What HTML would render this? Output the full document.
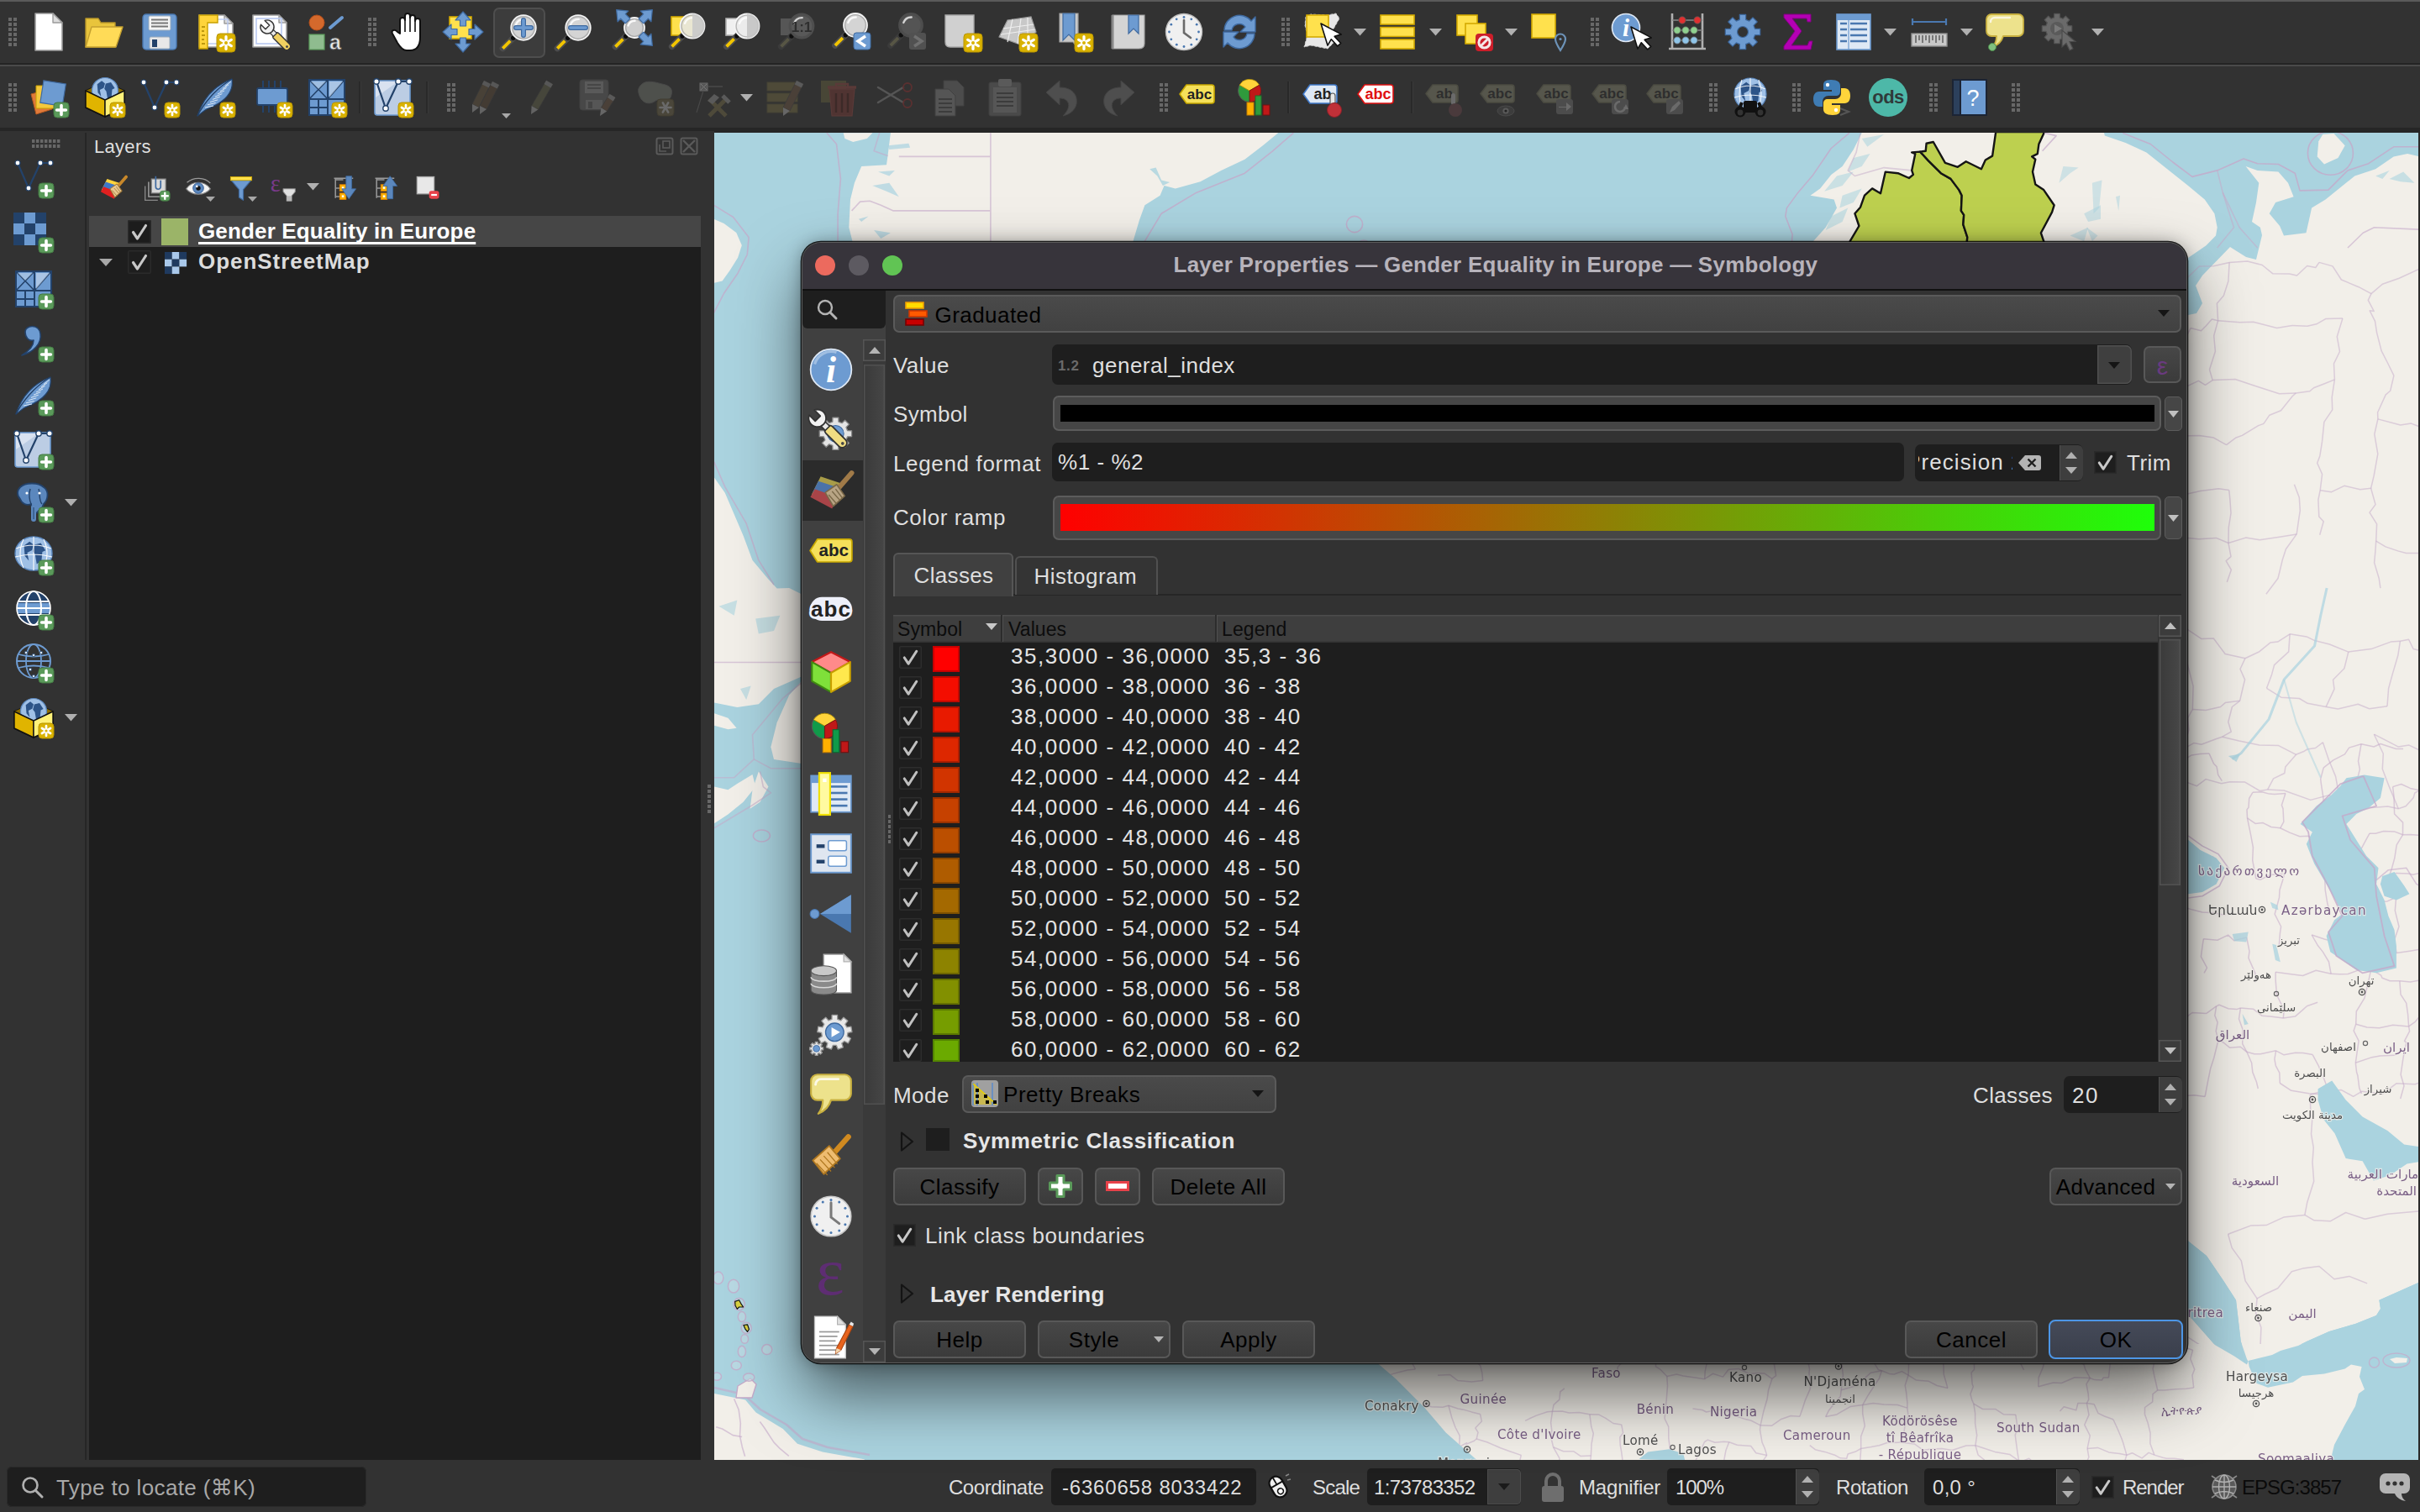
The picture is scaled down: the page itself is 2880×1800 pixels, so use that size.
<!DOCTYPE html>
<html lang="en"><head><meta charset="utf-8"><title>QGIS — Layer Properties</title>
<style>
html,body{margin:0;padding:0;background:#323232;}
body{width:2880px;height:1800px;position:relative;overflow:hidden;font-family:"Liberation Sans", "DejaVu Sans", sans-serif;}
body div,body svg{position:absolute;}
.t{white-space:nowrap;}
svg{overflow:visible;}
</style></head><body>
<div style="left:0px;top:0px;width:2880px;height:1800px;background:#323232;"></div>
<div style="left:0px;top:0px;width:2880px;height:2px;background:#5a5a5a;"></div>
<div style="left:0px;top:75px;width:2880px;height:2px;background:#242424;"></div>
<div style="left:0px;top:77px;width:2880px;height:2px;background:#4a4a4a;"></div>
<div style="left:0px;top:152px;width:2880px;height:4px;background:#262626;"></div>
<div style="left:101px;top:158px;width:2px;height:1580px;background:#262626;"></div>
<div class="t" style="left:112px;top:163.9px;font-size:22px;line-height:22px;color:#dfdfdf;letter-spacing:0.3px;">Layers</div>
<svg style="left:780px;top:163px;" width="56" height="24" viewBox="0 0 56 24"><rect x="1.5" y="1.5" width="19" height="19" rx="2" fill="none" stroke="#5a5a5a" stroke-width="2"/><rect x="9" y="5" width="8" height="8" fill="none" stroke="#5a5a5a" stroke-width="1.6"/><path d="M5 9v8h8" fill="none" stroke="#5a5a5a" stroke-width="1.6"/><rect x="30.5" y="1.5" width="19" height="19" rx="2" fill="none" stroke="#5a5a5a" stroke-width="2"/><path d="M33 4L47 18M47 4L33 18" stroke="#5a5a5a" stroke-width="2.4"/></svg>
<div style="left:106px;top:257px;width:728px;height:1481px;background:#1e1e1e;"></div>
<div style="left:106px;top:257px;width:728px;height:37px;background:#464646;"></div>
<div style="left:152px;top:262px;width:28px;height:28px;background:#1c1c1c;box-shadow:inset 0 0 0 1.5px #2a2a2a;border-radius:2px;"><svg width="28" height="28" viewBox="0 0 28 28" style="left:0;top:0"><path d="M6.5 14.5L11.5 22L21.5 6.5" fill="none" stroke="#c8c8c8" stroke-width="3.2" stroke-linecap="round" stroke-linejoin="round"/></svg></div>
<div style="left:192px;top:260px;width:32px;height:32px;background:#9bb468;"></div>
<div class="t" style="left:236px;top:262.0px;font-size:26px;line-height:26px;color:#ffffff;font-weight:700;letter-spacing:0.15px;text-decoration:underline;text-decoration-thickness:2.5px;text-underline-offset:4px;text-decoration-skip-ink:none;">Gender Equality in Europe</div>
<svg style="left:118.0px;top:307.5px;" width="16" height="9" viewBox="0 0 16 9"><path d="M0 0H16L8.0 9Z" fill="#a8a8a8"/></svg>
<div style="left:152px;top:298px;width:28px;height:28px;background:#1e1e1e;box-shadow:inset 0 0 0 1.5px #2b2b2b;border-radius:2px;"><svg width="28" height="28" viewBox="0 0 28 28" style="left:0;top:0"><path d="M6.5 14.5L11.5 22L21.5 6.5" fill="none" stroke="#c8c8c8" stroke-width="3.2" stroke-linecap="round" stroke-linejoin="round"/></svg></div>
<svg style="left:196px;top:300px;" width="26" height="26" viewBox="0 0 26 26"><rect x="0.0" y="0.0" width="8.7" height="8.7" fill="#1f3a5f"/><rect x="8.7" y="0.0" width="8.7" height="8.7" fill="#a9c8ea"/><rect x="17.4" y="0.0" width="8.7" height="8.7" fill="#1f3a5f"/><rect x="0.0" y="8.7" width="8.7" height="8.7" fill="#a9c8ea"/><rect x="8.7" y="8.7" width="8.7" height="8.7" fill="#1f3a5f"/><rect x="17.4" y="8.7" width="8.7" height="8.7" fill="#a9c8ea"/><rect x="0.0" y="17.4" width="8.7" height="8.7" fill="#1f3a5f"/><rect x="8.7" y="17.4" width="8.7" height="8.7" fill="#a9c8ea"/></svg>
<div class="t" style="left:236px;top:298.0px;font-size:26px;line-height:26px;color:#dcdcdc;font-weight:700;letter-spacing:0.95px;">OpenStreetMap</div>
<svg style="left:842px;top:934px;" width="4" height="36" viewBox="0 0 4 36"><rect x="0" y="0" width="4" height="4" fill="#686868"/><rect x="0" y="6" width="4" height="4" fill="#686868"/><rect x="0" y="12" width="4" height="4" fill="#686868"/><rect x="0" y="18" width="4" height="4" fill="#686868"/><rect x="0" y="24" width="4" height="4" fill="#686868"/><rect x="0" y="30" width="4" height="4" fill="#686868"/></svg>
<div style="left:0px;top:1738px;width:2880px;height:62px;background:#323232;"></div>
<div style="left:8px;top:1746px;width:428px;height:48px;background:#1e1e1e;border-radius:6px;box-shadow:inset 0 0 0 1px #2a2a2a;"></div>
<svg style="left:25px;top:1757px;" width="28" height="28" viewBox="0 0 28 28"><circle cx="11" cy="11" r="8.5" fill="none" stroke="#b0b0b0" stroke-width="2.6"/><path d="M17.5 17.5L25 25" stroke="#b0b0b0" stroke-width="3" stroke-linecap="round"/></svg>
<div class="t" style="left:67px;top:1758.0px;font-size:26px;line-height:26px;color:#a8a8a8;letter-spacing:0.38px;">Type to locate (⌘K)</div>
<div class="t" style="left:1129px;top:1758.7px;font-size:24px;line-height:24px;color:#dfdfdf;letter-spacing:-0.46px;">Coordinate</div>
<div style="left:1251px;top:1748px;width:244px;height:44px;background:#1e1e1e;border-radius:5px;"></div>
<div class="t" style="left:1264px;top:1758.7px;font-size:24px;line-height:24px;color:#dfdfdf;letter-spacing:0.81px;">-6360658 8033422</div>
<div class="t" style="left:1562px;top:1758.7px;font-size:24px;line-height:24px;color:#dfdfdf;letter-spacing:-0.8px;">Scale</div>
<div style="left:1627px;top:1748px;width:183px;height:44px;background:#1e1e1e;border-radius:5px;"></div>
<div style="left:1770px;top:1749px;width:40px;height:42px;background:#3e3e3e;border-radius:0 5px 5px 0;box-shadow:inset 0 0 0 1px #4c4c4c;"></div>
<svg style="left:1783.0px;top:1766.0px;" width="14" height="8" viewBox="0 0 14 8"><path d="M0 0H14L7.0 8Z" fill="#1a1a1a"/></svg>
<div class="t" style="left:1635px;top:1758.7px;font-size:24px;line-height:24px;color:#dfdfdf;letter-spacing:-0.63px;">1:73783352</div>
<div class="t" style="left:1879px;top:1758.7px;font-size:24px;line-height:24px;color:#dfdfdf;letter-spacing:-0.17px;">Magnifier</div>
<div style="left:1984px;top:1748px;width:181px;height:44px;background:#1e1e1e;border-radius:5px;"></div>
<div style="left:2137px;top:1749px;width:28px;height:42px;background:#3e3e3e;border-left:1px solid #505050;border-radius:0 6px 6px 0;box-sizing:border-box;"></div>
<svg style="left:2144.0px;top:1757.18px;" width="14" height="8" viewBox="0 0 14 8"><path d="M0 8H14L7.0 0Z" fill="#b0b0b0"/></svg>
<svg style="left:2144.0px;top:1775.24px;" width="14" height="8" viewBox="0 0 14 8"><path d="M0 0H14L7.0 8Z" fill="#b0b0b0"/></svg>
<div class="t" style="left:1994px;top:1758.7px;font-size:24px;line-height:24px;color:#dfdfdf;letter-spacing:-1.1px;">100%</div>
<div class="t" style="left:2185px;top:1758.7px;font-size:24px;line-height:24px;color:#dfdfdf;letter-spacing:-0.42px;">Rotation</div>
<div style="left:2290px;top:1748px;width:185px;height:44px;background:#1e1e1e;border-radius:5px;"></div>
<div style="left:2447px;top:1749px;width:28px;height:42px;background:#3e3e3e;border-left:1px solid #505050;border-radius:0 6px 6px 0;box-sizing:border-box;"></div>
<svg style="left:2454.0px;top:1757.18px;" width="14" height="8" viewBox="0 0 14 8"><path d="M0 8H14L7.0 0Z" fill="#b0b0b0"/></svg>
<svg style="left:2454.0px;top:1775.24px;" width="14" height="8" viewBox="0 0 14 8"><path d="M0 0H14L7.0 8Z" fill="#b0b0b0"/></svg>
<div class="t" style="left:2300px;top:1758.7px;font-size:24px;line-height:24px;color:#dfdfdf;letter-spacing:0.28px;">0,0 °</div>
<div style="left:2489px;top:1757px;width:27px;height:27px;background:#1e1e1e;box-shadow:inset 0 0 0 1.5px #2b2b2b;border-radius:2px;"><svg width="27" height="27" viewBox="0 0 28 28" style="left:0;top:0"><path d="M6.5 14.5L11.5 22L21.5 6.5" fill="none" stroke="#c8c8c8" stroke-width="3.2" stroke-linecap="round" stroke-linejoin="round"/></svg></div>
<div class="t" style="left:2526px;top:1758.7px;font-size:24px;line-height:24px;color:#dfdfdf;letter-spacing:-1.05px;">Render</div>
<div class="t" style="left:2668px;top:1758.7px;font-size:24px;line-height:24px;color:#0a0a0a;letter-spacing:-0.97px;">EPSG:3857</div>
<svg style="left:850px;top:158px;overflow:hidden" width="2028" height="1580" viewBox="850 158 2028 1580"><rect x="850" y="158" width="2028" height="1580" fill="#aad3df"/><path d="M1015.3 290.5L1010.3 270.7L1012.0 237.6L1016.9 217.8L1025.2 198.0L1055.0 196.3L1056.6 184.8L1059.9 158.3L1060.0 158.0L1521.0 158.0L1521.1 158.3L1502.9 173.2L1481.4 189.7L1453.3 202.9L1428.5 216.2L1398.8 224.4L1385.5 221.1L1380.6 232.7L1362.4 244.3L1355.8 262.4L1347.5 290.5L1349.0 300.0L1015.0 300.0Z" fill="#f2efe9"/><path d="M1003.7 158.3L1038.4 158.3L1031.8 164.9L1015.3 169.0L1005.4 164.9Z" fill="#f2efe9"/><path d="M1056.6 173.2L1081.4 170.7L1083.1 175.7L1058.3 178.1Z" fill="#aad3df" opacity="0.7"/><path d="M1045.0 204.6L1064.9 202.9L1058.3 209.5Z" fill="#aad3df" opacity="0.7"/><path d="M1038.4 221.1L1058.3 217.8L1069.8 234.3L1055.0 227.7Z" fill="#aad3df" opacity="0.7"/><path d="M1021.9 260.8L1033.5 257.5L1025.2 264.1Z" fill="#aad3df" opacity="0.7"/><path d="M1040.1 274.0L1059.9 277.3L1048.3 283.9Z" fill="#aad3df" opacity="0.7"/><path d="M1368.2 201.3L1375.6 199.6L1382.2 214.5L1392.1 217.0L1383.9 221.1L1377.3 209.5Z" fill="#aad3df" opacity="0.8"/><path d="M1069.8 186.4L1178.1 186.4" fill="none" stroke="#c4a9c9" stroke-width="1.6" stroke-opacity="0.6" stroke-linejoin="round"/><path d="M1013.6 250.9L1023.6 240.1L1035.1 239.3L1048.3 244.3L1063.2 250.9L1178.1 250.9" fill="none" stroke="#c4a9c9" stroke-width="1.6" stroke-opacity="0.6" stroke-linejoin="round"/><path d="M1178.9 158.3L1178.9 287.2" fill="none" stroke="#c4a9c9" stroke-width="1.6" stroke-opacity="0.6" stroke-linejoin="round"/><path d="M983.9 158.3L995.5 171.5L1000.4 212.9L997.1 254.2L997.1 287.2" fill="none" stroke="#c4a9c9" stroke-width="1.6" stroke-opacity="0.75" stroke-linejoin="round"/><path d="M1046.7 158.3L1040.1 179.8L1056.6 185.6" fill="none" stroke="#c4a9c9" stroke-width="1.6" stroke-opacity="0.6" stroke-linejoin="round"/><path d="M1539.3 158.3L1514.5 179.8L1481.4 206.2L1423.6 229.4L1382.2 254.2L1362.4 287.2" fill="none" stroke="#c4a9c9" stroke-width="1.6" stroke-opacity="0.8" stroke-linejoin="round"/><circle cx="1612" cy="267" r="9.6" fill="none" stroke="#c4a9c9" stroke-width="1.6" stroke-opacity="0.8"/><circle cx="1623" cy="293" r="7" fill="none" stroke="#c4a9c9" stroke-width="1.6" stroke-opacity="0.7"/><path d="M848.5 260.4L861.5 265.9L876.3 277.0L882.8 291.9L878.1 306.7L868.9 321.5L859.6 334.4L848.5 337.2Z" fill="#f2efe9"/><path d="M848.5 243.7L872.6 258.5L891.1 282.6L889.3 303.0L878.1 325.2L861.5 349.3L848.5 374.3" fill="none" stroke="#c4a9c9" stroke-width="1.6" stroke-opacity="0.75" stroke-linejoin="round"/><path d="M2157.9 303.8L2157.9 287.2L2172.7 270.7L2186.0 247.6L2182.6 237.6L2154.5 232.7L2166.1 224.4L2179.3 207.9L2192.6 198.0L2205.8 178.1L2215.7 158.3L2215.0 158.0L2504.0 158.0L2504.8 161.6L2529.6 169.9L2554.4 181.4L2579.2 201.3L2604.0 221.1L2623.8 237.6L2635.4 254.2L2638.7 270.7L2637.0 280.6L2625.5 292.2L2604.0 307.1L2579.2 320.3L2560.0 340.0L2150.0 340.0Z" fill="#f2efe9"/><path d="M2215.7 164.9L2242.1 160.0L2222.3 174.8Z" fill="#aad3df" opacity="0.55"/><path d="M2205.8 188.1L2225.6 183.1L2215.7 198.0L2199.2 204.6Z" fill="#aad3df" opacity="0.55"/><path d="M2186.0 209.5L2205.8 204.6L2192.6 221.1L2171.1 227.7Z" fill="#aad3df" opacity="0.55"/><path d="M2192.6 232.7L2215.7 224.4L2205.8 241.0L2189.3 247.6Z" fill="#aad3df" opacity="0.55"/><path d="M2179.3 257.5L2199.2 247.6L2192.6 264.1L2172.7 274.0Z" fill="#aad3df" opacity="0.55"/><path d="M2200.8 158.3L2179.3 176.5L2157.9 207.9L2139.7 229.4L2126.4 247.6L2124.8 257.5L2133.1 279.0L2132.2 290.5" fill="none" stroke="#c4a9c9" stroke-width="1.6" stroke-opacity="0.8" stroke-linejoin="round"/><path d="M2214.0 158.3L2209.1 181.4L2199.2 202.9L2207.4 209.5L2242.1 199.6L2275.2 202.9" fill="none" stroke="#c4a9c9" stroke-width="1.6" stroke-opacity="0.5" stroke-linejoin="round"/><path d="M2455.4 198.0L2473.6 199.6L2463.6 206.2L2450.4 217.8Z" fill="#aad3df" opacity="0.5"/><path d="M2480.2 254.2L2500.0 244.3L2500.0 260.8L2485.1 264.1Z" fill="#aad3df" opacity="0.5"/><path d="M2463.6 280.6L2485.1 270.7L2480.2 287.2Z" fill="#aad3df" opacity="0.5"/><path d="M2489.9 217.8L2501.5 214.5L2498.2 247.6L2491.6 254.2Z" fill="#aad3df" opacity="0.5"/><path d="M2518.0 234.3L2523.0 232.7L2521.3 250.9Z" fill="#aad3df" opacity="0.5"/><path d="M2483.3 270.7L2496.5 280.6L2489.9 287.2Z" fill="#aad3df" opacity="0.5"/><path d="M2199.2 292.2L2201.7 287.2L2212.4 269.0L2207.4 254.2L2214.0 246.7L2219.0 232.7L2228.1 224.4L2238.0 230.2L2243.8 204.6L2258.7 206.2L2271.9 212.0L2276.9 207.9L2275.2 202.9L2279.3 183.1L2275.2 181.4L2285.1 180.6L2295.0 191.4L2309.9 206.2L2321.5 212.9L2331.4 226.1L2334.7 232.7L2333.9 250.9L2337.2 255.8L2336.4 267.4L2341.3 282.3L2340.5 292.2Z" fill="#bdd04f" stroke="#151515" stroke-width="2.4" stroke-linejoin="round"/><path d="M2285.1 180.6L2291.7 179.8L2292.6 170.7L2300.8 169.0L2314.9 193.8L2329.8 198.8L2339.7 192.2L2357.9 201.3L2362.8 190.5L2371.1 185.6L2375.2 157.0L2433.1 157.0L2426.4 171.5L2424.8 183.1L2418.2 186.4L2422.3 189.7L2419.0 204.6L2422.3 219.5L2432.2 226.1L2444.6 244.3L2442.1 252.5L2428.9 277.3L2432.2 287.2L2433.9 292.2L2340.5 292.2L2341.3 282.3L2336.4 267.4L2337.2 255.8L2333.9 250.9L2334.7 232.7L2331.4 226.1L2321.5 212.9L2309.9 206.2L2295.0 191.4L2285.1 180.6Z" fill="#bdd04f" stroke="#151515" stroke-width="2.4" stroke-linejoin="round"/><path d="M2433.1 158.3L2447.1 161.6L2430.6 179.8" fill="none" stroke="#c4a9c9" stroke-width="1.6" stroke-opacity="0.7" stroke-linejoin="round"/><path d="M2590.0 380.0L2604.0 375.0L2614.0 373.0L2621.0 361.0L2613.0 340.0L2621.0 328.0L2654.0 294.0L2673.0 306.0L2685.0 309.0L2692.0 280.0L2689.9 270.7L2680.0 264.1L2685.0 241.0L2688.3 217.8L2672.6 198.0L2686.6 202.9L2711.4 204.6L2723.0 217.8L2729.6 234.3L2708.1 241.0L2700.7 254.2L2713.1 269.0L2718.0 280.6L2744.5 277.3L2751.1 247.6L2767.6 237.6L2802.3 209.5L2827.1 201.3L2848.6 186.4L2865.1 183.1L2880.0 186.4L2880.0 190.0L2880.0 400.0L2590.0 400.0Z" fill="#f2efe9"/><path d="M2827.1 209.5L2843.6 202.9L2835.4 212.9Z" fill="#aad3df" opacity="0.6"/><path d="M2843.6 212.9L2860.2 204.6L2873.4 217.8L2856.9 216.2Z" fill="#aad3df" opacity="0.6"/><path d="M2764.3 160.0L2777.5 159.1L2790.7 173.2L2782.5 188.1L2766.0 195.5L2757.7 186.4L2759.3 168.2Z" fill="#f2efe9"/><ellipse cx="2773.4" cy="182.3" rx="27" ry="26" fill="none" stroke="#c4a9c9" stroke-width="1.6" stroke-opacity="0.8"/><path d="M2526.3 158.3L2559.3 171.5L2585.8 193.0L2608.9 210.4L2638.7 202.9L2670.1 188.9L2686.6 194.7L2711.4 195.5L2731.2 206.2L2737.0 226.9L2770.9 226.1L2794.0 202.9L2818.8 194.7L2848.6 174.8L2880.0 174.8" fill="none" stroke="#c4a9c9" stroke-width="1.6" stroke-opacity="0.8" stroke-linejoin="round"/><path d="M2638.7 202.9L2645.3 229.4L2658.5 270.7L2638.7 295.0" fill="none" stroke="#c4a9c9" stroke-width="1.6" stroke-opacity="0.55" stroke-linejoin="round"/><path d="M2645.3 229.4L2665.1 270.7L2686.6 295.0" fill="none" stroke="#c4a9c9" stroke-width="1.6" stroke-opacity="0.55" stroke-linejoin="round"/><path d="M2880.0 273.2L2825.5 270.7L2812.2 277.3L2794.0 295.0" fill="none" stroke="#c4a9c9" stroke-width="1.6" stroke-opacity="0.6" stroke-linejoin="round"/><rect x="2590" y="395" width="290" height="1345" fill="#f2efe9"/><path d="M2588.1 332.4L2601.9 332.0L2617.3 317.0L2634.3 316.8L2653.1 312.4" fill="none" stroke="#c4a9c9" stroke-width="1.5" stroke-opacity="0.5" stroke-linejoin="round"/><path d="M2607.0 390.6L2619.5 393.8L2625.0 388.3L2632.4 379.9L2639.6 381.7" fill="none" stroke="#c4a9c9" stroke-width="1.5" stroke-opacity="0.5" stroke-linejoin="round"/><path d="M2607.0 390.6L2597.5 408.9L2598.4 426.6L2592.5 446.4L2590.3 457.5" fill="none" stroke="#c4a9c9" stroke-width="1.5" stroke-opacity="0.5" stroke-linejoin="round"/><path d="M2590.3 457.5L2603.3 459.5L2616.4 453.4L2624.5 458.3L2633.2 452.6" fill="none" stroke="#c4a9c9" stroke-width="1.5" stroke-opacity="0.5" stroke-linejoin="round"/><path d="M2590.3 457.5L2588.5 470.9L2584.8 488.2L2575.9 503.3L2577.4 516.5" fill="none" stroke="#c4a9c9" stroke-width="1.5" stroke-opacity="0.5" stroke-linejoin="round"/><path d="M2577.4 516.5L2596.3 519.1L2617.3 518.4L2634.4 521.1L2649.6 529.7" fill="none" stroke="#c4a9c9" stroke-width="1.5" stroke-opacity="0.5" stroke-linejoin="round"/><path d="M2595.2 589.7L2614.3 585.5L2618.5 584.4L2640.4 581.8L2652.8 583.6" fill="none" stroke="#c4a9c9" stroke-width="1.5" stroke-opacity="0.5" stroke-linejoin="round"/><path d="M2595.2 589.7L2587.9 602.2L2581.1 610.2L2582.5 626.2L2573.8 632.1" fill="none" stroke="#c4a9c9" stroke-width="1.5" stroke-opacity="0.5" stroke-linejoin="round"/><path d="M2573.8 632.1L2593.3 639.5L2616.8 641.7L2637.5 640.4L2652.0 646.5" fill="none" stroke="#c4a9c9" stroke-width="1.5" stroke-opacity="0.5" stroke-linejoin="round"/><path d="M2597.7 745.7L2620.1 760.6L2634.3 760.0L2648.1 778.5L2671.9 783.8" fill="none" stroke="#c4a9c9" stroke-width="1.5" stroke-opacity="0.5" stroke-linejoin="round"/><path d="M2597.7 745.7L2595.3 766.3L2603.0 789.8L2610.1 816.9L2609.3 844.6" fill="none" stroke="#c4a9c9" stroke-width="1.5" stroke-opacity="0.5" stroke-linejoin="round"/><path d="M2609.3 844.6L2625.1 845.5L2642.6 841.5L2648.2 836.6L2665.6 834.3" fill="none" stroke="#c4a9c9" stroke-width="1.5" stroke-opacity="0.5" stroke-linejoin="round"/><path d="M2609.3 844.6L2603.5 854.9L2604.9 868.8L2600.7 883.5L2596.2 892.6" fill="none" stroke="#c4a9c9" stroke-width="1.5" stroke-opacity="0.5" stroke-linejoin="round"/><path d="M2596.2 892.6L2610.8 884.6L2619.9 886.3L2637.1 879.7L2644.6 877.2" fill="none" stroke="#c4a9c9" stroke-width="1.5" stroke-opacity="0.5" stroke-linejoin="round"/><path d="M2596.2 892.6L2592.9 898.8L2588.7 915.2L2582.8 923.5L2576.3 930.6" fill="none" stroke="#c4a9c9" stroke-width="1.5" stroke-opacity="0.5" stroke-linejoin="round"/><path d="M2576.3 930.6L2596.4 929.1L2614.5 935.7L2625.1 927.6L2643.6 932.8" fill="none" stroke="#c4a9c9" stroke-width="1.5" stroke-opacity="0.5" stroke-linejoin="round"/><path d="M2653.1 312.4L2674.5 310.9L2692.2 315.5L2704.9 325.8L2724.7 326.0" fill="none" stroke="#c4a9c9" stroke-width="1.5" stroke-opacity="0.5" stroke-linejoin="round"/><path d="M2653.1 312.4L2651.9 334.7L2646.3 352.0L2638.4 361.2L2639.6 381.7" fill="none" stroke="#c4a9c9" stroke-width="1.5" stroke-opacity="0.5" stroke-linejoin="round"/><path d="M2639.6 381.7L2665.5 383.8L2681.6 383.2L2709.7 390.5L2727.9 387.5" fill="none" stroke="#c4a9c9" stroke-width="1.5" stroke-opacity="0.5" stroke-linejoin="round"/><path d="M2639.6 381.7L2634.7 399.8L2636.4 418.3L2629.5 440.1L2633.2 452.6" fill="none" stroke="#c4a9c9" stroke-width="1.5" stroke-opacity="0.5" stroke-linejoin="round"/><path d="M2633.2 452.6L2660.1 451.5L2683.2 459.3L2712.6 468.8L2732.3 467.9" fill="none" stroke="#c4a9c9" stroke-width="1.5" stroke-opacity="0.5" stroke-linejoin="round"/><path d="M2649.6 529.7L2660.5 521.3L2668.4 518.4L2687.7 506.6L2694.0 504.4" fill="none" stroke="#c4a9c9" stroke-width="1.5" stroke-opacity="0.5" stroke-linejoin="round"/><path d="M2652.8 583.6L2653.9 594.9L2655.0 610.8L2652.3 628.0L2652.0 646.5" fill="none" stroke="#c4a9c9" stroke-width="1.5" stroke-opacity="0.5" stroke-linejoin="round"/><path d="M2652.0 646.5L2672.6 640.1L2689.3 642.7L2714.5 638.9L2733.2 635.9" fill="none" stroke="#c4a9c9" stroke-width="1.5" stroke-opacity="0.5" stroke-linejoin="round"/><path d="M2652.0 646.5L2655.0 662.6L2649.1 667.7L2655.4 678.3L2650.3 693.1" fill="none" stroke="#c4a9c9" stroke-width="1.5" stroke-opacity="0.5" stroke-linejoin="round"/><path d="M2671.9 783.8L2688.9 775.7L2701.8 765.1L2710.7 764.1L2725.1 754.8" fill="none" stroke="#c4a9c9" stroke-width="1.5" stroke-opacity="0.5" stroke-linejoin="round"/><path d="M2671.9 783.8L2666.0 796.5L2671.6 809.1L2669.3 818.2L2665.6 834.3" fill="none" stroke="#c4a9c9" stroke-width="1.5" stroke-opacity="0.5" stroke-linejoin="round"/><path d="M2665.6 834.3L2656.4 841.5L2651.8 859.5L2655.3 871.2L2644.6 877.2" fill="none" stroke="#c4a9c9" stroke-width="1.5" stroke-opacity="0.5" stroke-linejoin="round"/><path d="M2644.6 877.2L2664.7 882.1L2688.8 887.0L2711.7 887.6L2732.6 898.3" fill="none" stroke="#c4a9c9" stroke-width="1.5" stroke-opacity="0.5" stroke-linejoin="round"/><path d="M2643.6 932.8L2653.9 930.8L2671.3 930.9L2689.3 941.5L2698.7 939.9" fill="none" stroke="#c4a9c9" stroke-width="1.5" stroke-opacity="0.5" stroke-linejoin="round"/><path d="M2724.7 326.0L2733.5 328.0L2745.7 316.5L2755.8 318.5L2760.0 312.4" fill="none" stroke="#c4a9c9" stroke-width="1.5" stroke-opacity="0.5" stroke-linejoin="round"/><path d="M2727.9 387.5L2745.9 388.3L2756.8 385.8L2768.1 379.4L2787.9 379.1" fill="none" stroke="#c4a9c9" stroke-width="1.5" stroke-opacity="0.5" stroke-linejoin="round"/><path d="M2732.3 467.9L2748.8 465.7L2753.5 461.7L2767.6 456.3L2778.4 451.9" fill="none" stroke="#c4a9c9" stroke-width="1.5" stroke-opacity="0.5" stroke-linejoin="round"/><path d="M2732.3 467.9L2728.1 471.7L2714.5 488.8L2700.9 494.2L2694.0 504.4" fill="none" stroke="#c4a9c9" stroke-width="1.5" stroke-opacity="0.5" stroke-linejoin="round"/><path d="M2730.4 576.8L2736.3 592.3L2737.3 607.9L2736.0 616.4L2733.2 635.9" fill="none" stroke="#c4a9c9" stroke-width="1.5" stroke-opacity="0.5" stroke-linejoin="round"/><path d="M2733.2 635.9L2720.4 653.7L2716.3 666.6L2711.0 688.5L2696.9 707.2" fill="none" stroke="#c4a9c9" stroke-width="1.5" stroke-opacity="0.5" stroke-linejoin="round"/><path d="M2725.1 754.8L2745.0 757.9L2754.6 762.6L2772.3 767.0L2794.8 776.1" fill="none" stroke="#c4a9c9" stroke-width="1.5" stroke-opacity="0.5" stroke-linejoin="round"/><path d="M2725.1 754.8L2723.7 775.9L2706.6 791.6L2703.6 802.9L2697.5 819.3" fill="none" stroke="#c4a9c9" stroke-width="1.5" stroke-opacity="0.5" stroke-linejoin="round"/><path d="M2697.5 819.3L2714.8 830.2L2736.4 831.5L2746.2 837.3L2768.2 841.4" fill="none" stroke="#c4a9c9" stroke-width="1.5" stroke-opacity="0.5" stroke-linejoin="round"/><path d="M2732.6 898.3L2742.4 894.2L2745.8 892.0L2755.6 890.5L2764.4 883.8" fill="none" stroke="#c4a9c9" stroke-width="1.5" stroke-opacity="0.5" stroke-linejoin="round"/><path d="M2732.6 898.3L2719.8 913.1L2718.8 920.5L2705.6 926.9L2698.7 939.9" fill="none" stroke="#c4a9c9" stroke-width="1.5" stroke-opacity="0.5" stroke-linejoin="round"/><path d="M2698.7 939.9L2718.1 941.0L2749.8 952.4L2771.5 946.6L2790.2 955.7" fill="none" stroke="#c4a9c9" stroke-width="1.5" stroke-opacity="0.5" stroke-linejoin="round"/><path d="M2760.0 312.4L2776.0 316.9L2786.4 333.0L2807.1 341.7L2822.0 349.6" fill="none" stroke="#c4a9c9" stroke-width="1.5" stroke-opacity="0.5" stroke-linejoin="round"/><path d="M2787.9 379.1L2781.3 400.8L2784.5 418.5L2777.5 432.9L2778.4 451.9" fill="none" stroke="#c4a9c9" stroke-width="1.5" stroke-opacity="0.5" stroke-linejoin="round"/><path d="M2778.4 451.9L2775.2 473.0L2775.7 487.8L2765.9 502.4L2763.6 525.3" fill="none" stroke="#c4a9c9" stroke-width="1.5" stroke-opacity="0.5" stroke-linejoin="round"/><path d="M2763.6 525.3L2760.8 543.0L2757.7 551.3L2763.6 564.5L2761.2 583.7" fill="none" stroke="#c4a9c9" stroke-width="1.5" stroke-opacity="0.5" stroke-linejoin="round"/><path d="M2761.2 583.7L2774.7 585.7L2789.9 578.3L2808.8 582.7L2821.6 581.3" fill="none" stroke="#c4a9c9" stroke-width="1.5" stroke-opacity="0.5" stroke-linejoin="round"/><path d="M2761.2 583.7L2758.9 595.0L2759.8 615.1L2765.2 620.8L2760.7 636.8" fill="none" stroke="#c4a9c9" stroke-width="1.5" stroke-opacity="0.5" stroke-linejoin="round"/><path d="M2794.8 776.1L2814.0 773.6L2822.0 772.6L2845.2 764.1L2856.4 763.3" fill="none" stroke="#c4a9c9" stroke-width="1.5" stroke-opacity="0.5" stroke-linejoin="round"/><path d="M2794.8 776.1L2789.9 795.8L2776.6 809.3L2778.0 820.4L2768.2 841.4" fill="none" stroke="#c4a9c9" stroke-width="1.5" stroke-opacity="0.5" stroke-linejoin="round"/><path d="M2768.2 841.4L2782.4 844.0L2806.2 838.2L2819.7 843.8L2841.0 840.7" fill="none" stroke="#c4a9c9" stroke-width="1.5" stroke-opacity="0.5" stroke-linejoin="round"/><path d="M2764.4 883.8L2771.3 904.2L2779.6 924.4L2782.7 941.3L2790.2 955.7" fill="none" stroke="#c4a9c9" stroke-width="1.5" stroke-opacity="0.5" stroke-linejoin="round"/><path d="M2790.2 955.7L2811.3 959.0L2822.5 961.5L2841.7 960.1L2854.3 962.7" fill="none" stroke="#c4a9c9" stroke-width="1.5" stroke-opacity="0.5" stroke-linejoin="round"/><path d="M2822.0 349.6L2835.3 338.3L2855.2 331.3L2878.2 320.7L2890.0 317.6" fill="none" stroke="#c4a9c9" stroke-width="1.5" stroke-opacity="0.5" stroke-linejoin="round"/><path d="M2822.0 349.6L2818.3 357.3L2825.2 370.5L2820.2 369.8L2826.5 382.3" fill="none" stroke="#c4a9c9" stroke-width="1.5" stroke-opacity="0.5" stroke-linejoin="round"/><path d="M2826.5 382.3L2828.6 396.1L2834.1 417.6L2841.2 431.5L2848.9 447.2" fill="none" stroke="#c4a9c9" stroke-width="1.5" stroke-opacity="0.5" stroke-linejoin="round"/><path d="M2848.9 447.2L2844.7 465.2L2839.2 469.9L2829.6 491.0L2829.9 498.9" fill="none" stroke="#c4a9c9" stroke-width="1.5" stroke-opacity="0.5" stroke-linejoin="round"/><path d="M2829.9 498.9L2856.7 506.0L2869.6 504.1L2893.6 513.4L2915.3 520.1" fill="none" stroke="#c4a9c9" stroke-width="1.5" stroke-opacity="0.5" stroke-linejoin="round"/><path d="M2829.9 498.9L2825.8 516.8L2829.8 540.3L2825.2 566.2L2821.6 581.3" fill="none" stroke="#c4a9c9" stroke-width="1.5" stroke-opacity="0.5" stroke-linejoin="round"/><path d="M2821.6 581.3L2827.0 600.6L2820.0 610.1L2828.6 623.9L2827.7 644.1" fill="none" stroke="#c4a9c9" stroke-width="1.5" stroke-opacity="0.5" stroke-linejoin="round"/><path d="M2827.7 644.1L2839.0 650.9L2853.7 655.9L2863.5 658.5L2881.5 658.5" fill="none" stroke="#c4a9c9" stroke-width="1.5" stroke-opacity="0.5" stroke-linejoin="round"/><path d="M2827.7 644.1L2826.9 656.0L2825.6 669.9L2831.2 688.5L2832.9 700.1" fill="none" stroke="#c4a9c9" stroke-width="1.5" stroke-opacity="0.5" stroke-linejoin="round"/><path d="M2856.4 763.3L2866.6 761.3L2872.0 772.5L2878.9 774.3L2890.3 776.9" fill="none" stroke="#c4a9c9" stroke-width="1.5" stroke-opacity="0.5" stroke-linejoin="round"/><path d="M2856.4 763.3L2853.8 780.3L2847.3 802.4L2842.6 819.5L2841.0 840.7" fill="none" stroke="#c4a9c9" stroke-width="1.5" stroke-opacity="0.5" stroke-linejoin="round"/><path d="M2825.3 874.2L2841.4 882.3L2854.3 889.1L2867.0 887.1L2887.0 896.8" fill="none" stroke="#c4a9c9" stroke-width="1.5" stroke-opacity="0.5" stroke-linejoin="round"/><path d="M2825.3 874.2L2836.3 897.3L2835.3 915.4L2843.3 936.4L2854.3 962.7" fill="none" stroke="#c4a9c9" stroke-width="1.5" stroke-opacity="0.5" stroke-linejoin="round"/><path d="M2854.3 962.7L2863.1 959.8L2872.1 949.7L2873.8 944.0L2882.8 939.1" fill="none" stroke="#c4a9c9" stroke-width="1.5" stroke-opacity="0.5" stroke-linejoin="round"/><path d="M2890.0 317.6L2896.7 341.8L2894.4 361.7L2902.9 388.3L2909.6 409.6" fill="none" stroke="#c4a9c9" stroke-width="1.5" stroke-opacity="0.5" stroke-linejoin="round"/><path d="M2909.6 409.6L2905.4 421.4L2901.7 445.3L2893.8 454.8L2887.9 472.0" fill="none" stroke="#c4a9c9" stroke-width="1.5" stroke-opacity="0.5" stroke-linejoin="round"/><path d="M2887.9 472.0L2897.1 487.8L2898.2 501.0L2909.9 504.7L2915.3 520.1" fill="none" stroke="#c4a9c9" stroke-width="1.5" stroke-opacity="0.5" stroke-linejoin="round"/><path d="M2915.3 520.1L2915.5 529.1L2905.7 537.0L2906.8 547.6L2896.9 562.2" fill="none" stroke="#c4a9c9" stroke-width="1.5" stroke-opacity="0.5" stroke-linejoin="round"/><path d="M2896.9 562.2L2897.6 591.7L2892.7 611.5L2881.2 638.0L2881.5 658.5" fill="none" stroke="#c4a9c9" stroke-width="1.5" stroke-opacity="0.5" stroke-linejoin="round"/><path d="M2889.5 710.2L2890.3 722.1L2884.7 740.0L2895.5 765.2L2890.3 776.9" fill="none" stroke="#c4a9c9" stroke-width="1.5" stroke-opacity="0.5" stroke-linejoin="round"/><path d="M2890.3 776.9L2894.7 790.5L2891.7 794.0L2900.1 803.6L2903.9 817.7" fill="none" stroke="#c4a9c9" stroke-width="1.5" stroke-opacity="0.5" stroke-linejoin="round"/><path d="M2887.0 896.8L2884.1 909.0L2879.7 919.9L2879.9 933.7L2882.8 939.1" fill="none" stroke="#c4a9c9" stroke-width="1.5" stroke-opacity="0.5" stroke-linejoin="round"/><path d="M2589.2 904.7L2599.5 904.4L2608.3 898.9L2618.4 897.6L2629.1 897.1" fill="none" stroke="#c4a9c9" stroke-width="1.5" stroke-opacity="0.55" stroke-linejoin="round"/><path d="M2595.0 933.3L2593.5 945.0L2581.4 958.7L2579.8 969.0L2575.3 984.2" fill="none" stroke="#c4a9c9" stroke-width="1.5" stroke-opacity="0.55" stroke-linejoin="round"/><path d="M2583.2 1041.3L2594.2 1033.5L2608.2 1028.3L2624.8 1025.1L2634.3 1019.7" fill="none" stroke="#c4a9c9" stroke-width="1.5" stroke-opacity="0.55" stroke-linejoin="round"/><path d="M2583.2 1041.3L2584.4 1050.4L2592.3 1062.8L2590.4 1069.9L2595.7 1079.0" fill="none" stroke="#c4a9c9" stroke-width="1.5" stroke-opacity="0.55" stroke-linejoin="round"/><path d="M2595.7 1079.0L2609.4 1083.1L2621.0 1086.1L2634.0 1086.8L2648.6 1089.4" fill="none" stroke="#c4a9c9" stroke-width="1.5" stroke-opacity="0.55" stroke-linejoin="round"/><path d="M2591.7 1124.8L2591.1 1132.5L2589.0 1144.3L2581.6 1155.8L2579.4 1162.2" fill="none" stroke="#c4a9c9" stroke-width="1.5" stroke-opacity="0.55" stroke-linejoin="round"/><path d="M2579.4 1162.2L2581.7 1176.0L2580.5 1189.3L2579.0 1204.7L2579.9 1220.2" fill="none" stroke="#c4a9c9" stroke-width="1.5" stroke-opacity="0.55" stroke-linejoin="round"/><path d="M2579.9 1220.2L2592.4 1218.3L2608.9 1205.5L2625.9 1206.4L2637.6 1197.9" fill="none" stroke="#c4a9c9" stroke-width="1.5" stroke-opacity="0.55" stroke-linejoin="round"/><path d="M2579.9 1220.2L2582.0 1233.2L2576.0 1243.9L2573.8 1249.7L2576.8 1261.6" fill="none" stroke="#c4a9c9" stroke-width="1.5" stroke-opacity="0.55" stroke-linejoin="round"/><path d="M2576.8 1261.6L2574.4 1270.1L2579.9 1282.4L2574.0 1293.1L2577.2 1301.6" fill="none" stroke="#c4a9c9" stroke-width="1.5" stroke-opacity="0.55" stroke-linejoin="round"/><path d="M2577.2 1301.6L2589.0 1303.6L2600.4 1304.6L2611.5 1303.8L2624.1 1305.5" fill="none" stroke="#c4a9c9" stroke-width="1.5" stroke-opacity="0.55" stroke-linejoin="round"/><path d="M2629.1 897.1L2634.4 908.9L2638.1 912.8L2639.7 922.3L2644.3 929.6" fill="none" stroke="#c4a9c9" stroke-width="1.5" stroke-opacity="0.55" stroke-linejoin="round"/><path d="M2622.4 1117.7L2638.9 1119.2L2651.6 1113.1L2658.7 1119.7L2673.7 1115.9" fill="none" stroke="#c4a9c9" stroke-width="1.5" stroke-opacity="0.55" stroke-linejoin="round"/><path d="M2622.4 1117.7L2621.1 1125.8L2619.4 1138.9L2626.5 1152.1L2623.1 1158.4" fill="none" stroke="#c4a9c9" stroke-width="1.5" stroke-opacity="0.55" stroke-linejoin="round"/><path d="M2637.6 1197.9L2641.0 1196.3L2651.9 1200.8L2661.8 1201.6L2666.4 1200.0" fill="none" stroke="#c4a9c9" stroke-width="1.5" stroke-opacity="0.55" stroke-linejoin="round"/><path d="M2637.6 1197.9L2635.8 1209.0L2639.1 1217.1L2637.2 1227.5L2639.9 1238.5" fill="none" stroke="#c4a9c9" stroke-width="1.5" stroke-opacity="0.55" stroke-linejoin="round"/><path d="M2639.9 1238.5L2646.4 1241.3L2653.8 1247.3L2666.4 1246.3L2673.9 1252.3" fill="none" stroke="#c4a9c9" stroke-width="1.5" stroke-opacity="0.55" stroke-linejoin="round"/><path d="M2639.9 1238.5L2634.8 1259.2L2630.7 1272.0L2627.8 1286.1L2624.1 1305.5" fill="none" stroke="#c4a9c9" stroke-width="1.5" stroke-opacity="0.55" stroke-linejoin="round"/><path d="M2680.9 943.3L2691.9 942.8L2700.5 945.1L2706.8 945.6L2719.9 944.6" fill="none" stroke="#c4a9c9" stroke-width="1.5" stroke-opacity="0.55" stroke-linejoin="round"/><path d="M2680.9 943.3L2676.7 950.5L2676.0 961.3L2674.0 963.9L2674.5 973.9" fill="none" stroke="#c4a9c9" stroke-width="1.5" stroke-opacity="0.55" stroke-linejoin="round"/><path d="M2674.5 973.9L2684.0 980.4L2693.2 979.6L2702.8 984.5L2713.7 985.8" fill="none" stroke="#c4a9c9" stroke-width="1.5" stroke-opacity="0.55" stroke-linejoin="round"/><path d="M2674.5 973.9L2678.4 992.9L2681.4 1008.8L2680.7 1024.2L2684.8 1046.0" fill="none" stroke="#c4a9c9" stroke-width="1.5" stroke-opacity="0.55" stroke-linejoin="round"/><path d="M2684.8 1046.0L2690.5 1047.2L2701.1 1041.6L2708.3 1040.9L2718.6 1040.2" fill="none" stroke="#c4a9c9" stroke-width="1.5" stroke-opacity="0.55" stroke-linejoin="round"/><path d="M2673.7 1115.9L2677.0 1132.7L2675.9 1140.4L2684.1 1159.1L2683.7 1169.2" fill="none" stroke="#c4a9c9" stroke-width="1.5" stroke-opacity="0.55" stroke-linejoin="round"/><path d="M2666.4 1200.0L2681.5 1201.2L2692.1 1209.3L2701.5 1210.0L2717.3 1212.1" fill="none" stroke="#c4a9c9" stroke-width="1.5" stroke-opacity="0.55" stroke-linejoin="round"/><path d="M2666.4 1200.0L2664.5 1213.1L2669.0 1225.4L2668.7 1242.6L2673.9 1252.3" fill="none" stroke="#c4a9c9" stroke-width="1.5" stroke-opacity="0.55" stroke-linejoin="round"/><path d="M2673.9 1252.3L2682.9 1254.7L2690.2 1254.7L2696.1 1253.5L2708.6 1250.8" fill="none" stroke="#c4a9c9" stroke-width="1.5" stroke-opacity="0.55" stroke-linejoin="round"/><path d="M2673.9 1252.3L2679.6 1265.2L2680.8 1276.4L2685.4 1288.0L2687.3 1296.0" fill="none" stroke="#c4a9c9" stroke-width="1.5" stroke-opacity="0.55" stroke-linejoin="round"/><path d="M2719.9 944.6L2715.4 958.6L2717.0 962.6L2717.8 978.4L2713.7 985.8" fill="none" stroke="#c4a9c9" stroke-width="1.5" stroke-opacity="0.55" stroke-linejoin="round"/><path d="M2713.7 985.8L2724.8 991.1L2736.8 995.8L2747.4 995.3L2756.0 1000.7" fill="none" stroke="#c4a9c9" stroke-width="1.5" stroke-opacity="0.55" stroke-linejoin="round"/><path d="M2718.6 1040.2L2716.4 1048.8L2713.0 1059.4L2712.5 1068.4L2710.1 1077.5" fill="none" stroke="#c4a9c9" stroke-width="1.5" stroke-opacity="0.55" stroke-linejoin="round"/><path d="M2710.1 1077.5L2707.1 1088.2L2714.6 1103.0L2713.4 1111.4L2712.3 1125.9" fill="none" stroke="#c4a9c9" stroke-width="1.5" stroke-opacity="0.55" stroke-linejoin="round"/><path d="M2708.1 1157.3L2728.6 1160.0L2740.6 1161.5L2756.2 1155.2L2774.1 1159.3" fill="none" stroke="#c4a9c9" stroke-width="1.5" stroke-opacity="0.55" stroke-linejoin="round"/><path d="M2708.1 1157.3L2708.2 1167.6L2709.5 1184.5L2718.2 1201.8L2717.3 1212.1" fill="none" stroke="#c4a9c9" stroke-width="1.5" stroke-opacity="0.55" stroke-linejoin="round"/><path d="M2717.3 1212.1L2731.4 1210.1L2739.2 1203.4L2745.4 1197.7L2758.2 1193.3" fill="none" stroke="#c4a9c9" stroke-width="1.5" stroke-opacity="0.55" stroke-linejoin="round"/><path d="M2708.6 1250.8L2718.1 1255.8L2731.8 1253.3L2740.8 1253.5L2752.2 1255.6" fill="none" stroke="#c4a9c9" stroke-width="1.5" stroke-opacity="0.55" stroke-linejoin="round"/><path d="M2708.6 1250.8L2706.9 1260.8L2708.3 1268.7L2712.8 1277.2L2713.3 1289.5" fill="none" stroke="#c4a9c9" stroke-width="1.5" stroke-opacity="0.55" stroke-linejoin="round"/><path d="M2713.3 1289.5L2726.8 1298.3L2747.8 1301.7L2764.1 1302.8L2780.5 1311.0" fill="none" stroke="#c4a9c9" stroke-width="1.5" stroke-opacity="0.55" stroke-linejoin="round"/><path d="M2765.3 913.8L2776.9 904.8L2790.5 897.8L2795.6 890.1L2810.1 885.7" fill="none" stroke="#c4a9c9" stroke-width="1.5" stroke-opacity="0.55" stroke-linejoin="round"/><path d="M2765.3 913.8L2761.7 927.4L2762.4 933.3L2764.9 949.6L2765.4 957.7" fill="none" stroke="#c4a9c9" stroke-width="1.5" stroke-opacity="0.55" stroke-linejoin="round"/><path d="M2765.4 957.7L2772.4 954.8L2782.7 954.7L2798.2 956.6L2804.7 952.6" fill="none" stroke="#c4a9c9" stroke-width="1.5" stroke-opacity="0.55" stroke-linejoin="round"/><path d="M2756.0 1000.7L2756.2 1009.9L2756.2 1008.4L2758.6 1020.3L2761.9 1022.7" fill="none" stroke="#c4a9c9" stroke-width="1.5" stroke-opacity="0.55" stroke-linejoin="round"/><path d="M2761.9 1022.7L2766.7 1042.1L2767.2 1059.4L2769.8 1075.5L2773.5 1088.4" fill="none" stroke="#c4a9c9" stroke-width="1.5" stroke-opacity="0.55" stroke-linejoin="round"/><path d="M2751.2 1113.0L2766.2 1118.0L2773.1 1119.9L2786.1 1126.2L2802.9 1133.4" fill="none" stroke="#c4a9c9" stroke-width="1.5" stroke-opacity="0.55" stroke-linejoin="round"/><path d="M2751.2 1113.0L2758.5 1125.8L2764.2 1132.9L2771.5 1145.0L2774.1 1159.3" fill="none" stroke="#c4a9c9" stroke-width="1.5" stroke-opacity="0.55" stroke-linejoin="round"/><path d="M2774.1 1159.3L2784.4 1159.7L2794.4 1159.5L2808.4 1154.4L2821.8 1153.9" fill="none" stroke="#c4a9c9" stroke-width="1.5" stroke-opacity="0.55" stroke-linejoin="round"/><path d="M2752.2 1255.6L2759.0 1268.3L2764.9 1282.0L2770.3 1296.5L2780.5 1311.0" fill="none" stroke="#c4a9c9" stroke-width="1.5" stroke-opacity="0.55" stroke-linejoin="round"/><path d="M2810.1 885.7L2825.1 889.0L2833.0 885.5L2851.5 891.5L2860.1 891.4" fill="none" stroke="#c4a9c9" stroke-width="1.5" stroke-opacity="0.55" stroke-linejoin="round"/><path d="M2810.1 885.7L2806.5 906.1L2808.4 915.9L2802.7 937.9L2804.7 952.6" fill="none" stroke="#c4a9c9" stroke-width="1.5" stroke-opacity="0.55" stroke-linejoin="round"/><path d="M2820.0 992.2L2827.1 992.2L2836.7 989.5L2849.4 989.9L2859.5 993.8" fill="none" stroke="#c4a9c9" stroke-width="1.5" stroke-opacity="0.55" stroke-linejoin="round"/><path d="M2820.0 992.2L2814.8 1001.7L2807.5 1015.3L2802.8 1026.5L2801.9 1032.8" fill="none" stroke="#c4a9c9" stroke-width="1.5" stroke-opacity="0.55" stroke-linejoin="round"/><path d="M2801.9 1032.8L2804.4 1045.7L2805.5 1059.1L2808.1 1068.4L2809.3 1079.8" fill="none" stroke="#c4a9c9" stroke-width="1.5" stroke-opacity="0.55" stroke-linejoin="round"/><path d="M2809.3 1079.8L2818.5 1078.7L2828.4 1073.9L2841.2 1072.9L2851.6 1068.2" fill="none" stroke="#c4a9c9" stroke-width="1.5" stroke-opacity="0.55" stroke-linejoin="round"/><path d="M2802.9 1133.4L2818.2 1133.1L2825.3 1134.7L2839.1 1133.6L2852.1 1134.4" fill="none" stroke="#c4a9c9" stroke-width="1.5" stroke-opacity="0.55" stroke-linejoin="round"/><path d="M2821.8 1153.9L2833.7 1161.2L2835.0 1164.2L2844.2 1167.8L2855.8 1167.7" fill="none" stroke="#c4a9c9" stroke-width="1.5" stroke-opacity="0.55" stroke-linejoin="round"/><path d="M2821.8 1153.9L2818.3 1169.9L2814.0 1188.1L2804.3 1204.0L2803.7 1219.2" fill="none" stroke="#c4a9c9" stroke-width="1.5" stroke-opacity="0.55" stroke-linejoin="round"/><path d="M2803.7 1219.2L2817.0 1223.0L2831.7 1223.7L2847.9 1220.3L2866.6 1221.9" fill="none" stroke="#c4a9c9" stroke-width="1.5" stroke-opacity="0.55" stroke-linejoin="round"/><path d="M2803.7 1219.2L2801.1 1227.2L2807.1 1239.1L2804.8 1254.9L2803.3 1265.3" fill="none" stroke="#c4a9c9" stroke-width="1.5" stroke-opacity="0.55" stroke-linejoin="round"/><path d="M2803.3 1265.3L2821.3 1259.1L2832.5 1257.1L2849.4 1256.3L2861.8 1249.5" fill="none" stroke="#c4a9c9" stroke-width="1.5" stroke-opacity="0.55" stroke-linejoin="round"/><path d="M2803.3 1265.3L2804.6 1276.5L2805.9 1280.6L2807.8 1295.4L2810.5 1301.9" fill="none" stroke="#c4a9c9" stroke-width="1.5" stroke-opacity="0.55" stroke-linejoin="round"/><path d="M2847.6 936.6L2857.7 933.5L2868.4 938.4L2882.9 941.7L2893.4 940.1" fill="none" stroke="#c4a9c9" stroke-width="1.5" stroke-opacity="0.55" stroke-linejoin="round"/><path d="M2847.6 936.6L2849.0 948.2L2849.6 968.9L2859.6 979.1L2859.5 993.8" fill="none" stroke="#c4a9c9" stroke-width="1.5" stroke-opacity="0.55" stroke-linejoin="round"/><path d="M2859.5 993.8L2868.3 993.6L2883.3 994.6L2894.6 988.3L2905.1 989.9" fill="none" stroke="#c4a9c9" stroke-width="1.5" stroke-opacity="0.55" stroke-linejoin="round"/><path d="M2859.5 993.8L2852.2 1005.9L2849.8 1021.5L2846.3 1034.4L2843.0 1043.6" fill="none" stroke="#c4a9c9" stroke-width="1.5" stroke-opacity="0.55" stroke-linejoin="round"/><path d="M2843.0 1043.6L2851.5 1039.4L2865.9 1040.1L2871.8 1041.3L2883.5 1038.3" fill="none" stroke="#c4a9c9" stroke-width="1.5" stroke-opacity="0.55" stroke-linejoin="round"/><path d="M2843.0 1043.6L2847.1 1051.9L2847.9 1052.9L2852.2 1059.0L2851.6 1068.2" fill="none" stroke="#c4a9c9" stroke-width="1.5" stroke-opacity="0.55" stroke-linejoin="round"/><path d="M2851.6 1068.2L2850.3 1084.1L2855.0 1103.0L2849.4 1119.3L2852.1 1134.4" fill="none" stroke="#c4a9c9" stroke-width="1.5" stroke-opacity="0.55" stroke-linejoin="round"/><path d="M2852.1 1134.4L2869.4 1131.9L2878.0 1130.6L2898.5 1135.4L2909.9 1132.3" fill="none" stroke="#c4a9c9" stroke-width="1.5" stroke-opacity="0.55" stroke-linejoin="round"/><path d="M2855.8 1167.7L2868.6 1169.0L2878.4 1167.2L2887.9 1173.7L2899.0 1172.7" fill="none" stroke="#c4a9c9" stroke-width="1.5" stroke-opacity="0.55" stroke-linejoin="round"/><path d="M2855.8 1167.7L2857.0 1183.8L2863.7 1194.2L2865.6 1207.7L2866.6 1221.9" fill="none" stroke="#c4a9c9" stroke-width="1.5" stroke-opacity="0.55" stroke-linejoin="round"/><path d="M2866.6 1221.9L2874.4 1216.3L2880.7 1208.6L2884.9 1203.6L2894.4 1195.9" fill="none" stroke="#c4a9c9" stroke-width="1.5" stroke-opacity="0.55" stroke-linejoin="round"/><path d="M2866.6 1221.9L2867.6 1227.7L2861.5 1239.4L2864.0 1241.2L2861.8 1249.5" fill="none" stroke="#c4a9c9" stroke-width="1.5" stroke-opacity="0.55" stroke-linejoin="round"/><path d="M2861.8 1249.5L2859.8 1260.9L2857.1 1279.2L2861.0 1292.8L2856.7 1308.0" fill="none" stroke="#c4a9c9" stroke-width="1.5" stroke-opacity="0.55" stroke-linejoin="round"/><path d="M2906.7 902.4L2902.9 912.7L2897.8 918.1L2897.5 931.9L2893.4 940.1" fill="none" stroke="#c4a9c9" stroke-width="1.5" stroke-opacity="0.55" stroke-linejoin="round"/><path d="M2893.4 940.1L2899.4 949.6L2899.2 964.4L2903.3 975.3L2905.1 989.9" fill="none" stroke="#c4a9c9" stroke-width="1.5" stroke-opacity="0.55" stroke-linejoin="round"/><path d="M2905.1 989.9L2902.6 1003.8L2893.6 1016.7L2889.5 1028.4L2883.5 1038.3" fill="none" stroke="#c4a9c9" stroke-width="1.5" stroke-opacity="0.55" stroke-linejoin="round"/><path d="M2883.5 1038.3L2888.9 1046.3L2899.9 1059.3L2899.6 1070.0L2910.1 1084.9" fill="none" stroke="#c4a9c9" stroke-width="1.5" stroke-opacity="0.55" stroke-linejoin="round"/><path d="M2910.1 1084.9L2913.5 1099.7L2912.5 1111.8L2912.6 1121.9L2909.9 1132.3" fill="none" stroke="#c4a9c9" stroke-width="1.5" stroke-opacity="0.55" stroke-linejoin="round"/><path d="M2909.9 1132.3L2907.8 1142.5L2903.2 1152.6L2900.3 1163.9L2899.0 1172.7" fill="none" stroke="#c4a9c9" stroke-width="1.5" stroke-opacity="0.55" stroke-linejoin="round"/><path d="M2899.0 1172.7L2897.6 1181.9L2896.9 1186.1L2894.6 1193.9L2894.4 1195.9" fill="none" stroke="#c4a9c9" stroke-width="1.5" stroke-opacity="0.55" stroke-linejoin="round"/><path d="M2894.4 1195.9L2897.6 1212.4L2897.1 1224.4L2892.7 1232.5L2893.6 1246.4" fill="none" stroke="#c4a9c9" stroke-width="1.5" stroke-opacity="0.55" stroke-linejoin="round"/><path d="M2893.6 1246.4L2898.4 1256.7L2902.5 1271.8L2907.5 1285.1L2911.0 1301.7" fill="none" stroke="#c4a9c9" stroke-width="1.5" stroke-opacity="0.55" stroke-linejoin="round"/><path d="M2577.5 1299.6L2578.7 1326.9L2586.7 1347.0L2588.8 1372.8L2599.6 1388.2" fill="none" stroke="#c4a9c9" stroke-width="1.5" stroke-opacity="0.5" stroke-linejoin="round"/><path d="M2599.6 1388.2L2591.1 1403.4L2584.3 1409.1L2575.3 1426.7L2573.7 1436.0" fill="none" stroke="#c4a9c9" stroke-width="1.5" stroke-opacity="0.5" stroke-linejoin="round"/><path d="M2573.7 1436.0L2566.5 1455.0L2570.4 1470.0L2565.0 1502.9L2571.7 1515.7" fill="none" stroke="#c4a9c9" stroke-width="1.5" stroke-opacity="0.5" stroke-linejoin="round"/><path d="M2571.7 1515.7L2577.4 1539.3L2579.8 1550.9L2594.5 1578.8L2602.2 1590.8" fill="none" stroke="#c4a9c9" stroke-width="1.5" stroke-opacity="0.5" stroke-linejoin="round"/><path d="M2602.2 1590.8L2623.4 1604.7L2648.0 1603.3L2668.4 1619.8L2687.0 1622.7" fill="none" stroke="#c4a9c9" stroke-width="1.5" stroke-opacity="0.5" stroke-linejoin="round"/><path d="M2651.6 1469.3L2678.4 1459.1L2697.0 1458.6L2717.7 1449.1L2742.9 1446.4" fill="none" stroke="#c4a9c9" stroke-width="1.5" stroke-opacity="0.5" stroke-linejoin="round"/><path d="M2651.6 1469.3L2656.2 1485.6L2667.3 1500.9L2672.1 1524.8L2686.1 1545.9" fill="none" stroke="#c4a9c9" stroke-width="1.5" stroke-opacity="0.5" stroke-linejoin="round"/><path d="M2686.1 1545.9L2694.3 1541.3L2710.7 1533.7L2727.4 1513.7L2740.3 1510.1" fill="none" stroke="#c4a9c9" stroke-width="1.5" stroke-opacity="0.5" stroke-linejoin="round"/><path d="M2686.1 1545.9L2684.5 1562.9L2690.9 1580.2L2689.9 1605.9L2687.0 1622.7" fill="none" stroke="#c4a9c9" stroke-width="1.5" stroke-opacity="0.5" stroke-linejoin="round"/><path d="M2687.0 1622.7L2708.6 1628.3L2732.5 1618.6L2741.5 1625.3L2766.6 1625.5" fill="none" stroke="#c4a9c9" stroke-width="1.5" stroke-opacity="0.5" stroke-linejoin="round"/><path d="M2693.4 1705.3L2707.4 1697.2L2737.6 1696.9L2757.9 1706.5L2775.3 1699.9" fill="none" stroke="#c4a9c9" stroke-width="1.5" stroke-opacity="0.5" stroke-linejoin="round"/><path d="M2657.3 1788.2L2678.2 1790.6L2699.5 1782.8L2736.1 1783.8L2752.8 1782.9" fill="none" stroke="#c4a9c9" stroke-width="1.5" stroke-opacity="0.5" stroke-linejoin="round"/><path d="M2749.3 1303.3L2761.3 1299.8L2786.5 1297.6L2800.6 1305.3L2811.0 1299.2" fill="none" stroke="#c4a9c9" stroke-width="1.5" stroke-opacity="0.5" stroke-linejoin="round"/><path d="M2749.3 1303.3L2749.8 1324.8L2751.9 1330.4L2750.5 1350.2L2753.3 1366.3" fill="none" stroke="#c4a9c9" stroke-width="1.5" stroke-opacity="0.5" stroke-linejoin="round"/><path d="M2753.3 1366.3L2752.0 1383.6L2753.7 1406.3L2745.8 1431.2L2742.9 1446.4" fill="none" stroke="#c4a9c9" stroke-width="1.5" stroke-opacity="0.5" stroke-linejoin="round"/><path d="M2742.9 1446.4L2754.0 1452.8L2773.6 1453.7L2791.7 1443.5L2814.5 1451.2" fill="none" stroke="#c4a9c9" stroke-width="1.5" stroke-opacity="0.5" stroke-linejoin="round"/><path d="M2740.3 1510.1L2760.0 1507.5L2778.0 1522.7L2795.7 1519.4L2817.2 1527.9" fill="none" stroke="#c4a9c9" stroke-width="1.5" stroke-opacity="0.5" stroke-linejoin="round"/><path d="M2766.6 1625.5L2789.8 1626.5L2805.6 1619.8L2820.9 1613.0L2835.5 1604.6" fill="none" stroke="#c4a9c9" stroke-width="1.5" stroke-opacity="0.5" stroke-linejoin="round"/><path d="M2775.3 1699.9L2771.7 1722.3L2764.2 1745.4L2763.8 1760.5L2752.8 1782.9" fill="none" stroke="#c4a9c9" stroke-width="1.5" stroke-opacity="0.5" stroke-linejoin="round"/><path d="M2752.8 1782.9L2767.9 1782.8L2782.2 1772.1L2806.3 1765.6L2816.2 1756.3" fill="none" stroke="#c4a9c9" stroke-width="1.5" stroke-opacity="0.5" stroke-linejoin="round"/><path d="M2811.0 1299.2L2835.9 1302.2L2851.8 1289.8L2874.3 1290.7L2894.1 1283.1" fill="none" stroke="#c4a9c9" stroke-width="1.5" stroke-opacity="0.5" stroke-linejoin="round"/><path d="M2814.5 1451.2L2841.3 1445.2L2880.9 1441.8L2898.3 1440.6L2933.6 1444.3" fill="none" stroke="#c4a9c9" stroke-width="1.5" stroke-opacity="0.5" stroke-linejoin="round"/><path d="M2835.5 1604.6L2849.1 1606.8L2863.2 1601.0L2876.4 1599.0L2886.2 1591.4" fill="none" stroke="#c4a9c9" stroke-width="1.5" stroke-opacity="0.5" stroke-linejoin="round"/><path d="M2810.8 1689.5L2843.6 1689.3L2871.3 1697.5L2896.0 1699.4L2925.9 1707.6" fill="none" stroke="#c4a9c9" stroke-width="1.5" stroke-opacity="0.5" stroke-linejoin="round"/><path d="M2810.8 1689.5L2815.3 1700.4L2815.7 1718.0L2820.0 1746.3L2816.2 1756.3" fill="none" stroke="#c4a9c9" stroke-width="1.5" stroke-opacity="0.5" stroke-linejoin="round"/><path d="M2886.2 1591.4L2899.2 1616.6L2903.7 1647.5L2908.8 1684.1L2925.9 1707.6" fill="none" stroke="#c4a9c9" stroke-width="1.5" stroke-opacity="0.5" stroke-linejoin="round"/><path d="M2925.9 1707.6L2922.6 1713.6L2914.4 1730.2L2915.7 1736.1L2917.2 1752.3" fill="none" stroke="#c4a9c9" stroke-width="1.5" stroke-opacity="0.5" stroke-linejoin="round"/><path d="M2590.0 990.5L2604.3 1000.0L2618.6 1011.9L2637.6 1021.4L2647.1 1033.3L2637.6 1052.4L2621.0 1061.9L2604.3 1064.3L2590.0 1066.7Z" fill="#aad3df"/><path d="M2604.3 995.2L2621.0 1007.1L2640.0 1016.7L2651.9 1033.3L2641.2 1054.8L2621.0 1066.7L2604.3 1069.0" fill="none" stroke="#c4a9c9" stroke-width="1.6" stroke-opacity="0.7" stroke-linejoin="round"/><path d="M2792.4 926.2L2813.8 922.6L2837.6 926.2L2832.9 950.0L2818.6 961.9L2804.3 969.0L2792.4 981.0L2804.3 1000.0L2816.2 1019.0L2830.5 1033.3L2828.1 1052.4L2837.6 1071.4L2842.4 1090.5L2849.5 1107.1L2851.9 1126.2L2851.9 1152.4L2828.1 1158.3L2804.3 1154.8L2787.6 1142.9L2773.3 1133.3L2768.6 1114.3L2778.1 1095.2L2787.6 1088.1L2780.5 1073.8L2768.6 1052.4L2754.3 1028.6L2744.8 1004.8L2751.9 990.5L2737.6 981.0L2756.7 959.5L2773.3 947.6L2785.2 935.7Z" fill="#aad3df"/><path d="M2835.2 1042.9L2849.5 1038.1L2861.4 1054.8L2867.4 1064.3L2851.9 1071.4L2837.6 1066.7L2832.9 1052.4Z" fill="#aad3df"/><path d="M2812.6 923.8L2828.1 959.5L2787.6 971.4L2797.1 1000.0L2825.7 1033.3L2828.1 1066.7L2837.6 1114.3L2849.5 1150.0L2811.4 1158.3L2780.5 1138.1L2771.0 1109.5L2787.6 1090.5L2771.0 1054.8L2751.9 1019.0L2747.1 990.5L2740.0 978.6L2785.2 933.3L2812.6 923.8" fill="none" stroke="#c4a9c9" stroke-width="1.8" stroke-opacity="0.8" stroke-linejoin="round"/><path d="M2828.1 1047.6L2842.4 1035.7L2863.8 1033.3L2875.7 1052.4L2880.0 1054.8" fill="none" stroke="#c4a9c9" stroke-width="1.6" stroke-opacity="0.6" stroke-linejoin="round"/><path d="M2656.7 1111.9L2675.7 1109.5L2673.3 1121.4L2659.0 1120.2Z" fill="#aad3df" opacity="0.75"/><path d="M2704.3 1123.8L2709.0 1125.0L2713.8 1145.2L2707.9 1142.9Z" fill="#aad3df" opacity="0.75"/><path d="M2701.9 1073.8L2710.2 1077.4L2711.4 1083.3L2704.3 1081.0Z" fill="#aad3df" opacity="0.75"/><path d="M2651.9 900.0L2666.2 897.6L2661.4 907.1Z" fill="#aad3df" opacity="0.75"/><path d="M2668.6 1207.1L2675.7 1219.0L2671.0 1220.2Z" fill="#aad3df" opacity="0.75"/><path d="M2769.1 700.0L2761.8 732.7L2754.5 769.1L2718.2 809.1L2700.0 856.4L2667.3 896.4L2656.4 903.6" fill="none" stroke="#aad3df" stroke-width="3" stroke-opacity="0.7" stroke-linejoin="round"/><path d="M2718.2 809.1L2732.7 860.0L2761.8 925.5" fill="none" stroke="#aad3df" stroke-width="2" stroke-opacity="0.5" stroke-linejoin="round"/><path d="M2758.6 1296.3L2775.2 1286.4L2791.7 1309.5L2811.6 1329.4L2841.3 1345.9L2861.2 1362.5L2884.3 1365.8L2884.3 1382.3L2864.5 1385.6L2844.6 1398.9L2824.8 1405.5L2811.6 1382.3L2791.7 1379.0L2778.5 1349.2L2765.2 1332.7L2758.6 1309.5Z" fill="#aad3df"/><path d="M2590.0 1465.0L2604.8 1478.0L2626.0 1495.0L2646.0 1524.6L2661.0 1547.7L2666.8 1597.0L2674.0 1618.0L2675.5 1620.7L2674.0 1624.5L2659.0 1614.5L2635.8 1601.0L2608.5 1570.0L2590.0 1555.0Z" fill="#aad3df"/><path d="M2675.5 1620.0L2704.0 1613.0L2714.0 1608.0L2735.0 1602.0L2745.0 1597.0L2772.0 1585.0L2803.0 1576.0L2828.0 1566.0L2833.0 1558.0L2831.4 1547.7L2880.0 1526.0L2880.0 1745.0L2772.0 1745.0L2778.0 1720.0L2790.7 1696.0L2803.0 1674.0L2807.0 1659.0L2814.0 1654.0L2808.0 1639.0L2810.6 1627.0L2798.0 1624.5L2790.7 1629.4L2766.0 1635.6L2740.0 1638.0L2728.8 1645.5L2699.0 1651.7L2685.4 1646.8L2676.7 1627.0Z" fill="#aad3df"/><path d="M2844.0 1618.0L2852.0 1616.0L2865.0 1617.0L2864.0 1622.0L2850.0 1623.0Z" fill="#f2efe9"/><ellipse cx="2852" cy="1619.5" rx="16" ry="8.5" fill="none" stroke="#c4a9c9" stroke-width="1.4" stroke-opacity="0.75"/><circle cx="2825.5" cy="1622" r="6" fill="none" stroke="#c4a9c9" stroke-width="1.4" stroke-opacity="0.75"/><path d="M1636.5 1600.0L1640.7 1624.0L1661.7 1642.1L1695.5 1675.9L1720.7 1705.4L1758.7 1739.1L1758.7 1768.6L2947.0 1768.6L2947.0 1600.0Z" fill="#f2efe9"/><clipPath id="afr"><path d="M1636.5 1600.0L1640.7 1624.0L1661.7 1642.1L1695.5 1675.9L1720.7 1705.4L1758.7 1739.1L1758.7 1768.6L2947.0 1768.6L2947.0 1600.0Z"/></clipPath><g clip-path="url(#afr)"><path d="M1630.6 1605.3L1636.3 1601.7L1647.9 1600.0L1656.0 1599.0L1668.1 1596.4" fill="none" stroke="#c4a9c9" stroke-width="1.5" stroke-opacity="0.5" stroke-linejoin="round"/><path d="M1630.6 1605.3L1630.9 1617.8L1638.7 1621.1L1639.2 1633.5L1643.8 1641.4" fill="none" stroke="#c4a9c9" stroke-width="1.5" stroke-opacity="0.5" stroke-linejoin="round"/><path d="M1643.8 1641.4L1656.5 1635.9L1665.5 1633.4L1675.0 1631.1L1684.4 1629.9" fill="none" stroke="#c4a9c9" stroke-width="1.5" stroke-opacity="0.5" stroke-linejoin="round"/><path d="M1643.8 1641.4L1639.2 1651.6L1637.0 1665.1L1632.6 1683.0L1632.0 1692.2" fill="none" stroke="#c4a9c9" stroke-width="1.5" stroke-opacity="0.5" stroke-linejoin="round"/><path d="M1632.0 1692.2L1646.6 1684.8L1662.0 1685.9L1673.7 1676.7L1690.2 1676.5" fill="none" stroke="#c4a9c9" stroke-width="1.5" stroke-opacity="0.5" stroke-linejoin="round"/><path d="M1648.6 1726.3L1652.3 1725.3L1664.0 1720.0L1664.6 1714.1L1674.5 1713.2" fill="none" stroke="#c4a9c9" stroke-width="1.5" stroke-opacity="0.5" stroke-linejoin="round"/><path d="M1640.1 1760.6L1657.0 1760.5L1668.7 1764.5L1685.0 1773.0L1695.9 1774.7" fill="none" stroke="#c4a9c9" stroke-width="1.5" stroke-opacity="0.5" stroke-linejoin="round"/><path d="M1668.1 1596.4L1671.9 1607.0L1675.0 1611.4L1679.2 1620.0L1684.4 1629.9" fill="none" stroke="#c4a9c9" stroke-width="1.5" stroke-opacity="0.5" stroke-linejoin="round"/><path d="M1690.2 1676.5L1696.9 1672.4L1703.6 1674.8L1716.9 1675.2L1723.9 1673.2" fill="none" stroke="#c4a9c9" stroke-width="1.5" stroke-opacity="0.5" stroke-linejoin="round"/><path d="M1690.2 1676.5L1687.7 1687.4L1682.6 1691.7L1680.9 1701.9L1674.5 1713.2" fill="none" stroke="#c4a9c9" stroke-width="1.5" stroke-opacity="0.5" stroke-linejoin="round"/><path d="M1674.5 1713.2L1691.6 1715.4L1703.0 1720.4L1723.4 1723.1L1736.7 1722.3" fill="none" stroke="#c4a9c9" stroke-width="1.5" stroke-opacity="0.5" stroke-linejoin="round"/><path d="M1674.5 1713.2L1683.0 1732.1L1684.4 1747.3L1693.9 1761.5L1695.9 1774.7" fill="none" stroke="#c4a9c9" stroke-width="1.5" stroke-opacity="0.5" stroke-linejoin="round"/><path d="M1695.9 1774.7L1701.6 1772.7L1708.4 1776.1L1712.6 1774.1L1714.3 1776.9" fill="none" stroke="#c4a9c9" stroke-width="1.5" stroke-opacity="0.5" stroke-linejoin="round"/><path d="M1734.5 1603.2L1738.7 1602.3L1744.3 1605.2L1750.5 1612.2L1755.5 1612.0" fill="none" stroke="#c4a9c9" stroke-width="1.5" stroke-opacity="0.5" stroke-linejoin="round"/><path d="M1711.0 1637.2L1725.6 1636.6L1734.9 1643.6L1751.4 1644.9L1764.7 1643.5" fill="none" stroke="#c4a9c9" stroke-width="1.5" stroke-opacity="0.5" stroke-linejoin="round"/><path d="M1723.9 1673.2L1735.2 1677.0L1740.9 1677.9L1751.3 1680.9L1761.6 1683.6" fill="none" stroke="#c4a9c9" stroke-width="1.5" stroke-opacity="0.5" stroke-linejoin="round"/><path d="M1723.9 1673.2L1727.8 1687.8L1732.1 1699.5L1737.2 1709.1L1736.7 1722.3" fill="none" stroke="#c4a9c9" stroke-width="1.5" stroke-opacity="0.5" stroke-linejoin="round"/><path d="M1736.7 1722.3L1745.6 1717.7L1744.9 1719.4L1754.5 1715.2L1757.2 1713.0" fill="none" stroke="#c4a9c9" stroke-width="1.5" stroke-opacity="0.5" stroke-linejoin="round"/><path d="M1736.7 1722.3L1730.2 1736.9L1726.2 1751.1L1722.7 1765.1L1714.3 1776.9" fill="none" stroke="#c4a9c9" stroke-width="1.5" stroke-opacity="0.5" stroke-linejoin="round"/><path d="M1714.3 1776.9L1727.5 1775.4L1748.2 1765.5L1759.3 1765.7L1776.2 1760.6" fill="none" stroke="#c4a9c9" stroke-width="1.5" stroke-opacity="0.5" stroke-linejoin="round"/><path d="M1755.5 1612.0L1755.6 1619.8L1761.7 1625.6L1763.8 1634.3L1764.7 1643.5" fill="none" stroke="#c4a9c9" stroke-width="1.5" stroke-opacity="0.5" stroke-linejoin="round"/><path d="M1761.6 1683.6L1763.4 1692.1L1755.8 1700.0L1759.0 1705.2L1757.2 1713.0" fill="none" stroke="#c4a9c9" stroke-width="1.5" stroke-opacity="0.5" stroke-linejoin="round"/><path d="M1757.2 1713.0L1769.5 1716.7L1785.7 1723.8L1796.7 1727.7L1810.3 1732.4" fill="none" stroke="#c4a9c9" stroke-width="1.5" stroke-opacity="0.5" stroke-linejoin="round"/><path d="M1776.2 1760.6L1782.2 1762.9L1783.7 1763.9L1789.6 1767.9L1797.4 1767.3" fill="none" stroke="#c4a9c9" stroke-width="1.5" stroke-opacity="0.5" stroke-linejoin="round"/><path d="M1815.1 1691.4L1820.3 1688.8L1828.4 1685.1L1841.4 1680.8L1847.5 1680.2" fill="none" stroke="#c4a9c9" stroke-width="1.5" stroke-opacity="0.5" stroke-linejoin="round"/><path d="M1810.3 1732.4L1807.6 1743.6L1804.0 1751.1L1796.9 1757.1L1797.4 1767.3" fill="none" stroke="#c4a9c9" stroke-width="1.5" stroke-opacity="0.5" stroke-linejoin="round"/><path d="M1797.4 1767.3L1814.0 1769.7L1832.7 1766.7L1844.8 1768.7L1863.9 1764.8" fill="none" stroke="#c4a9c9" stroke-width="1.5" stroke-opacity="0.5" stroke-linejoin="round"/><path d="M1859.2 1591.6L1861.5 1589.7L1870.2 1591.3L1873.0 1591.6L1878.8 1588.6" fill="none" stroke="#c4a9c9" stroke-width="1.5" stroke-opacity="0.5" stroke-linejoin="round"/><path d="M1861.8 1652.9L1856.8 1656.8L1855.9 1666.1L1849.0 1672.4L1847.5 1680.2" fill="none" stroke="#c4a9c9" stroke-width="1.5" stroke-opacity="0.5" stroke-linejoin="round"/><path d="M1847.5 1680.2L1859.0 1680.1L1867.4 1682.0L1879.3 1681.6L1891.9 1683.8" fill="none" stroke="#c4a9c9" stroke-width="1.5" stroke-opacity="0.5" stroke-linejoin="round"/><path d="M1847.5 1680.2L1845.6 1693.7L1846.8 1702.8L1846.3 1713.3L1848.6 1722.8" fill="none" stroke="#c4a9c9" stroke-width="1.5" stroke-opacity="0.5" stroke-linejoin="round"/><path d="M1848.6 1722.8L1860.5 1727.8L1872.5 1727.7L1880.9 1733.4L1893.4 1732.9" fill="none" stroke="#c4a9c9" stroke-width="1.5" stroke-opacity="0.5" stroke-linejoin="round"/><path d="M1848.6 1722.8L1856.0 1736.2L1854.3 1747.6L1858.7 1753.4L1863.9 1764.8" fill="none" stroke="#c4a9c9" stroke-width="1.5" stroke-opacity="0.5" stroke-linejoin="round"/><path d="M1863.9 1764.8L1867.2 1768.6L1874.9 1769.8L1881.3 1772.3L1884.2 1771.0" fill="none" stroke="#c4a9c9" stroke-width="1.5" stroke-opacity="0.5" stroke-linejoin="round"/><path d="M1878.8 1588.6L1893.1 1595.9L1908.3 1595.5L1922.6 1598.2L1935.6 1603.4" fill="none" stroke="#c4a9c9" stroke-width="1.5" stroke-opacity="0.5" stroke-linejoin="round"/><path d="M1891.9 1683.8L1902.4 1683.9L1910.9 1688.3L1919.9 1694.5L1929.7 1696.0" fill="none" stroke="#c4a9c9" stroke-width="1.5" stroke-opacity="0.5" stroke-linejoin="round"/><path d="M1891.9 1683.8L1893.8 1698.6L1896.3 1706.5L1894.0 1719.2L1893.4 1732.9" fill="none" stroke="#c4a9c9" stroke-width="1.5" stroke-opacity="0.5" stroke-linejoin="round"/><path d="M1893.4 1732.9L1892.1 1744.9L1887.1 1754.1L1882.8 1760.3L1884.2 1771.0" fill="none" stroke="#c4a9c9" stroke-width="1.5" stroke-opacity="0.5" stroke-linejoin="round"/><path d="M1935.6 1603.4L1933.4 1613.4L1932.9 1619.0L1925.2 1627.4L1925.1 1632.8" fill="none" stroke="#c4a9c9" stroke-width="1.5" stroke-opacity="0.5" stroke-linejoin="round"/><path d="M1929.7 1696.0L1931.6 1705.9L1927.8 1711.0L1928.2 1720.0L1929.7 1728.7" fill="none" stroke="#c4a9c9" stroke-width="1.5" stroke-opacity="0.5" stroke-linejoin="round"/><path d="M1929.7 1728.7L1930.9 1737.9L1926.8 1743.7L1932.5 1752.7L1928.6 1756.9" fill="none" stroke="#c4a9c9" stroke-width="1.5" stroke-opacity="0.5" stroke-linejoin="round"/><path d="M1928.6 1756.9L1937.3 1763.5L1948.1 1771.6L1963.9 1771.9L1973.4 1781.7" fill="none" stroke="#c4a9c9" stroke-width="1.5" stroke-opacity="0.5" stroke-linejoin="round"/><path d="M1963.8 1608.8L1984.0 1610.7L1996.9 1606.2L2013.1 1604.9L2030.9 1602.5" fill="none" stroke="#c4a9c9" stroke-width="1.5" stroke-opacity="0.5" stroke-linejoin="round"/><path d="M1963.8 1608.8L1970.8 1614.1L1970.5 1626.8L1976.2 1630.4L1983.8 1638.5" fill="none" stroke="#c4a9c9" stroke-width="1.5" stroke-opacity="0.5" stroke-linejoin="round"/><path d="M1983.8 1638.5L1995.3 1635.9L2003.1 1637.9L2015.5 1639.7L2028.7 1641.7" fill="none" stroke="#c4a9c9" stroke-width="1.5" stroke-opacity="0.5" stroke-linejoin="round"/><path d="M1983.8 1638.5L1984.5 1649.7L1983.3 1665.6L1982.0 1678.2L1981.1 1688.9" fill="none" stroke="#c4a9c9" stroke-width="1.5" stroke-opacity="0.5" stroke-linejoin="round"/><path d="M1981.1 1688.9L1985.7 1698.3L1985.8 1712.1L1987.5 1725.8L1987.2 1738.8" fill="none" stroke="#c4a9c9" stroke-width="1.5" stroke-opacity="0.5" stroke-linejoin="round"/><path d="M1987.2 1738.8L1980.8 1748.0L1983.8 1758.0L1977.1 1772.5L1973.4 1781.7" fill="none" stroke="#c4a9c9" stroke-width="1.5" stroke-opacity="0.5" stroke-linejoin="round"/><path d="M1973.4 1781.7L1981.0 1779.8L1991.1 1780.4L1996.0 1779.3L2005.9 1776.5" fill="none" stroke="#c4a9c9" stroke-width="1.5" stroke-opacity="0.5" stroke-linejoin="round"/><path d="M2030.9 1602.5L2034.1 1615.6L2030.8 1624.8L2029.2 1632.6L2028.7 1641.7" fill="none" stroke="#c4a9c9" stroke-width="1.5" stroke-opacity="0.5" stroke-linejoin="round"/><path d="M2028.7 1641.7L2038.4 1635.3L2050.4 1639.1L2057.2 1630.2L2069.4 1629.5" fill="none" stroke="#c4a9c9" stroke-width="1.5" stroke-opacity="0.5" stroke-linejoin="round"/><path d="M2014.5 1676.9L2025.9 1678.5L2030.7 1681.0L2046.2 1677.7L2053.2 1678.1" fill="none" stroke="#c4a9c9" stroke-width="1.5" stroke-opacity="0.5" stroke-linejoin="round"/><path d="M2028.5 1716.5L2032.4 1714.1L2040.8 1717.3L2051.5 1716.3L2057.7 1716.8" fill="none" stroke="#c4a9c9" stroke-width="1.5" stroke-opacity="0.5" stroke-linejoin="round"/><path d="M2028.5 1716.5L2023.0 1729.1L2014.3 1745.3L2008.7 1760.6L2005.9 1776.5" fill="none" stroke="#c4a9c9" stroke-width="1.5" stroke-opacity="0.5" stroke-linejoin="round"/><path d="M2005.9 1776.5L2018.2 1772.5L2028.8 1773.6L2037.6 1764.8L2047.9 1763.5" fill="none" stroke="#c4a9c9" stroke-width="1.5" stroke-opacity="0.5" stroke-linejoin="round"/><path d="M2069.4 1629.5L2081.3 1635.4L2091.4 1634.8L2100.1 1635.1L2108.9 1641.4" fill="none" stroke="#c4a9c9" stroke-width="1.5" stroke-opacity="0.5" stroke-linejoin="round"/><path d="M2053.2 1678.1L2063.1 1684.9L2077.3 1689.6L2083.7 1691.0L2095.1 1696.8" fill="none" stroke="#c4a9c9" stroke-width="1.5" stroke-opacity="0.5" stroke-linejoin="round"/><path d="M2057.7 1716.8L2067.4 1720.3L2083.7 1721.5L2089.8 1729.7L2102.7 1732.4" fill="none" stroke="#c4a9c9" stroke-width="1.5" stroke-opacity="0.5" stroke-linejoin="round"/><path d="M2057.7 1716.8L2054.0 1726.4L2051.0 1742.3L2047.7 1752.1L2047.9 1763.5" fill="none" stroke="#c4a9c9" stroke-width="1.5" stroke-opacity="0.5" stroke-linejoin="round"/><path d="M2047.9 1763.5L2058.3 1762.5L2071.4 1763.6L2075.9 1763.1L2088.8 1759.9" fill="none" stroke="#c4a9c9" stroke-width="1.5" stroke-opacity="0.5" stroke-linejoin="round"/><path d="M2113.2 1613.5L2121.2 1610.5L2131.1 1608.4L2145.1 1606.2L2153.5 1608.3" fill="none" stroke="#c4a9c9" stroke-width="1.5" stroke-opacity="0.5" stroke-linejoin="round"/><path d="M2113.2 1613.5L2110.4 1617.4L2111.7 1625.7L2113.6 1637.6L2108.9 1641.4" fill="none" stroke="#c4a9c9" stroke-width="1.5" stroke-opacity="0.5" stroke-linejoin="round"/><path d="M2108.9 1641.4L2104.5 1655.1L2103.1 1665.5L2098.8 1680.2L2095.1 1696.8" fill="none" stroke="#c4a9c9" stroke-width="1.5" stroke-opacity="0.5" stroke-linejoin="round"/><path d="M2095.1 1696.8L2108.4 1697.3L2119.1 1689.8L2131.2 1685.5L2141.9 1686.3" fill="none" stroke="#c4a9c9" stroke-width="1.5" stroke-opacity="0.5" stroke-linejoin="round"/><path d="M2095.1 1696.8L2094.5 1702.2L2097.1 1717.3L2100.0 1723.7L2102.7 1732.4" fill="none" stroke="#c4a9c9" stroke-width="1.5" stroke-opacity="0.5" stroke-linejoin="round"/><path d="M2102.7 1732.4L2098.1 1739.1L2097.9 1744.3L2092.2 1754.1L2088.8 1759.9" fill="none" stroke="#c4a9c9" stroke-width="1.5" stroke-opacity="0.5" stroke-linejoin="round"/><path d="M2088.8 1759.9L2102.7 1761.5L2117.9 1764.2L2128.4 1761.5L2145.0 1761.7" fill="none" stroke="#c4a9c9" stroke-width="1.5" stroke-opacity="0.5" stroke-linejoin="round"/><path d="M2153.5 1608.3L2160.0 1603.9L2174.7 1595.2L2186.7 1592.8L2193.5 1586.3" fill="none" stroke="#c4a9c9" stroke-width="1.5" stroke-opacity="0.5" stroke-linejoin="round"/><path d="M2153.5 1608.3L2151.0 1616.3L2153.5 1630.0L2152.9 1634.8L2154.7 1644.8" fill="none" stroke="#c4a9c9" stroke-width="1.5" stroke-opacity="0.5" stroke-linejoin="round"/><path d="M2154.7 1644.8L2154.3 1653.4L2148.5 1666.6L2145.7 1675.2L2141.9 1686.3" fill="none" stroke="#c4a9c9" stroke-width="1.5" stroke-opacity="0.5" stroke-linejoin="round"/><path d="M2153.8 1720.6L2160.2 1725.7L2171.6 1728.4L2183.5 1732.2L2190.0 1735.8" fill="none" stroke="#c4a9c9" stroke-width="1.5" stroke-opacity="0.5" stroke-linejoin="round"/><path d="M2145.0 1761.7L2155.7 1765.0L2170.3 1760.9L2175.7 1764.6L2188.4 1761.2" fill="none" stroke="#c4a9c9" stroke-width="1.5" stroke-opacity="0.5" stroke-linejoin="round"/><path d="M2193.5 1586.3L2191.7 1605.1L2191.2 1618.0L2193.4 1637.1L2191.2 1654.7" fill="none" stroke="#c4a9c9" stroke-width="1.5" stroke-opacity="0.5" stroke-linejoin="round"/><path d="M2191.2 1654.7L2205.6 1650.6L2215.2 1644.1L2226.4 1634.3L2239.4 1631.7" fill="none" stroke="#c4a9c9" stroke-width="1.5" stroke-opacity="0.5" stroke-linejoin="round"/><path d="M2191.2 1654.7L2190.3 1662.5L2185.6 1667.5L2176.4 1679.2L2172.7 1686.6" fill="none" stroke="#c4a9c9" stroke-width="1.5" stroke-opacity="0.5" stroke-linejoin="round"/><path d="M2172.7 1686.6L2185.9 1683.9L2191.0 1680.8L2201.9 1674.6L2216.7 1672.6" fill="none" stroke="#c4a9c9" stroke-width="1.5" stroke-opacity="0.5" stroke-linejoin="round"/><path d="M2190.0 1735.8L2197.7 1736.2L2199.1 1731.0L2207.8 1728.3L2214.7 1724.5" fill="none" stroke="#c4a9c9" stroke-width="1.5" stroke-opacity="0.5" stroke-linejoin="round"/><path d="M2188.4 1761.2L2193.0 1766.9L2206.2 1767.5L2212.7 1776.6L2217.9 1778.3" fill="none" stroke="#c4a9c9" stroke-width="1.5" stroke-opacity="0.5" stroke-linejoin="round"/><path d="M2225.4 1612.8L2236.2 1608.0L2250.8 1604.9L2264.3 1592.3L2274.3 1589.5" fill="none" stroke="#c4a9c9" stroke-width="1.5" stroke-opacity="0.5" stroke-linejoin="round"/><path d="M2225.4 1612.8L2229.3 1617.2L2230.9 1623.4L2235.4 1630.6L2239.4 1631.7" fill="none" stroke="#c4a9c9" stroke-width="1.5" stroke-opacity="0.5" stroke-linejoin="round"/><path d="M2239.4 1631.7L2248.4 1635.4L2254.1 1636.0L2263.4 1632.6L2271.1 1637.1" fill="none" stroke="#c4a9c9" stroke-width="1.5" stroke-opacity="0.5" stroke-linejoin="round"/><path d="M2239.4 1631.7L2236.4 1641.0L2230.6 1649.6L2222.7 1661.9L2216.7 1672.6" fill="none" stroke="#c4a9c9" stroke-width="1.5" stroke-opacity="0.5" stroke-linejoin="round"/><path d="M2216.7 1672.6L2229.5 1670.5L2242.1 1672.1L2258.3 1672.5L2269.8 1676.1" fill="none" stroke="#c4a9c9" stroke-width="1.5" stroke-opacity="0.5" stroke-linejoin="round"/><path d="M2216.7 1672.6L2216.7 1682.9L2219.3 1697.5L2214.7 1709.9L2214.7 1724.5" fill="none" stroke="#c4a9c9" stroke-width="1.5" stroke-opacity="0.5" stroke-linejoin="round"/><path d="M2214.7 1724.5L2226.9 1722.5L2236.4 1720.7L2245.9 1717.5L2260.7 1717.2" fill="none" stroke="#c4a9c9" stroke-width="1.5" stroke-opacity="0.5" stroke-linejoin="round"/><path d="M2214.7 1724.5L2213.8 1738.3L2214.0 1752.3L2217.4 1766.0L2217.9 1778.3" fill="none" stroke="#c4a9c9" stroke-width="1.5" stroke-opacity="0.5" stroke-linejoin="round"/><path d="M2217.9 1778.3L2229.7 1776.2L2241.9 1779.3L2257.9 1777.3L2266.6 1773.9" fill="none" stroke="#c4a9c9" stroke-width="1.5" stroke-opacity="0.5" stroke-linejoin="round"/><path d="M2274.3 1589.5L2269.8 1605.2L2271.5 1609.8L2271.6 1622.2L2271.1 1637.1" fill="none" stroke="#c4a9c9" stroke-width="1.5" stroke-opacity="0.5" stroke-linejoin="round"/><path d="M2271.1 1637.1L2280.6 1643.1L2295.3 1644.3L2305.1 1649.5L2317.9 1652.5" fill="none" stroke="#c4a9c9" stroke-width="1.5" stroke-opacity="0.5" stroke-linejoin="round"/><path d="M2271.1 1637.1L2267.2 1649.3L2268.5 1656.8L2269.9 1670.0L2269.8 1676.1" fill="none" stroke="#c4a9c9" stroke-width="1.5" stroke-opacity="0.5" stroke-linejoin="round"/><path d="M2269.8 1676.1L2271.0 1685.4L2267.0 1697.1L2265.7 1706.8L2260.7 1717.2" fill="none" stroke="#c4a9c9" stroke-width="1.5" stroke-opacity="0.5" stroke-linejoin="round"/><path d="M2260.7 1717.2L2269.6 1718.0L2278.4 1719.0L2288.8 1726.5L2298.2 1725.0" fill="none" stroke="#c4a9c9" stroke-width="1.5" stroke-opacity="0.5" stroke-linejoin="round"/><path d="M2266.6 1773.9L2271.2 1777.0L2280.4 1775.8L2295.1 1773.4L2299.8 1775.4" fill="none" stroke="#c4a9c9" stroke-width="1.5" stroke-opacity="0.5" stroke-linejoin="round"/><path d="M2313.4 1587.3L2319.3 1594.9L2327.5 1597.9L2338.7 1597.5L2344.9 1605.9" fill="none" stroke="#c4a9c9" stroke-width="1.5" stroke-opacity="0.5" stroke-linejoin="round"/><path d="M2313.4 1587.3L2311.5 1603.8L2312.7 1618.6L2313.3 1636.3L2317.9 1652.5" fill="none" stroke="#c4a9c9" stroke-width="1.5" stroke-opacity="0.5" stroke-linejoin="round"/><path d="M2298.2 1725.0L2311.1 1724.6L2323.1 1726.5L2340.0 1721.0L2350.9 1720.7" fill="none" stroke="#c4a9c9" stroke-width="1.5" stroke-opacity="0.5" stroke-linejoin="round"/><path d="M2299.8 1775.4L2316.4 1772.8L2329.4 1766.9L2347.8 1763.4L2365.2 1762.3" fill="none" stroke="#c4a9c9" stroke-width="1.5" stroke-opacity="0.5" stroke-linejoin="round"/><path d="M2344.9 1605.9L2361.0 1602.9L2370.6 1603.1L2385.5 1599.7L2396.1 1601.4" fill="none" stroke="#c4a9c9" stroke-width="1.5" stroke-opacity="0.5" stroke-linejoin="round"/><path d="M2344.9 1605.9L2349.1 1613.3L2349.6 1630.2L2346.1 1633.9L2347.1 1647.5" fill="none" stroke="#c4a9c9" stroke-width="1.5" stroke-opacity="0.5" stroke-linejoin="round"/><path d="M2347.1 1647.5L2348.3 1650.8L2344.9 1659.5L2346.8 1666.5L2348.8 1671.2" fill="none" stroke="#c4a9c9" stroke-width="1.5" stroke-opacity="0.5" stroke-linejoin="round"/><path d="M2348.8 1671.2L2359.6 1677.5L2374.6 1677.4L2384.2 1683.7L2398.8 1684.2" fill="none" stroke="#c4a9c9" stroke-width="1.5" stroke-opacity="0.5" stroke-linejoin="round"/><path d="M2348.8 1671.2L2350.6 1682.3L2350.6 1694.7L2352.7 1708.7L2350.9 1720.7" fill="none" stroke="#c4a9c9" stroke-width="1.5" stroke-opacity="0.5" stroke-linejoin="round"/><path d="M2350.9 1720.7L2360.7 1724.0L2374.1 1728.4L2391.9 1731.6L2402.6 1739.1" fill="none" stroke="#c4a9c9" stroke-width="1.5" stroke-opacity="0.5" stroke-linejoin="round"/><path d="M2350.9 1720.7L2354.1 1732.0L2361.3 1737.8L2358.5 1754.3L2365.2 1762.3" fill="none" stroke="#c4a9c9" stroke-width="1.5" stroke-opacity="0.5" stroke-linejoin="round"/><path d="M2396.1 1601.4L2409.2 1603.9L2416.8 1601.2L2430.2 1599.8L2438.7 1601.7" fill="none" stroke="#c4a9c9" stroke-width="1.5" stroke-opacity="0.5" stroke-linejoin="round"/><path d="M2396.1 1601.4L2398.0 1605.7L2404.8 1612.7L2403.0 1619.8L2408.6 1630.8" fill="none" stroke="#c4a9c9" stroke-width="1.5" stroke-opacity="0.5" stroke-linejoin="round"/><path d="M2398.8 1684.2L2401.2 1701.0L2398.2 1708.4L2400.9 1728.7L2402.6 1739.1" fill="none" stroke="#c4a9c9" stroke-width="1.5" stroke-opacity="0.5" stroke-linejoin="round"/><path d="M2402.6 1739.1L2406.7 1739.6L2414.7 1736.2L2422.0 1742.9L2432.9 1739.8" fill="none" stroke="#c4a9c9" stroke-width="1.5" stroke-opacity="0.5" stroke-linejoin="round"/><path d="M2402.6 1739.1L2401.8 1748.2L2394.3 1756.6L2397.4 1767.4L2390.7 1773.6" fill="none" stroke="#c4a9c9" stroke-width="1.5" stroke-opacity="0.5" stroke-linejoin="round"/><path d="M2438.7 1601.7L2444.5 1603.8L2456.2 1604.7L2462.7 1604.4L2468.1 1608.8" fill="none" stroke="#c4a9c9" stroke-width="1.5" stroke-opacity="0.5" stroke-linejoin="round"/><path d="M2438.7 1601.7L2434.4 1617.1L2430.9 1628.7L2426.2 1639.9L2425.8 1650.8" fill="none" stroke="#c4a9c9" stroke-width="1.5" stroke-opacity="0.5" stroke-linejoin="round"/><path d="M2425.8 1650.8L2443.6 1646.1L2453.4 1646.5L2469.1 1639.8L2487.3 1640.5" fill="none" stroke="#c4a9c9" stroke-width="1.5" stroke-opacity="0.5" stroke-linejoin="round"/><path d="M2451.4 1679.9L2456.2 1674.8L2470.8 1678.8L2472.9 1670.5L2483.4 1670.6" fill="none" stroke="#c4a9c9" stroke-width="1.5" stroke-opacity="0.5" stroke-linejoin="round"/><path d="M2432.9 1739.8L2428.8 1746.9L2432.1 1747.0L2429.3 1753.4L2427.0 1756.1" fill="none" stroke="#c4a9c9" stroke-width="1.5" stroke-opacity="0.5" stroke-linejoin="round"/><path d="M2427.0 1756.1L2436.8 1756.6L2450.2 1762.3L2465.0 1764.4L2480.5 1764.9" fill="none" stroke="#c4a9c9" stroke-width="1.5" stroke-opacity="0.5" stroke-linejoin="round"/><path d="M2468.1 1608.8L2470.4 1618.1L2479.9 1624.3L2481.6 1629.8L2487.3 1640.5" fill="none" stroke="#c4a9c9" stroke-width="1.5" stroke-opacity="0.5" stroke-linejoin="round"/><path d="M2487.3 1640.5L2492.6 1642.6L2501.4 1643.0L2503.3 1639.9L2509.4 1640.1" fill="none" stroke="#c4a9c9" stroke-width="1.5" stroke-opacity="0.5" stroke-linejoin="round"/><path d="M2487.3 1640.5L2483.0 1647.7L2485.2 1659.3L2485.7 1666.2L2483.4 1670.6" fill="none" stroke="#c4a9c9" stroke-width="1.5" stroke-opacity="0.5" stroke-linejoin="round"/><path d="M2483.4 1670.6L2492.2 1671.8L2496.9 1682.3L2504.5 1686.0L2514.9 1689.7" fill="none" stroke="#c4a9c9" stroke-width="1.5" stroke-opacity="0.5" stroke-linejoin="round"/><path d="M2483.4 1670.6L2486.0 1684.4L2480.7 1696.2L2487.3 1709.1L2484.1 1724.4" fill="none" stroke="#c4a9c9" stroke-width="1.5" stroke-opacity="0.5" stroke-linejoin="round"/><path d="M2484.1 1724.4L2496.5 1723.4L2509.7 1728.9L2522.5 1730.4L2530.9 1732.3" fill="none" stroke="#c4a9c9" stroke-width="1.5" stroke-opacity="0.5" stroke-linejoin="round"/><path d="M2484.1 1724.4L2485.9 1734.8L2480.0 1747.4L2483.0 1752.2L2480.5 1764.9" fill="none" stroke="#c4a9c9" stroke-width="1.5" stroke-opacity="0.5" stroke-linejoin="round"/><path d="M2480.5 1764.9L2492.3 1761.5L2502.1 1765.5L2511.3 1765.1L2520.8 1760.6" fill="none" stroke="#c4a9c9" stroke-width="1.5" stroke-opacity="0.5" stroke-linejoin="round"/><path d="M2519.2 1592.3L2531.6 1597.5L2542.3 1595.8L2547.1 1595.3L2560.8 1599.6" fill="none" stroke="#c4a9c9" stroke-width="1.5" stroke-opacity="0.5" stroke-linejoin="round"/><path d="M2519.2 1592.3L2516.4 1604.8L2510.7 1613.7L2511.1 1624.8L2509.4 1640.1" fill="none" stroke="#c4a9c9" stroke-width="1.5" stroke-opacity="0.5" stroke-linejoin="round"/><path d="M2514.9 1689.7L2520.5 1702.0L2525.2 1713.2L2526.9 1718.2L2530.9 1732.3" fill="none" stroke="#c4a9c9" stroke-width="1.5" stroke-opacity="0.5" stroke-linejoin="round"/><path d="M2530.9 1732.3L2537.5 1729.7L2549.1 1735.9L2557.1 1729.4L2563.8 1732.1" fill="none" stroke="#c4a9c9" stroke-width="1.5" stroke-opacity="0.5" stroke-linejoin="round"/><path d="M2530.9 1732.3L2528.2 1740.9L2523.3 1749.0L2523.8 1751.2L2520.8 1760.6" fill="none" stroke="#c4a9c9" stroke-width="1.5" stroke-opacity="0.5" stroke-linejoin="round"/><path d="M2520.8 1760.6L2538.1 1767.9L2546.4 1768.1L2560.5 1769.3L2574.9 1775.8" fill="none" stroke="#c4a9c9" stroke-width="1.5" stroke-opacity="0.5" stroke-linejoin="round"/><path d="M2560.8 1599.6L2576.7 1599.3L2582.8 1600.1L2598.9 1603.7L2609.6 1607.2" fill="none" stroke="#c4a9c9" stroke-width="1.5" stroke-opacity="0.5" stroke-linejoin="round"/><path d="M2560.8 1599.6L2565.8 1613.7L2562.1 1629.3L2563.8 1637.9L2567.7 1655.0" fill="none" stroke="#c4a9c9" stroke-width="1.5" stroke-opacity="0.5" stroke-linejoin="round"/><path d="M2567.7 1655.0L2576.0 1655.0L2589.2 1653.8L2601.8 1653.3L2610.7 1652.0" fill="none" stroke="#c4a9c9" stroke-width="1.5" stroke-opacity="0.5" stroke-linejoin="round"/><path d="M2567.7 1655.0L2562.0 1659.6L2561.7 1668.8L2552.6 1675.5L2552.4 1683.4" fill="none" stroke="#c4a9c9" stroke-width="1.5" stroke-opacity="0.5" stroke-linejoin="round"/><path d="M2552.4 1683.4L2556.0 1693.5L2559.1 1706.0L2558.9 1718.6L2563.8 1732.1" fill="none" stroke="#c4a9c9" stroke-width="1.5" stroke-opacity="0.5" stroke-linejoin="round"/><path d="M2563.8 1732.1L2574.0 1735.3L2578.4 1736.2L2587.8 1736.3L2598.9 1737.7" fill="none" stroke="#c4a9c9" stroke-width="1.5" stroke-opacity="0.5" stroke-linejoin="round"/><path d="M2609.6 1607.2L2606.7 1617.5L2611.7 1630.3L2609.0 1637.1L2610.7 1652.0" fill="none" stroke="#c4a9c9" stroke-width="1.5" stroke-opacity="0.5" stroke-linejoin="round"/></g><path d="M2590.0 1465.0L2604.8 1478.0L2626.0 1495.0L2646.0 1524.6L2661.0 1547.7L2666.8 1597.0L2674.0 1618.0L2675.5 1620.7L2674.0 1624.5L2659.0 1614.5L2635.8 1601.0L2608.5 1570.0L2590.0 1555.0Z" fill="#aad3df"/><path d="M2675.5 1620.0L2704.0 1613.0L2714.0 1608.0L2735.0 1602.0L2745.0 1597.0L2772.0 1585.0L2803.0 1576.0L2828.0 1566.0L2833.0 1558.0L2831.4 1547.7L2880.0 1526.0L2880.0 1745.0L2772.0 1745.0L2778.0 1720.0L2790.7 1696.0L2803.0 1674.0L2807.0 1659.0L2814.0 1654.0L2808.0 1639.0L2810.6 1627.0L2798.0 1624.5L2790.7 1629.4L2766.0 1635.6L2740.0 1638.0L2728.8 1645.5L2699.0 1651.7L2685.4 1646.8L2676.7 1627.0Z" fill="#aad3df"/><path d="M2844.0 1618.0L2852.0 1616.0L2865.0 1617.0L2864.0 1622.0L2850.0 1623.0Z" fill="#f2efe9"/><ellipse cx="2852" cy="1619.5" rx="16" ry="8.5" fill="none" stroke="#c4a9c9" stroke-width="1.4" stroke-opacity="0.75"/><circle cx="2825.5" cy="1622" r="6" fill="none" stroke="#c4a9c9" stroke-width="1.4" stroke-opacity="0.75"/><path d="M1950.6 1737.0L1961.1 1728.5L1986.4 1725.2L2003.3 1730.6L2005.4 1739.1Z" fill="#aad3df"/><path d="M850.0 1659.0L887.0 1666.6L899.6 1681.5L931.8 1701.0L949.0 1718.7L979.0 1728.6L1028.5 1737.3L1035.0 1745.0L850.0 1745.0Z" fill="#f2efe9"/><path d="M850.0 1652.0L885.0 1660.0L905.0 1678.0L936.0 1696.0L955.0 1713.0L985.0 1723.0L1035.0 1732.0" fill="none" stroke="#c4a9c9" stroke-width="2.5" stroke-opacity="0.6" stroke-linejoin="round"/><path d="M878.0 1650.0L893.0 1641.0L900.0 1648.0L895.0 1664.0L876.0 1664.0Z" fill="#f2efe9" stroke="#c4a9c9" stroke-width="1.4" stroke-linejoin="round"/><ellipse cx="854.8" cy="1521.3" rx="6.0" ry="7.3" fill="#c5dde6" fill-opacity="0.5" stroke="#c4a9c9" stroke-width="1.5" stroke-opacity="0.8"/><ellipse cx="873.0" cy="1531.2" rx="6.6" ry="7.9" fill="#c5dde6" fill-opacity="0.5" stroke="#c4a9c9" stroke-width="1.5" stroke-opacity="0.8"/><ellipse cx="879.6" cy="1552.7" rx="6.6" ry="7.3" fill="#c5dde6" fill-opacity="0.5" stroke="#c4a9c9" stroke-width="1.5" stroke-opacity="0.8"/><ellipse cx="882.9" cy="1567.6" rx="4.6" ry="6.0" fill="#c5dde6" fill-opacity="0.5" stroke="#c4a9c9" stroke-width="1.5" stroke-opacity="0.8"/><ellipse cx="888.2" cy="1580.8" rx="6.0" ry="6.6" fill="#c5dde6" fill-opacity="0.5" stroke="#c4a9c9" stroke-width="1.5" stroke-opacity="0.8"/><ellipse cx="886.2" cy="1594.0" rx="4.3" ry="5.3" fill="#c5dde6" fill-opacity="0.5" stroke="#c4a9c9" stroke-width="1.5" stroke-opacity="0.8"/><ellipse cx="882.9" cy="1608.9" rx="4.6" ry="6.6" fill="#c5dde6" fill-opacity="0.5" stroke="#c4a9c9" stroke-width="1.5" stroke-opacity="0.8"/><ellipse cx="876.3" cy="1625.5" rx="6.0" ry="5.3" fill="#c5dde6" fill-opacity="0.5" stroke="#c4a9c9" stroke-width="1.5" stroke-opacity="0.8"/><ellipse cx="912.7" cy="1606.6" rx="6.0" ry="6.0" fill="#c5dde6" fill-opacity="0.5" stroke="#c4a9c9" stroke-width="1.5" stroke-opacity="0.8"/><ellipse cx="853.2" cy="1638.7" rx="5.3" ry="4.6" fill="#c5dde6" fill-opacity="0.5" stroke="#c4a9c9" stroke-width="1.5" stroke-opacity="0.8"/><ellipse cx="891.2" cy="1639.7" rx="6.6" ry="4.6" fill="#c5dde6" fill-opacity="0.5" stroke="#c4a9c9" stroke-width="1.5" stroke-opacity="0.8"/><path d="M874.7 1549.4L879.6 1547.7L882.3 1552.7L884.6 1556.0L879.6 1556.0L877.3 1558.3L875.0 1554.3Z" fill="#d8d040" stroke="#151515" stroke-width="1.2" stroke-linejoin="round"/><path d="M884.9 1577.5L889.5 1576.8L891.5 1582.5L889.5 1585.4L886.9 1582.1Z" fill="#d8d040" stroke="#151515" stroke-width="1.2" stroke-linejoin="round"/><path d="M830.0 550.4L850.0 568.6L862.8 586.8L873.7 612.3L884.6 637.8L895.5 666.9L913.7 688.8L924.6 700.4L939.2 700.0L953.8 707.3L953.8 805.6L921.0 820.1L902.8 838.3L877.3 842.0L850.0 836.5L830.0 836.5Z" fill="#f2efe9"/><path d="M830.0 532.2L850.0 550.4L862.8 579.6L888.2 623.2L902.8 666.9L921.0 696.1" fill="none" stroke="#c4a9c9" stroke-width="1.6" stroke-opacity="0.7" stroke-linejoin="round"/><path d="M850.0 788.5L953.8 788.5" fill="none" stroke="#c4a9c9" stroke-width="1.6" stroke-opacity="0.6" stroke-linejoin="round"/><path d="M899.2 736.4L928.3 732.8L921.0 751.0L902.8 754.6Z" fill="#aad3df" opacity="0.6"/><path d="M855.5 721.8L877.3 714.6L873.7 732.8Z" fill="#aad3df" opacity="0.6"/><path d="M881.0 820.1L893.7 816.5L888.2 832.9Z" fill="#aad3df" opacity="0.6"/><path d="M955.6 809.2L939.2 827.4L924.6 860.2L917.4 889.3L921.0 903.9L955.6 909.3Z" fill="#f2efe9"/><path d="M850.0 849.3L866.4 854.7L876.6 866.7L866.4 868.2L850.0 863.8Z" fill="#f2efe9"/><path d="M850.0 936.6L866.4 940.3L877.3 933.0L895.5 922.1L899.2 936.6L884.6 954.8L866.4 969.4L850.0 980.3Z" fill="#f2efe9"/><path d="M902.8 918.4L914.5 936.6L904.6 954.8L892.6 962.8L895.5 940.3Z" fill="#f2efe9"/><path d="M953.8 812.9L931.9 831.1L895.5 874.7L897.3 903.9L873.7 925.7L850.0 925.7" fill="none" stroke="#c4a9c9" stroke-width="1.6" stroke-opacity="0.55" stroke-linejoin="round"/><path d="M897.3 903.9L917.4 914.8L953.8 914.8" fill="none" stroke="#c4a9c9" stroke-width="1.6" stroke-opacity="0.55" stroke-linejoin="round"/><path d="M904.6 918.4L908.3 936.6L917.4 943.9L895.5 958.5L850.0 985.8" fill="none" stroke="#c4a9c9" stroke-width="1.6" stroke-opacity="0.55" stroke-linejoin="round"/><ellipse cx="906.4" cy="994.9" rx="10" ry="7" fill="none" stroke="#c4a9c9" stroke-width="1.5" stroke-opacity="0.8"/><path d="M873.6 1665.2L879.2 1678.4L881.3 1694.5L880.5 1709.5L883.3 1722.7L886.6 1733.7" fill="none" stroke="#c4a9c9" stroke-width="1.6" stroke-opacity="0.6" stroke-linejoin="round"/><path d="M904.4 1692.6L909.5 1699.5L921.0 1717.1L928.1 1724.4L938.8 1733.4" fill="none" stroke="#c4a9c9" stroke-width="1.6" stroke-opacity="0.6" stroke-linejoin="round"/><path d="M852.2 1698.7L859.5 1701.0L872.2 1708.6L883.1 1710.5" fill="none" stroke="#c4a9c9" stroke-width="1.6" stroke-opacity="0.6" stroke-linejoin="round"/><g font-family="'DejaVu Sans','Liberation Sans',sans-serif" style="filter:blur(0.45px)"><text x="2616" y="1042" font-size="15.13" fill="#7a5f86" text-anchor="start" letter-spacing="2.4" paint-order="stroke" stroke="#f2efe9" stroke-opacity="0.7" stroke-width="2.5">საქართველო</text><text x="2628" y="1089" font-size="15.13" fill="#4f4f4f" text-anchor="start" letter-spacing="0.3" paint-order="stroke" stroke="#f2efe9" stroke-opacity="0.7" stroke-width="2.5">Երևան</text><circle cx="2692" cy="1083" r="3.6" fill="none" stroke="#555" stroke-width="1.3"/><circle cx="2692" cy="1083" r="1.4" fill="#555"/><text x="2715" y="1089" font-size="15.13" fill="#7a5f86" text-anchor="start" letter-spacing="1.3" paint-order="stroke" stroke="#f2efe9" stroke-opacity="0.7" stroke-width="2.5">Azərbaycan</text><text x="2724" y="1124" font-size="13.35" fill="#4f4f4f" text-anchor="middle" letter-spacing="0" paint-order="stroke" stroke="#f2efe9" stroke-opacity="0.7" stroke-width="2.5">تبريز</text><text x="2685" y="1165" font-size="13.35" fill="#4f4f4f" text-anchor="middle" letter-spacing="0" paint-order="stroke" stroke="#f2efe9" stroke-opacity="0.7" stroke-width="2.5">هەولێر</text><text x="2709" y="1204" font-size="13.35" fill="#4f4f4f" text-anchor="middle" letter-spacing="0" paint-order="stroke" stroke="#f2efe9" stroke-opacity="0.7" stroke-width="2.5">سلێمانی</text><circle cx="2709" cy="1183" r="2.6" fill="none" stroke="#666" stroke-width="1.2"/><text x="2810" y="1172" font-size="13.35" fill="#4f4f4f" text-anchor="middle" letter-spacing="0" paint-order="stroke" stroke="#f2efe9" stroke-opacity="0.7" stroke-width="2.5">تهران</text><circle cx="2811" cy="1181" r="3.6" fill="none" stroke="#555" stroke-width="1.3"/><circle cx="2811" cy="1181" r="1.4" fill="#555"/><text x="2657" y="1237" font-size="15.13" fill="#7a5f86" text-anchor="middle" letter-spacing="0" paint-order="stroke" stroke="#f2efe9" stroke-opacity="0.7" stroke-width="2.5">العراق</text><text x="2783" y="1251" font-size="13.35" fill="#4f4f4f" text-anchor="middle" letter-spacing="0" paint-order="stroke" stroke="#f2efe9" stroke-opacity="0.7" stroke-width="2.5">اصفهان</text><circle cx="2815" cy="1242" r="2.6" fill="none" stroke="#666" stroke-width="1.2"/><text x="2852" y="1252" font-size="15.13" fill="#7a5f86" text-anchor="middle" letter-spacing="0" paint-order="stroke" stroke="#f2efe9" stroke-opacity="0.7" stroke-width="2.5">ایران</text><text x="2749" y="1282" font-size="13.35" fill="#4f4f4f" text-anchor="middle" letter-spacing="0" paint-order="stroke" stroke="#f2efe9" stroke-opacity="0.7" stroke-width="2.5">البصرة</text><text x="2830" y="1301" font-size="13.35" fill="#4f4f4f" text-anchor="middle" letter-spacing="0" paint-order="stroke" stroke="#f2efe9" stroke-opacity="0.7" stroke-width="2.5">شيراز</text><text x="2752" y="1332" font-size="13.35" fill="#4f4f4f" text-anchor="middle" letter-spacing="0" paint-order="stroke" stroke="#f2efe9" stroke-opacity="0.7" stroke-width="2.5">مدينة الكويت</text><circle cx="2752" cy="1309" r="3.6" fill="none" stroke="#555" stroke-width="1.3"/><circle cx="2752" cy="1309" r="1.4" fill="#555"/><text x="2684" y="1411" font-size="15.13" fill="#7a5f86" text-anchor="middle" letter-spacing="0" paint-order="stroke" stroke="#f2efe9" stroke-opacity="0.7" stroke-width="2.5">السعودية</text><text x="2891" y="1403" font-size="15.13" fill="#7a5f86" text-anchor="end" letter-spacing="0" paint-order="stroke" stroke="#f2efe9" stroke-opacity="0.7" stroke-width="2.5">الإمارات العربية</text><text x="2876" y="1423" font-size="15.13" fill="#7a5f86" text-anchor="end" letter-spacing="0" paint-order="stroke" stroke="#f2efe9" stroke-opacity="0.7" stroke-width="2.5">المتحدة</text><text x="2688" y="1561" font-size="13.35" fill="#4f4f4f" text-anchor="middle" letter-spacing="0" paint-order="stroke" stroke="#f2efe9" stroke-opacity="0.7" stroke-width="2.5">صنعاء</text><circle cx="2687.5" cy="1569" r="3.6" fill="none" stroke="#555" stroke-width="1.3"/><circle cx="2687.5" cy="1569" r="1.4" fill="#555"/><text x="2740" y="1569" font-size="15.13" fill="#7a5f86" text-anchor="middle" letter-spacing="0" paint-order="stroke" stroke="#f2efe9" stroke-opacity="0.7" stroke-width="2.5">اليمن</text><text x="2646" y="1568" font-size="15.13" fill="#7a5f86" text-anchor="end" letter-spacing="0.3" paint-order="stroke" stroke="#f2efe9" stroke-opacity="0.7" stroke-width="2.5">Eritrea</text><text x="2649" y="1643.6" font-size="15.13" fill="#4f4f4f" text-anchor="start" letter-spacing="0.3" paint-order="stroke" stroke="#f2efe9" stroke-opacity="0.7" stroke-width="2.5">Hargeysa</text><text x="2685" y="1663" font-size="13.35" fill="#4f4f4f" text-anchor="middle" letter-spacing="0" paint-order="stroke" stroke="#f2efe9" stroke-opacity="0.7" stroke-width="2.5">هرجيسا</text><circle cx="2685" cy="1671" r="3.6" fill="none" stroke="#555" stroke-width="1.3"/><circle cx="2685" cy="1671" r="1.4" fill="#555"/><text x="2687" y="1742" font-size="15.13" fill="#7a5f86" text-anchor="start" letter-spacing="0.3" paint-order="stroke" stroke="#f2efe9" stroke-opacity="0.7" stroke-width="2.5">Soomaaliya</text><text x="2572" y="1684" font-size="14.24" fill="#7a5f86" text-anchor="start" letter-spacing="0.3" paint-order="stroke" stroke="#f2efe9" stroke-opacity="0.7" stroke-width="2.5">ኢትዮጵያ</text><text x="1624" y="1679" font-size="15.13" fill="#4f4f4f" text-anchor="start" letter-spacing="0.3" paint-order="stroke" stroke="#f2efe9" stroke-opacity="0.7" stroke-width="2.5">Conakry</text><circle cx="1697.5" cy="1671" r="3.6" fill="none" stroke="#555" stroke-width="1.3"/><circle cx="1697.5" cy="1671" r="1.4" fill="#555"/><text x="1737.6" y="1671" font-size="15.13" fill="#7a5f86" text-anchor="start" letter-spacing="0.3" paint-order="stroke" stroke="#f2efe9" stroke-opacity="0.7" stroke-width="2.5">Guinée</text><text x="1782" y="1713" font-size="15.13" fill="#7a5f86" text-anchor="start" letter-spacing="0.3" paint-order="stroke" stroke="#f2efe9" stroke-opacity="0.7" stroke-width="2.5">Côte d'Ivoire</text><circle cx="1746" cy="1725.6" r="3.6" fill="none" stroke="#555" stroke-width="1.3"/><circle cx="1746" cy="1725.6" r="1.4" fill="#555"/><text x="1711" y="1747" font-size="15.13" fill="#4f4f4f" text-anchor="start" letter-spacing="0.3" paint-order="stroke" stroke="#f2efe9" stroke-opacity="0.7" stroke-width="2.5">Monrovia</text><text x="1894" y="1640" font-size="15.13" fill="#7a5f86" text-anchor="start" letter-spacing="0.3" paint-order="stroke" stroke="#f2efe9" stroke-opacity="0.7" stroke-width="2.5">Faso</text><text x="1947.7" y="1683" font-size="15.13" fill="#7a5f86" text-anchor="start" letter-spacing="0.3" paint-order="stroke" stroke="#f2efe9" stroke-opacity="0.7" stroke-width="2.5">Bénin</text><text x="1931" y="1720" font-size="15.13" fill="#4f4f4f" text-anchor="start" letter-spacing="0.3" paint-order="stroke" stroke="#f2efe9" stroke-opacity="0.7" stroke-width="2.5">Lomé</text><circle cx="1952" cy="1728.5" r="3.6" fill="none" stroke="#555" stroke-width="1.3"/><circle cx="1952" cy="1728.5" r="1.4" fill="#555"/><text x="1997" y="1731" font-size="15.13" fill="#4f4f4f" text-anchor="start" letter-spacing="0.3" paint-order="stroke" stroke="#f2efe9" stroke-opacity="0.7" stroke-width="2.5">Lagos</text><circle cx="1990.6" cy="1723" r="2.6" fill="none" stroke="#666" stroke-width="1.2"/><text x="2035" y="1686" font-size="15.13" fill="#7a5f86" text-anchor="start" letter-spacing="0.3" paint-order="stroke" stroke="#f2efe9" stroke-opacity="0.7" stroke-width="2.5">Nigeria</text><text x="2058" y="1645" font-size="15.13" fill="#4f4f4f" text-anchor="start" letter-spacing="0.3" paint-order="stroke" stroke="#f2efe9" stroke-opacity="0.7" stroke-width="2.5">Kano</text><circle cx="2076" cy="1628" r="2.6" fill="none" stroke="#666" stroke-width="1.2"/><text x="2146.5" y="1650" font-size="15.13" fill="#4f4f4f" text-anchor="start" letter-spacing="0.3" paint-order="stroke" stroke="#f2efe9" stroke-opacity="0.7" stroke-width="2.5">N'Djaména</text><circle cx="2188" cy="1626.5" r="3.6" fill="none" stroke="#555" stroke-width="1.3"/><circle cx="2188" cy="1626.5" r="1.4" fill="#555"/><text x="2190" y="1670" font-size="13.35" fill="#4f4f4f" text-anchor="middle" letter-spacing="0" paint-order="stroke" stroke="#f2efe9" stroke-opacity="0.7" stroke-width="2.5">انجمينا</text><text x="2122" y="1714" font-size="15.13" fill="#7a5f86" text-anchor="start" letter-spacing="0.3" paint-order="stroke" stroke="#f2efe9" stroke-opacity="0.7" stroke-width="2.5">Cameroun</text><text x="2285" y="1697" font-size="15.13" fill="#7a5f86" text-anchor="middle" letter-spacing="0.3" paint-order="stroke" stroke="#f2efe9" stroke-opacity="0.7" stroke-width="2.5">Ködörösêse</text><text x="2285" y="1717" font-size="15.13" fill="#7a5f86" text-anchor="middle" letter-spacing="0.3" paint-order="stroke" stroke="#f2efe9" stroke-opacity="0.7" stroke-width="2.5">tî Bêafrîka</text><text x="2285" y="1737" font-size="15.13" fill="#7a5f86" text-anchor="middle" letter-spacing="0.3" paint-order="stroke" stroke="#f2efe9" stroke-opacity="0.7" stroke-width="2.5">- République</text><text x="2376" y="1705" font-size="15.13" fill="#7a5f86" text-anchor="start" letter-spacing="0.3" paint-order="stroke" stroke="#f2efe9" stroke-opacity="0.7" stroke-width="2.5">South Sudan</text></g></svg>
<div style="left:850px;top:156px;width:2030px;height:2px;background:#262626;"></div>
<div style="left:2878px;top:158px;width:2px;height:1580px;background:#2a2a2a;"></div>
<svg style="left:10px;top:21px;" width="10" height="34" viewBox="0 0 10 34"><rect x="0" y="0" width="4" height="4" fill="#686868"/><rect x="6" y="0" width="4" height="4" fill="#686868"/><rect x="0" y="6" width="4" height="4" fill="#686868"/><rect x="6" y="6" width="4" height="4" fill="#686868"/><rect x="0" y="12" width="4" height="4" fill="#686868"/><rect x="6" y="12" width="4" height="4" fill="#686868"/><rect x="0" y="18" width="4" height="4" fill="#686868"/><rect x="6" y="18" width="4" height="4" fill="#686868"/><rect x="0" y="24" width="4" height="4" fill="#686868"/><rect x="6" y="24" width="4" height="4" fill="#686868"/><rect x="0" y="30" width="4" height="4" fill="#686868"/><rect x="6" y="30" width="4" height="4" fill="#686868"/></svg>
<svg style="left:34.0px;top:14.0px;" width="48" height="48" viewBox="0 0 48 48"><path d="M8 2H29L40 13V46H8Z" fill="#fff" stroke="#9a9a9a" stroke-width="1.6" stroke-linejoin="round"/><path d="M29 2V13H40Z" fill="#dcdcdc" stroke="#9a9a9a" stroke-width="1.4" stroke-linejoin="round"/></svg>
<svg style="left:100.0px;top:14.0px;" width="48" height="48" viewBox="0 0 48 48"><path d="M2 8H17L20 13H37V42H2Z" fill="#e8c43c" stroke="#b8962a" stroke-width="1.4" stroke-linejoin="round"/><path d="M2 42L9 18H46L38 42Z" fill="#ffdb57" stroke="#c4a030" stroke-width="1.4" stroke-linejoin="round"/></svg>
<svg style="left:166.0px;top:14.0px;" width="48" height="48" viewBox="0 0 48 48"><rect x="4" y="3" width="40" height="42" rx="4" fill="#6d9bd1" stroke="#4a78b0" stroke-width="1.4"/><rect x="11" y="5" width="26" height="17" rx="1.5" fill="#f4f4f4" stroke="#9ab" stroke-width="1"/><path d="M14 9.5H34M14 13.5H34M14 17.5H34" stroke="#777" stroke-width="1.8"/><rect x="12" y="30" width="24" height="14" rx="1.5" fill="#e8e8e8" stroke="#9ab" stroke-width="1"/><rect x="15" y="33" width="6" height="9" fill="#23426a"/></svg>
<svg style="left:232.0px;top:14.0px;" width="48" height="48" viewBox="0 0 48 48"><path d="M5 4H35L45 14V42H5Z" fill="#fff" stroke="#9a9a9a" stroke-width="1.6" stroke-linejoin="round"/><path d="M35 4V14H45Z" fill="#dcdcdc" stroke="#9a9a9a" stroke-width="1.4" stroke-linejoin="round"/><rect x="9" y="9" width="30" height="29" fill="none" stroke="#b8c8f0" stroke-width="1.4"/><path d="M5 4H27V13H15V44H5Z" fill="#ffd43b" stroke="#c8a000" stroke-width="1.4"/><path d="M8 18H12M8 23H11M8 28H12M8 33H11M8 38H12" stroke="#a88400" stroke-width="1.3"/><rect x="26" y="26" width="22" height="22" rx="4" fill="#d9b200" stroke="#b89400" stroke-width="1"/><path d="M37.0 29.7L37.0 44.3" stroke="#fff" stroke-width="3.3" stroke-linecap="round"/><path d="M43.3 33.4L30.7 40.6" stroke="#fff" stroke-width="3.3" stroke-linecap="round"/><path d="M43.3 40.6L30.7 33.4" stroke="#fff" stroke-width="3.3" stroke-linecap="round"/><circle cx="37.0" cy="37.0" r="2.0" fill="#d9b200"/></svg>
<svg style="left:298.0px;top:14.0px;" width="48" height="48" viewBox="0 0 48 48"><path d="M3 4H34L43 13V42H3Z" fill="#fff" stroke="#9a9a9a" stroke-width="1.6" stroke-linejoin="round"/><path d="M34 4V13H43Z" fill="#dcdcdc" stroke="#9a9a9a" stroke-width="1.4" stroke-linejoin="round"/><rect x="7" y="8" width="30" height="30" fill="none" stroke="#b8c8f0" stroke-width="1.6"/><g transform="translate(20 18) rotate(-45) scale(0.95)"><rect x="-4.6" y="12" width="9.2" height="27" rx="4.4" fill="#f0d060" stroke="#333" stroke-width="1.5"/><circle cx="0" cy="35" r="1.5" fill="#444"/><path d="M-3 6H3V14H-3Z" fill="#e8e8e8" stroke="#333" stroke-width="1.3"/><path d="M-3.5 -7.75V0.5H3.5V-7.75A8.5 8.5 0 1 1 -3.5 -7.75Z" fill="#f2f2f2" stroke="#333" stroke-width="1.5" stroke-linejoin="round"/></g></svg>
<svg style="left:364.0px;top:14.0px;" width="48" height="48" viewBox="0 0 48 48"><circle cx="13" cy="13" r="9" fill="#d4692c" stroke="#b8501a" stroke-width="1"/><path d="M29 19L43 7" stroke="#6d9bd1" stroke-width="4" stroke-linecap="round"/><rect x="4" y="27" width="18" height="18" fill="#8fbc8f" stroke="#5a9a5a" stroke-width="1.2"/><text x="28" y="45" font-family="Liberation Sans, sans-serif" font-size="25" font-weight="700" fill="#e8e8e8" stroke="#555" stroke-width="0.8">a</text></svg>
<svg style="left:438px;top:21px;" width="10" height="34" viewBox="0 0 10 34"><rect x="0" y="0" width="4" height="4" fill="#686868"/><rect x="6" y="0" width="4" height="4" fill="#686868"/><rect x="0" y="6" width="4" height="4" fill="#686868"/><rect x="6" y="6" width="4" height="4" fill="#686868"/><rect x="0" y="12" width="4" height="4" fill="#686868"/><rect x="6" y="12" width="4" height="4" fill="#686868"/><rect x="0" y="18" width="4" height="4" fill="#686868"/><rect x="6" y="18" width="4" height="4" fill="#686868"/><rect x="0" y="24" width="4" height="4" fill="#686868"/><rect x="6" y="24" width="4" height="4" fill="#686868"/><rect x="0" y="30" width="4" height="4" fill="#686868"/><rect x="6" y="30" width="4" height="4" fill="#686868"/></svg>
<svg style="left:462.0px;top:14.0px;" width="48" height="48" viewBox="0 0 48 48"><path d="M14 26V10a3 3 0 0 1 6 0V5a3 3 0 0 1 6 0V7a3 3 0 0 1 6 0V11a3 3 0 0 1 6 0V30C38 40 34 46 26 46H22C17 46 14 42 11 37L5 26C3 22 8 20 11 24Z" fill="#fff" stroke="#111" stroke-width="2" stroke-linejoin="round"/><path d="M20 10V24M26 7V24M32 11V24" stroke="#111" stroke-width="1.6"/></svg>
<svg style="left:527.0px;top:14.0px;" width="48" height="48" viewBox="0 0 48 48"><rect x="8" y="6" width="26" height="26" fill="#ffe14d" stroke="#d4aa00" stroke-width="1.6"/><path transform="rotate(0 24 24)" d="M24 0L33 10H27.5V17H20.5V10H15Z" fill="#6d9bd1" stroke="#3f6aa0" stroke-width="1.2" stroke-linejoin="round"/><path transform="rotate(90 24 24)" d="M24 0L33 10H27.5V17H20.5V10H15Z" fill="#6d9bd1" stroke="#3f6aa0" stroke-width="1.2" stroke-linejoin="round"/><path transform="rotate(180 24 24)" d="M24 0L33 10H27.5V17H20.5V10H15Z" fill="#6d9bd1" stroke="#3f6aa0" stroke-width="1.2" stroke-linejoin="round"/><path transform="rotate(270 24 24)" d="M24 0L33 10H27.5V17H20.5V10H15Z" fill="#6d9bd1" stroke="#3f6aa0" stroke-width="1.2" stroke-linejoin="round"/></svg>
<div style="left:587px;top:9px;width:62px;height:60px;background:#3c3c3c;border:2px solid #4e4e4e;border-radius:7px;box-sizing:border-box;"></div>
<svg style="left:594.0px;top:14.0px;" width="48" height="48" viewBox="0 0 48 48"><path d="M18.3 29.7L4.3 43.7" stroke="#4c4c4c" stroke-width="7.4" stroke-linecap="round"/><path d="M13.3 34.7L4.3 43.7" stroke="#f2c500" stroke-width="3.8" stroke-linecap="butt"/><circle cx="16.7" cy="31.3" r="2.7" fill="#0c0c0c"/><circle cx="29" cy="19" r="14.8" fill="#d4d4d4" stroke="#f4f4f4" stroke-width="1.8"/><circle cx="29" cy="19" r="13.200000000000001" fill="none" stroke="#8a8a8a" stroke-opacity="0.55" stroke-width="1.4"/><path d="M19.8 15.7A10.4 10.4 0 0 1 29.7 8.9" fill="none" stroke="#fff" stroke-opacity="0.85" stroke-width="2.4" stroke-linecap="round"/><path d="M29 10V28M20 19H38" stroke="#3f6aa0" stroke-width="6" stroke-linecap="round"/><path d="M29 10V28M20 19H38" stroke="#6d9bd1" stroke-width="3.6" stroke-linecap="round"/></svg>
<svg style="left:659.0px;top:14.0px;" width="48" height="48" viewBox="0 0 48 48"><path d="M18.3 29.7L4.3 43.7" stroke="#4c4c4c" stroke-width="7.4" stroke-linecap="round"/><path d="M13.3 34.7L4.3 43.7" stroke="#f2c500" stroke-width="3.8" stroke-linecap="butt"/><circle cx="16.7" cy="31.3" r="2.7" fill="#0c0c0c"/><circle cx="29" cy="19" r="14.8" fill="#d4d4d4" stroke="#f4f4f4" stroke-width="1.8"/><circle cx="29" cy="19" r="13.200000000000001" fill="none" stroke="#8a8a8a" stroke-opacity="0.55" stroke-width="1.4"/><path d="M19.8 15.7A10.4 10.4 0 0 1 29.7 8.9" fill="none" stroke="#fff" stroke-opacity="0.85" stroke-width="2.4" stroke-linecap="round"/><path d="M20 19H38" stroke="#3f6aa0" stroke-width="6" stroke-linecap="round"/><path d="M20 19H38" stroke="#6d9bd1" stroke-width="3.6" stroke-linecap="round"/></svg>
<svg style="left:727.0px;top:14.0px;" width="48" height="48" viewBox="0 0 48 48"><path d="M19.4 27.6L5.4 41.6" stroke="#4c4c4c" stroke-width="7.4" stroke-linecap="round"/><path d="M14.4 32.6L5.4 41.6" stroke="#f2c500" stroke-width="3.8" stroke-linecap="butt"/><circle cx="17.8" cy="29.2" r="2.7" fill="#0c0c0c"/><circle cx="28" cy="19" r="12" fill="#cfcfcf" stroke="#f4f4f4" stroke-width="1.8"/><circle cx="28" cy="19" r="10.4" fill="none" stroke="#8a8a8a" stroke-opacity="0.55" stroke-width="1.4"/><path d="M20.6 16.4A8.4 8.4 0 0 1 28.6 10.8" fill="none" stroke="#fff" stroke-opacity="0.85" stroke-width="2.4" stroke-linecap="round"/><path transform="translate(13 4) rotate(-45)" d="M0 -9L9 2H4V10H-4V2H-9Z" fill="#6d9bd1" stroke="#3f6aa0" stroke-width="1.2" stroke-linejoin="round"/><path transform="translate(43 4) rotate(45)" d="M0 -9L9 2H4V10H-4V2H-9Z" fill="#6d9bd1" stroke="#3f6aa0" stroke-width="1.2" stroke-linejoin="round"/><path transform="translate(43 34) rotate(135)" d="M0 -9L9 2H4V10H-4V2H-9Z" fill="#6d9bd1" stroke="#3f6aa0" stroke-width="1.2" stroke-linejoin="round"/></svg>
<svg style="left:793.0px;top:14.0px;" width="48" height="48" viewBox="0 0 48 48"><rect x="6" y="6" width="22" height="22" fill="#ffe14d" stroke="#d4aa00" stroke-width="1.6"/><path d="M20.6 27.4L6.6 41.4" stroke="#4c4c4c" stroke-width="7.4" stroke-linecap="round"/><path d="M15.6 32.4L6.6 41.4" stroke="#f2c500" stroke-width="3.8" stroke-linecap="butt"/><circle cx="19.0" cy="29.0" r="2.7" fill="#0c0c0c"/><circle cx="31" cy="17" r="14.5" fill="#e9e6d2" stroke="#f4f4f4" stroke-width="1.8"/><circle cx="31" cy="17" r="12.9" fill="none" stroke="#8a8a8a" stroke-opacity="0.55" stroke-width="1.4"/><path d="M22.0 13.8A10.1 10.1 0 0 1 31.7 7.1" fill="none" stroke="#fff" stroke-opacity="0.85" stroke-width="2.4" stroke-linecap="round"/><path d="M31 2.5A14.5 14.5 0 0 1 31 31.5Z" fill="#c9c9c9" opacity="0.9"/></svg>
<svg style="left:858.0px;top:14.0px;" width="48" height="48" viewBox="0 0 48 48"><rect x="6" y="8" width="22" height="20" fill="#f0f0f0" stroke="#b0b0b0" stroke-width="1.6"/><path d="M20.6 27.4L6.6 41.4" stroke="#4c4c4c" stroke-width="7.4" stroke-linecap="round"/><path d="M15.6 32.4L6.6 41.4" stroke="#f2c500" stroke-width="3.8" stroke-linecap="butt"/><circle cx="19.0" cy="29.0" r="2.7" fill="#0c0c0c"/><circle cx="31" cy="17" r="14.5" fill="#ececec" stroke="#f4f4f4" stroke-width="1.8"/><circle cx="31" cy="17" r="12.9" fill="none" stroke="#8a8a8a" stroke-opacity="0.55" stroke-width="1.4"/><path d="M22.0 13.8A10.1 10.1 0 0 1 31.7 7.1" fill="none" stroke="#fff" stroke-opacity="0.85" stroke-width="2.4" stroke-linecap="round"/><path d="M31 2.5A14.5 14.5 0 0 1 31 31.5Z" fill="#c4c4c4" opacity="0.9"/></svg>
<svg style="left:923.0px;top:14.0px;opacity:0.9;" width="48" height="48" viewBox="0 0 48 48"><rect x="6" y="8" width="22" height="20" fill="#5a5a5a"/><path d="M20.6 27.4L6.6 41.4" stroke="#3c3c3c" stroke-width="7.4" stroke-linecap="round"/><path d="M15.6 32.4L6.6 41.4" stroke="#5c5a48" stroke-width="3.8" stroke-linecap="butt"/><circle cx="19.0" cy="29.0" r="2.7" fill="#0c0c0c"/><circle cx="31" cy="17" r="14.5" fill="#5e5e5e" stroke="#525252" stroke-width="1.8"/><circle cx="31" cy="17" r="12.9" fill="none" stroke="#4a4a4a" stroke-opacity="0.55" stroke-width="1.4"/><path d="M22.0 13.8A10.1 10.1 0 0 1 31.7 7.1" fill="none" stroke="#fff" stroke-opacity="0.85" stroke-width="2.4" stroke-linecap="round"/><text x="31" y="24" text-anchor="middle" font-family="Liberation Sans, sans-serif" font-size="17" font-weight="700" fill="#2e2e2e">1:1</text></svg>
<svg style="left:989.0px;top:14.0px;" width="48" height="48" viewBox="0 0 48 48"><path d="M18.9 26.1L4.9 40.1" stroke="#4c4c4c" stroke-width="7.4" stroke-linecap="round"/><path d="M13.9 31.1L4.9 40.1" stroke="#f2c500" stroke-width="3.8" stroke-linecap="butt"/><circle cx="17.3" cy="27.7" r="2.7" fill="#0c0c0c"/><circle cx="29" cy="16" r="14" fill="#d4d4d4" stroke="#f4f4f4" stroke-width="1.8"/><circle cx="29" cy="16" r="12.4" fill="none" stroke="#8a8a8a" stroke-opacity="0.55" stroke-width="1.4"/><path d="M20.3 12.9A9.8 9.8 0 0 1 29.7 6.5" fill="none" stroke="#fff" stroke-opacity="0.85" stroke-width="2.4" stroke-linecap="round"/><rect x="27" y="25" width="20" height="20" rx="3" fill="#6d9bd1" stroke="#3f6aa0" stroke-width="1"/><path d="M41 29L32 35L41 41" fill="none" stroke="#fff" stroke-width="3.4"/></svg>
<svg style="left:1055.0px;top:14.0px;opacity:0.9;" width="48" height="48" viewBox="0 0 48 48"><path d="M18.9 26.1L4.9 40.1" stroke="#3c3c3c" stroke-width="7.4" stroke-linecap="round"/><path d="M13.9 31.1L4.9 40.1" stroke="#5c5a48" stroke-width="3.8" stroke-linecap="butt"/><circle cx="17.3" cy="27.7" r="2.7" fill="#0c0c0c"/><circle cx="29" cy="16" r="14" fill="#585858" stroke="#505050" stroke-width="1.8"/><circle cx="29" cy="16" r="12.4" fill="none" stroke="#4a4a4a" stroke-opacity="0.55" stroke-width="1.4"/><path d="M20.3 12.9A9.8 9.8 0 0 1 29.7 6.5" fill="none" stroke="#fff" stroke-opacity="0.85" stroke-width="2.4" stroke-linecap="round"/><rect x="27" y="25" width="20" height="20" rx="3" fill="#555"/><path d="M33 29L42 35L33 41" fill="none" stroke="#777" stroke-width="3.4"/></svg>
<svg style="left:1121.0px;top:14.0px;" width="48" height="48" viewBox="0 0 48 48"><path d="M4 4H38V36C38 40 34 42 30 42H10C6 42 4 40 4 36Z" fill="#d0d0d0" stroke="#a8a8a8" stroke-width="1.4"/><path d="M30 42C34 42 34 36 38 36" fill="none" stroke="#a8a8a8" stroke-width="1.4"/><rect x="26" y="26" width="22" height="22" rx="4" fill="#d9b200" stroke="#b89400" stroke-width="1"/><path d="M37.0 29.7L37.0 44.3" stroke="#fff" stroke-width="3.3" stroke-linecap="round"/><path d="M43.3 33.4L30.7 40.6" stroke="#fff" stroke-width="3.3" stroke-linecap="round"/><path d="M43.3 40.6L30.7 33.4" stroke="#fff" stroke-width="3.3" stroke-linecap="round"/><circle cx="37.0" cy="37.0" r="2.0" fill="#d9b200"/></svg>
<svg style="left:1187.0px;top:14.0px;" width="48" height="48" viewBox="0 0 48 48"><path d="M2 30L12 10L40 6L46 24L30 40Z" fill="#c8c8c8" stroke="#9a9a9a" stroke-width="1.2"/><path d="M7 20L43 15M4 27L45 21M18 9L12 36M28 8L24 38M36 7L36 33" stroke="#eee" stroke-width="1.2" fill="none"/><rect x="26" y="26" width="22" height="22" rx="4" fill="#d9b200" stroke="#b89400" stroke-width="1"/><path d="M37.0 29.7L37.0 44.3" stroke="#fff" stroke-width="3.3" stroke-linecap="round"/><path d="M43.3 33.4L30.7 40.6" stroke="#fff" stroke-width="3.3" stroke-linecap="round"/><path d="M43.3 40.6L30.7 33.4" stroke="#fff" stroke-width="3.3" stroke-linecap="round"/><circle cx="37.0" cy="37.0" r="2.0" fill="#d9b200"/></svg>
<svg style="left:1253.0px;top:14.0px;" width="48" height="48" viewBox="0 0 48 48"><path d="M8 2H30V44L24 36H8Z" fill="#c8c8c8" stroke="#a0a0a0" stroke-width="1.2"/><path d="M12 2H26V34L19 27L12 34Z" fill="#6d9bd1" stroke="#3f6aa0" stroke-width="1.2"/><rect x="26" y="26" width="22" height="22" rx="4" fill="#d9b200" stroke="#b89400" stroke-width="1"/><path d="M37.0 29.7L37.0 44.3" stroke="#fff" stroke-width="3.3" stroke-linecap="round"/><path d="M43.3 33.4L30.7 40.6" stroke="#fff" stroke-width="3.3" stroke-linecap="round"/><path d="M43.3 40.6L30.7 33.4" stroke="#fff" stroke-width="3.3" stroke-linecap="round"/><circle cx="37.0" cy="37.0" r="2.0" fill="#d9b200"/></svg>
<svg style="left:1319.0px;top:14.0px;" width="48" height="48" viewBox="0 0 48 48"><path d="M5 4H43V38C43 42 40 44 36 44H5Z" fill="#d4d4d4" stroke="#a0a0a0" stroke-width="1.2"/><path d="M5 4V44" stroke="#888" stroke-width="3"/><path d="M24 4H36V26L30 20L24 26Z" fill="#6d9bd1" stroke="#3f6aa0" stroke-width="1.2"/></svg>
<svg style="left:1385.0px;top:14.0px;" width="48" height="48" viewBox="0 0 48 48"><circle cx="24" cy="24" r="21.5" fill="#f0f0f0" stroke="#c0c0c0" stroke-width="1.4"/><circle cx="24.0" cy="6.5" r="1.4" fill="#4a78b0"/><circle cx="32.8" cy="8.8" r="1.4" fill="#4a78b0"/><circle cx="39.2" cy="15.2" r="1.4" fill="#4a78b0"/><circle cx="41.5" cy="24.0" r="1.4" fill="#4a78b0"/><circle cx="39.2" cy="32.8" r="1.4" fill="#4a78b0"/><circle cx="32.8" cy="39.2" r="1.4" fill="#4a78b0"/><circle cx="24.0" cy="41.5" r="1.4" fill="#4a78b0"/><circle cx="15.3" cy="39.2" r="1.4" fill="#4a78b0"/><circle cx="8.8" cy="32.8" r="1.4" fill="#4a78b0"/><circle cx="6.5" cy="24.0" r="1.4" fill="#4a78b0"/><circle cx="8.8" cy="15.2" r="1.4" fill="#4a78b0"/><circle cx="15.2" cy="8.8" r="1.4" fill="#4a78b0"/><path d="M24 10V25L32 31" fill="none" stroke="#6a6a6a" stroke-width="2.6" stroke-linecap="round"/></svg>
<svg style="left:1451.0px;top:14.0px;" width="48" height="48" viewBox="0 0 48 48"><path d="M6 22A18 18 0 0 1 38 11L43 6V24H25L31 18A9 9 0 0 0 15 22Z" fill="#6d9bd1" stroke="#3f6aa0" stroke-width="1.4" stroke-linejoin="round"/><path d="M42 26A18 18 0 0 1 10 37L5 42V24H23L17 30A9 9 0 0 0 33 26Z" fill="#6d9bd1" stroke="#3f6aa0" stroke-width="1.4" stroke-linejoin="round"/></svg>
<svg style="left:1525px;top:21px;" width="10" height="34" viewBox="0 0 10 34"><rect x="0" y="0" width="4" height="4" fill="#686868"/><rect x="6" y="0" width="4" height="4" fill="#686868"/><rect x="0" y="6" width="4" height="4" fill="#686868"/><rect x="6" y="6" width="4" height="4" fill="#686868"/><rect x="0" y="12" width="4" height="4" fill="#686868"/><rect x="6" y="12" width="4" height="4" fill="#686868"/><rect x="0" y="18" width="4" height="4" fill="#686868"/><rect x="6" y="18" width="4" height="4" fill="#686868"/><rect x="0" y="24" width="4" height="4" fill="#686868"/><rect x="6" y="24" width="4" height="4" fill="#686868"/><rect x="0" y="30" width="4" height="4" fill="#686868"/><rect x="6" y="30" width="4" height="4" fill="#686868"/></svg>
<svg style="left:1550.0px;top:14.0px;" width="48" height="48" viewBox="0 0 48 48"><path d="M4 6L10 3L30 4L40 2L44 8L36 22L40 34L30 44L10 40L2 42L6 28L3 16Z" fill="#e8e8e8" stroke="#ccc" stroke-width="1" stroke-dasharray="3 2"/><rect x="5" y="4" width="26" height="26" fill="#ffe14d" stroke="#d4aa00" stroke-width="1.6"/><path transform="rotate(-17 22 14)" d="M22.0 14.0L22.0 41.3L28.3 35.5L33.0 45.5L37.8 43.4L33.0 33.4L41.4 33.4Z" fill="#fff" stroke="#111" stroke-width="1.6" stroke-linejoin="round"/></svg>
<svg style="left:1610.5px;top:33.75px;" width="15" height="8.5" viewBox="0 0 15 8.5"><path d="M0 0H15L7.5 8.5Z" fill="#b0b0b0"/></svg>
<svg style="left:1639.0px;top:14.0px;" width="48" height="48" viewBox="0 0 48 48"><rect x="4" y="4" width="40" height="11" fill="#ffe14d" stroke="#d4aa00" stroke-width="1.6"/><rect x="4" y="18.5" width="40" height="11" fill="#ffe14d" stroke="#d4aa00" stroke-width="1.6"/><rect x="4" y="33" width="40" height="11" fill="#ffe14d" stroke="#d4aa00" stroke-width="1.6"/></svg>
<svg style="left:1700.5px;top:33.75px;" width="15" height="8.5" viewBox="0 0 15 8.5"><path d="M0 0H15L7.5 8.5Z" fill="#b0b0b0"/></svg>
<svg style="left:1731.0px;top:14.0px;" width="48" height="48" viewBox="0 0 48 48"><rect x="3" y="4" width="24" height="24" fill="#ffe14d" stroke="#d4aa00" stroke-width="1.6"/><rect x="13" y="14" width="24" height="24" fill="#ffe14d" stroke="#d4aa00" stroke-width="1.6"/><rect x="25" y="26" width="21" height="21" rx="4" fill="#cc1e2a"/><circle cx="35.5" cy="36.5" r="6.6" fill="none" stroke="#f4e8e8" stroke-width="3"/><path d="M31 41L40 32" stroke="#f4e8e8" stroke-width="3"/></svg>
<svg style="left:1790.5px;top:33.75px;" width="15" height="8.5" viewBox="0 0 15 8.5"><path d="M0 0H15L7.5 8.5Z" fill="#b0b0b0"/></svg>
<svg style="left:1819.0px;top:14.0px;" width="48" height="48" viewBox="0 0 48 48"><rect x="4" y="3" width="28" height="28" fill="#ffe14d" stroke="#d4aa00" stroke-width="1.6"/><path d="M38 46C33 38 32 35 32 32.5A6 6 0 0 1 44 32.5C44 35 43 38 38 46Z" fill="#323232" stroke="#6d93b8" stroke-width="2.2"/><circle cx="38" cy="32.5" r="1.6" fill="#6d93b8"/></svg>
<svg style="left:1893px;top:21px;" width="10" height="34" viewBox="0 0 10 34"><rect x="0" y="0" width="4" height="4" fill="#686868"/><rect x="6" y="0" width="4" height="4" fill="#686868"/><rect x="0" y="6" width="4" height="4" fill="#686868"/><rect x="6" y="6" width="4" height="4" fill="#686868"/><rect x="0" y="12" width="4" height="4" fill="#686868"/><rect x="6" y="12" width="4" height="4" fill="#686868"/><rect x="0" y="18" width="4" height="4" fill="#686868"/><rect x="6" y="18" width="4" height="4" fill="#686868"/><rect x="0" y="24" width="4" height="4" fill="#686868"/><rect x="6" y="24" width="4" height="4" fill="#686868"/><rect x="0" y="30" width="4" height="4" fill="#686868"/><rect x="6" y="30" width="4" height="4" fill="#686868"/></svg>
<svg style="left:1916.0px;top:14.0px;" width="48" height="48" viewBox="0 0 48 48"><circle cx="19" cy="19" r="16.5" fill="#6d9bd1" stroke="#dfe9f5" stroke-width="1.6"/><text x="19" y="29" text-anchor="middle" font-family="Liberation Serif, serif" font-style="italic" font-weight="700" font-size="29" fill="#fff">i</text><path transform="rotate(-17 25 18)" d="M25.0 18.0L25.0 45.3L31.3 39.5L36.0 49.5L40.8 47.4L36.0 37.4L44.4 37.4Z" fill="#fff" stroke="#111" stroke-width="1.6" stroke-linejoin="round"/></svg>
<svg style="left:1984.0px;top:14.0px;" width="48" height="48" viewBox="0 0 48 48"><path d="M6 2V44M42 2V44" stroke="#b0b0b0" stroke-width="2.6"/><path d="M2 44H46" stroke="#b0b0b0" stroke-width="2.6"/><path d="M6 10H42" stroke="#888" stroke-width="1.4"/><circle cx="18" cy="10" r="4.2" fill="#e03030" stroke="#555" stroke-width="0.8"/><circle cx="36" cy="10" r="4.2" fill="#e03030" stroke="#555" stroke-width="0.8"/><path d="M6 22H42" stroke="#888" stroke-width="1.4"/><circle cx="12" cy="22" r="4.2" fill="#8fd08f" stroke="#555" stroke-width="0.8"/><circle cx="22" cy="22" r="4.2" fill="#8fd08f" stroke="#555" stroke-width="0.8"/><circle cx="32" cy="22" r="4.2" fill="#8fd08f" stroke="#555" stroke-width="0.8"/><path d="M6 34H42" stroke="#888" stroke-width="1.4"/><circle cx="12" cy="34" r="4.2" fill="#8fc4e8" stroke="#555" stroke-width="0.8"/><circle cx="22" cy="34" r="4.2" fill="#8fc4e8" stroke="#555" stroke-width="0.8"/><circle cx="32" cy="34" r="4.2" fill="#8fc4e8" stroke="#555" stroke-width="0.8"/></svg>
<svg style="left:2050.0px;top:14.0px;" width="48" height="48" viewBox="0 0 48 48"><path d="M20.3 3.3L27.7 3.3L27.6 9.4L31.7 11.1L36.0 6.8L41.2 12.0L36.9 16.3L38.6 20.4L44.7 20.3L44.7 27.7L38.6 27.6L36.9 31.7L41.2 36.0L36.0 41.2L31.7 36.9L27.6 38.6L27.7 44.7L20.3 44.7L20.4 38.6L16.3 36.9L12.0 41.2L6.8 36.0L11.1 31.7L9.4 27.6L3.3 27.7L3.3 20.3L9.4 20.4L11.1 16.3L6.8 12.0L12.0 6.8L16.3 11.1L20.4 9.4Z" fill="#6d9bd1" stroke="#3f6aa0" stroke-width="1.2" stroke-linejoin="round"/><circle cx="24" cy="24" r="6.5" fill="#323232" stroke="#3f6aa0" stroke-width="1.2"/></svg>
<svg style="left:2115.0px;top:14.0px;" width="48" height="48" viewBox="0 0 48 48"><path d="M8 3H40V12H36L35 8H18L29 23L17 40H36L38 35H42L40 45H8V41L21 23L8 7Z" fill="#b400b4" stroke="#800080" stroke-width="1" stroke-linejoin="round"/></svg>
<svg style="left:2182.0px;top:14.0px;" width="48" height="48" viewBox="0 0 48 48"><rect x="4" y="3" width="40" height="42" fill="#dfe9f5" stroke="#6d9bd1" stroke-width="1.6"/><rect x="4" y="3" width="40" height="7" fill="#6d9bd1"/><path d="M8 14H16M20 14H40" stroke="#4a78b0" stroke-width="2.6"/><path d="M8 21H16M20 21H40" stroke="#4a78b0" stroke-width="2.6"/><path d="M8 28H16M20 28H40" stroke="#4a78b0" stroke-width="2.6"/><path d="M8 35H16M20 35H40" stroke="#4a78b0" stroke-width="2.6"/><path d="M18 10V45" stroke="#6d9bd1" stroke-width="1.2"/></svg>
<svg style="left:2241.5px;top:33.75px;" width="15" height="8.5" viewBox="0 0 15 8.5"><path d="M0 0H15L7.5 8.5Z" fill="#b0b0b0"/></svg>
<svg style="left:2272.0px;top:14.0px;" width="48" height="48" viewBox="0 0 48 48"><path d="M4 8V16M44 8V16M4 12H44" stroke="#4a78b0" stroke-width="2.2"/><rect x="3" y="26" width="42" height="15" fill="#c8c8c8" stroke="#909090" stroke-width="1.4"/><path d="M8 28V37" stroke="#555" stroke-width="1.4"/><path d="M12 28V34" stroke="#555" stroke-width="1.4"/><path d="M16 28V37" stroke="#555" stroke-width="1.4"/><path d="M20 28V34" stroke="#555" stroke-width="1.4"/><path d="M24 28V37" stroke="#555" stroke-width="1.4"/><path d="M28 28V34" stroke="#555" stroke-width="1.4"/><path d="M32 28V37" stroke="#555" stroke-width="1.4"/><path d="M36 28V34" stroke="#555" stroke-width="1.4"/><path d="M40 28V37" stroke="#555" stroke-width="1.4"/></svg>
<svg style="left:2332.5px;top:33.75px;" width="15" height="8.5" viewBox="0 0 15 8.5"><path d="M0 0H15L7.5 8.5Z" fill="#b0b0b0"/></svg>
<svg style="left:2362.0px;top:14.0px;" width="48" height="48" viewBox="0 0 48 48"><path d="M8 3H40A6 6 0 0 1 46 9V23A6 6 0 0 1 40 29H22C20 36 15 40 9 42C13 38 14 34 14 29H8A6 6 0 0 1 2 23V9A6 6 0 0 1 8 3Z" fill="#ede28c" stroke="#c8b040" stroke-width="1.8" stroke-linejoin="round"/><path d="M7 12A5 5 0 0 1 12 7H30" fill="none" stroke="#fff" stroke-opacity="0.7" stroke-width="2.4" stroke-linecap="round"/><circle cx="9" cy="42" r="4.5" fill="#7fbf7f" stroke="#4a8a4a" stroke-width="1"/></svg>
<svg style="left:2427.0px;top:14.0px;" width="48" height="48" viewBox="0 0 48 48"><path d="M17.8 2.3L24.2 2.3L24.3 6.9L28.0 8.4L31.3 5.2L35.8 9.7L32.6 13.0L34.1 16.7L38.7 16.8L38.7 23.2L34.1 23.3L32.6 27.0L35.8 30.3L31.3 34.8L28.0 31.6L24.3 33.1L24.2 37.7L17.8 37.7L17.7 33.1L14.0 31.6L10.7 34.8L6.2 30.3L9.4 27.0L7.9 23.3L3.3 23.2L3.3 16.8L7.9 16.7L9.4 13.0L6.2 9.7L10.7 5.2L14.0 8.4L17.7 6.9Z" fill="#6a6a6a" stroke="#555" stroke-width="1.2" stroke-linejoin="round"/><circle cx="21" cy="20" r="8" fill="#5a5a5a"/><path d="M18 15L27 20L18 25Z" fill="#7a7a7a"/><path d="M27 22L27 42L32 37.5L36 46L40 44L36 35.5L43 35.5Z" fill="#6a6a6a" stroke="#4a4a4a" stroke-width="1.2"/></svg>
<svg style="left:2488.5px;top:33.75px;" width="15" height="8.5" viewBox="0 0 15 8.5"><path d="M0 0H15L7.5 8.5Z" fill="#b0b0b0"/></svg>
<svg style="left:10px;top:99px;" width="10" height="34" viewBox="0 0 10 34"><rect x="0" y="0" width="4" height="4" fill="#686868"/><rect x="6" y="0" width="4" height="4" fill="#686868"/><rect x="0" y="6" width="4" height="4" fill="#686868"/><rect x="6" y="6" width="4" height="4" fill="#686868"/><rect x="0" y="12" width="4" height="4" fill="#686868"/><rect x="6" y="12" width="4" height="4" fill="#686868"/><rect x="0" y="18" width="4" height="4" fill="#686868"/><rect x="6" y="18" width="4" height="4" fill="#686868"/><rect x="0" y="24" width="4" height="4" fill="#686868"/><rect x="6" y="24" width="4" height="4" fill="#686868"/><rect x="0" y="30" width="4" height="4" fill="#686868"/><rect x="6" y="30" width="4" height="4" fill="#686868"/></svg>
<svg style="left:34.0px;top:92.0px;" width="48" height="48" viewBox="0 0 48 48"><path d="M3 20L22 15L28 38L9 44Z" fill="#e07a3a" stroke="#b85a20" stroke-width="1"/><path d="M9 10H32V37H9Z" fill="#f5c83c" stroke="#c8a000" stroke-width="1"/><path d="M19 3L45 9L39 35L13 29Z" transform="rotate(-4 30 18)" fill="#6d9bd1" stroke="#3f6aa0" stroke-width="1.2"/><rect x="30" y="30" width="18" height="18" rx="4" fill="#5a9a5a" stroke="#447a44" stroke-width="1"/><path d="M39.0 33.6V44.4M33.6 39.0H44.4" stroke="#fff" stroke-width="3.6" stroke-linecap="round"/></svg>
<svg style="left:101.0px;top:92.0px;" width="48" height="48" viewBox="0 0 48 48"><path d="M1 16L24 6L47 16V36L24 47L1 36Z" fill="#e0b400" stroke="#111" stroke-width="1.4" stroke-linejoin="round"/><path d="M1 16L24 6L47 16L24 27Z" fill="#8a6c00"/><circle cx="24" cy="16" r="15.5" fill="#9fc0e6" stroke="#5b87bd" stroke-width="1.2"/><path d="M14.7 8.2l5.4 -3.9l3.9 3.1l-1.6 5.4l-4.6 2.3l1.6 7.8l-3.9 -4.6Z" fill="#2d5488"/><path d="M24.8 7.5l6.2 -1.6l4.6 7.0l-3.1 1.6l-0.8 8.5l-4.6 3.1l-1.6 -9.3l-2.3 -3.1Z" fill="#2d5488"/><path d="M1 16L24 27V47L1 36Z" fill="#e0b400" stroke="#111" stroke-width="1.4" stroke-linejoin="round"/><path d="M24 27L47 16V36L24 47Z" fill="#fff27a" stroke="#111" stroke-width="1.4" stroke-linejoin="round"/><rect x="30" y="30" width="18" height="18" rx="4" fill="#d9b200" stroke="#b89400" stroke-width="1"/><path d="M39.0 33.1L39.0 44.9" stroke="#fff" stroke-width="2.7" stroke-linecap="round"/><path d="M44.1 36.0L33.9 42.0" stroke="#fff" stroke-width="2.7" stroke-linecap="round"/><path d="M44.1 42.0L33.9 36.0" stroke="#fff" stroke-width="2.7" stroke-linecap="round"/><circle cx="39.0" cy="39.0" r="1.6" fill="#d9b200"/></svg>
<svg style="left:166.0px;top:92.0px;" width="48" height="48" viewBox="0 0 48 48"><path d="M5 6L18 36L32 6H44" fill="none" stroke="#23426a" stroke-width="2.2" stroke-linejoin="round"/><circle cx="5" cy="6" r="3" fill="#fff" stroke="#23426a" stroke-width="1.2"/><circle cx="18" cy="36" r="3" fill="#fff" stroke="#23426a" stroke-width="1.2"/><circle cx="32" cy="6" r="3" fill="#fff" stroke="#23426a" stroke-width="1.2"/><circle cx="44" cy="6" r="3" fill="#fff" stroke="#23426a" stroke-width="1.2"/><rect x="30" y="30" width="18" height="18" rx="4" fill="#d9b200" stroke="#b89400" stroke-width="1"/><path d="M39.0 33.1L39.0 44.9" stroke="#fff" stroke-width="2.7" stroke-linecap="round"/><path d="M44.1 36.0L33.9 42.0" stroke="#fff" stroke-width="2.7" stroke-linecap="round"/><path d="M44.1 42.0L33.9 36.0" stroke="#fff" stroke-width="2.7" stroke-linecap="round"/><circle cx="39.0" cy="39.0" r="1.6" fill="#d9b200"/></svg>
<svg style="left:232.0px;top:92.0px;" width="48" height="48" viewBox="0 0 48 48"><path d="M3 46C8 30 18 12 44 2C46 14 40 28 14 38C10 40 6 44 3 46Z" fill="#6d9bd1" stroke="#23426a" stroke-width="1.2" stroke-linejoin="round"/><path d="M12.0 36.0L22.0 34.0" stroke="#dce8f5" stroke-width="1"/><path d="M15.0 32.8L24.6 30.4" stroke="#dce8f5" stroke-width="1"/><path d="M18.0 29.6L27.2 26.8" stroke="#dce8f5" stroke-width="1"/><path d="M21.0 26.4L29.8 23.2" stroke="#dce8f5" stroke-width="1"/><path d="M24.0 23.2L32.4 19.6" stroke="#dce8f5" stroke-width="1"/><path d="M27.0 20.0L35.0 16.0" stroke="#dce8f5" stroke-width="1"/><path d="M30.0 16.8L37.6 12.4" stroke="#dce8f5" stroke-width="1"/><path d="M33.0 13.6L40.2 8.8" stroke="#dce8f5" stroke-width="1"/><path d="M36.0 10.4L42.8 5.2" stroke="#dce8f5" stroke-width="1"/><path d="M3 46C10 32 24 14 44 2" fill="none" stroke="#23426a" stroke-width="1.4"/><rect x="30" y="30" width="18" height="18" rx="4" fill="#d9b200" stroke="#b89400" stroke-width="1"/><path d="M39.0 33.1L39.0 44.9" stroke="#fff" stroke-width="2.7" stroke-linecap="round"/><path d="M44.1 36.0L33.9 42.0" stroke="#fff" stroke-width="2.7" stroke-linecap="round"/><path d="M44.1 42.0L33.9 36.0" stroke="#fff" stroke-width="2.7" stroke-linecap="round"/><circle cx="39.0" cy="39.0" r="1.6" fill="#d9b200"/></svg>
<svg style="left:300.0px;top:92.0px;" width="48" height="48" viewBox="0 0 48 48"><path d="M13 4V14M13 32V42" stroke="#23426a" stroke-width="2"/><path d="M20 4V14M20 32V42" stroke="#23426a" stroke-width="2"/><path d="M27 4V14M27 32V42" stroke="#23426a" stroke-width="2"/><path d="M34 4V14M34 32V42" stroke="#23426a" stroke-width="2"/><rect x="6" y="13" width="36" height="20" rx="2" fill="#6d9bd1" stroke="#23426a" stroke-width="1.8"/><rect x="30" y="30" width="18" height="18" rx="4" fill="#d9b200" stroke="#b89400" stroke-width="1"/><path d="M39.0 33.1L39.0 44.9" stroke="#fff" stroke-width="2.7" stroke-linecap="round"/><path d="M44.1 36.0L33.9 42.0" stroke="#fff" stroke-width="2.7" stroke-linecap="round"/><path d="M44.1 42.0L33.9 36.0" stroke="#fff" stroke-width="2.7" stroke-linecap="round"/><circle cx="39.0" cy="39.0" r="1.6" fill="#d9b200"/></svg>
<svg style="left:365.0px;top:92.0px;" width="48" height="48" viewBox="0 0 48 48"><rect x="3" y="3" width="42" height="42" fill="#6d9bd1" stroke="#23426a" stroke-width="2"/><path d="M3 26H45M25 3V45M3 36H25M14 26V45" stroke="#23426a" stroke-width="2"/><path d="M3 3L25 26M25 3L3 26M25 26L45 3" stroke="#23426a" stroke-width="1.6"/><path d="M27 5H43L27 24Z" fill="#dce8f5" opacity="0.55"/><path d="M5 5H23L14 14Z" fill="#dce8f5" opacity="0.45"/><rect x="30" y="30" width="18" height="18" rx="4" fill="#d9b200" stroke="#b89400" stroke-width="1"/><path d="M39.0 33.1L39.0 44.9" stroke="#fff" stroke-width="2.7" stroke-linecap="round"/><path d="M44.1 36.0L33.9 42.0" stroke="#fff" stroke-width="2.7" stroke-linecap="round"/><path d="M44.1 42.0L33.9 36.0" stroke="#fff" stroke-width="2.7" stroke-linecap="round"/><circle cx="39.0" cy="39.0" r="1.6" fill="#d9b200"/></svg>
<div style="left:427px;top:97px;width:1.5px;height:38px;background:#292929;"></div>
<div style="left:428.5px;top:97px;width:1px;height:38px;background:#3a3a3a;"></div>
<svg style="left:444.0px;top:92.0px;" width="48" height="48" viewBox="0 0 48 48"><rect x="2" y="4" width="42" height="41" rx="3" fill="#bccde4" stroke="#6d9bd1" stroke-width="1.6"/><path d="M3 24L30 5H3Z" fill="#f0f4fa" opacity="0.55"/><path d="M4 5L15 37L30 5H43" fill="none" stroke="#23426a" stroke-width="2.2" stroke-linejoin="round"/><circle cx="4" cy="5" r="3.2" fill="#fff" stroke="#23426a" stroke-width="1.4"/><circle cx="15" cy="37" r="3.2" fill="#fff" stroke="#23426a" stroke-width="1.4"/><circle cx="30" cy="5" r="3.2" fill="#fff" stroke="#23426a" stroke-width="1.4"/><circle cx="43" cy="5" r="3.2" fill="#fff" stroke="#23426a" stroke-width="1.4"/><rect x="30" y="30" width="18" height="18" rx="4" fill="#d9b200" stroke="#b89400" stroke-width="1"/><path d="M39.0 33.1L39.0 44.9" stroke="#fff" stroke-width="2.7" stroke-linecap="round"/><path d="M44.1 36.0L33.9 42.0" stroke="#fff" stroke-width="2.7" stroke-linecap="round"/><path d="M44.1 42.0L33.9 36.0" stroke="#fff" stroke-width="2.7" stroke-linecap="round"/><circle cx="39.0" cy="39.0" r="1.6" fill="#d9b200"/></svg>
<div style="left:507px;top:97px;width:1.5px;height:38px;background:#292929;"></div>
<div style="left:508.5px;top:97px;width:1px;height:38px;background:#3a3a3a;"></div>
<svg style="left:532px;top:99px;" width="10" height="34" viewBox="0 0 10 34"><rect x="0" y="0" width="4" height="4" fill="#686868"/><rect x="6" y="0" width="4" height="4" fill="#686868"/><rect x="0" y="6" width="4" height="4" fill="#686868"/><rect x="6" y="6" width="4" height="4" fill="#686868"/><rect x="0" y="12" width="4" height="4" fill="#686868"/><rect x="6" y="12" width="4" height="4" fill="#686868"/><rect x="0" y="18" width="4" height="4" fill="#686868"/><rect x="6" y="18" width="4" height="4" fill="#686868"/><rect x="0" y="24" width="4" height="4" fill="#686868"/><rect x="6" y="24" width="4" height="4" fill="#686868"/><rect x="0" y="30" width="4" height="4" fill="#686868"/><rect x="6" y="30" width="4" height="4" fill="#686868"/></svg>
<svg style="left:556.0px;top:92.0px;opacity:0.95;" width="48" height="48" viewBox="0 0 48 48"><path d="M14.0 36.0L28.0 8.0L20.0 4.0L6.0 31.9Z" fill="#4a4238" stroke="#3a3a3a" stroke-width="0.8"/><path d="M25.8 12.5L28.0 8.0L20.0 4.0L17.7 8.5Z" fill="#5a5a5a"/><path d="M6.0 42.0L14.0 36.0L6.0 31.9Z" fill="#666"/><path d="M23.1 38.0L38.0 9.1L30.0 4.9L15.1 33.9Z" fill="#443c34" stroke="#3a3a3a" stroke-width="0.8"/><path d="M35.7 13.5L38.0 9.1L30.0 4.9L27.7 9.4Z" fill="#5a5a5a"/><path d="M15.0 44.0L23.1 38.0L15.1 33.9Z" fill="#666"/></svg>
<svg style="left:596.5px;top:135.0px;" width="11" height="6" viewBox="0 0 11 6"><path d="M0 0H11L5.5 6Z" fill="#a8a8a8"/></svg>
<svg style="left:622.0px;top:92.0px;opacity:0.95;" width="48" height="48" viewBox="0 0 48 48"><path d="M18.4 38.5L35.9 8.3L28.1 3.7L10.6 34.0Z" fill="#48483c" stroke="#3a3a3a" stroke-width="0.8"/><path d="M33.4 12.6L35.9 8.3L28.1 3.7L25.6 8.1Z" fill="#5a5a5a"/><path d="M10.0 44.0L18.4 38.5L10.6 34.0Z" fill="#666"/></svg>
<svg style="left:687.0px;top:92.0px;" width="48" height="48" viewBox="0 0 48 48"><rect x="3" y="3" width="34" height="36" rx="3" fill="#484848" stroke="#404040" stroke-width="1"/><rect x="9" y="5" width="22" height="14" fill="#5a5a5a"/><path d="M12 9H28M12 13H28" stroke="#404040" stroke-width="1.6"/><rect x="10" y="27" width="20" height="11" fill="#565656"/><rect x="13" y="29" width="5" height="8" fill="#444"/><path d="M35.2 40.5L45.4 24.1L38.6 19.9L28.4 36.2Z" fill="#4a4038" stroke="#3a3a3a" stroke-width="0.8"/><path d="M42.7 28.4L45.4 24.1L38.6 19.9L36.0 24.1Z" fill="#5a5a5a"/><path d="M27.0 46.0L35.2 40.5L28.4 36.2Z" fill="#666"/></svg>
<svg style="left:756.0px;top:92.0px;" width="48" height="48" viewBox="0 0 48 48"><path d="M6 10C12 2 24 6 32 8C42 10 46 14 42 24C38 30 30 24 24 28C16 34 8 30 5 22C3 16 3 14 6 10Z" fill="#4e504c" stroke="#484848" stroke-width="1"/><rect x="26" y="26" width="20" height="20" rx="4" fill="#4a463a" stroke="#403c30" stroke-width="1"/><path d="M29.5 36.0L42.5 36.0" stroke="#6a6a6a" stroke-width="2.6" stroke-linecap="round"/><path d="M32.8 30.4L39.2 41.6" stroke="#6a6a6a" stroke-width="2.6" stroke-linecap="round"/><path d="M39.2 30.4L32.8 41.6" stroke="#6a6a6a" stroke-width="2.6" stroke-linecap="round"/></svg>
<svg style="left:824.0px;top:92.0px;" width="48" height="48" viewBox="0 0 48 48"><rect x="9" y="7" width="9" height="9" fill="#555" stroke="#6a6a6a" stroke-width="1"/><path d="M10 8L17 15M17 8L10 15" stroke="#777" stroke-width="1"/><path d="M18 11H36" stroke="#505050" stroke-width="1.2"/><path d="M13 16L5 42" stroke="#484848" stroke-width="1.2"/><path d="M20 26L40 46" stroke="#4e4a3a" stroke-width="5"/><path d="M18 28L26 20L32 24L24 32Z" fill="#5a5a5a"/><path d="M40 26L20 46" stroke="#4e4a3a" stroke-width="5"/><path d="M36 22L44 30" stroke="#5a5a5a" stroke-width="5"/></svg>
<svg style="left:880.5px;top:111.75px;" width="15" height="8.5" viewBox="0 0 15 8.5"><path d="M0 0H15L7.5 8.5Z" fill="#b0b0b0"/></svg>
<svg style="left:910.0px;top:92.0px;" width="48" height="48" viewBox="0 0 48 48"><rect x="3" y="6" width="36" height="10" fill="#4e4a38" stroke="#454234" stroke-width="1"/><rect x="3" y="19" width="36" height="10" fill="#4e4a38" stroke="#454234" stroke-width="1"/><rect x="3" y="32" width="36" height="10" fill="#4e4a38" stroke="#454234" stroke-width="1"/><path d="M30.0 40.0L46.0 8.0L38.0 4.0L22.0 35.9Z" fill="#4a4038" stroke="#3a3a3a" stroke-width="0.8"/><path d="M43.8 12.5L46.0 8.0L38.0 4.0L35.7 8.5Z" fill="#5a5a5a"/><path d="M22.0 46.0L30.0 40.0L22.0 35.9Z" fill="#666"/></svg>
<svg style="left:973.0px;top:92.0px;" width="48" height="48" viewBox="0 0 48 48"><rect x="4" y="4" width="30" height="26" fill="#4a4836" opacity="0.9"/><path d="M12 12H46" stroke="#5a3a38" stroke-width="3.4"/><path d="M22 12V8H36V12" fill="none" stroke="#5a3a38" stroke-width="2.4"/><path d="M14 14H44L41 46H17Z" fill="#503432" stroke="#5a3a38" stroke-width="1.2"/><path d="M22 19V42M29 19V42M36 19V42" stroke="#3c2a28" stroke-width="2.4"/></svg>
<svg style="left:1041.0px;top:92.0px;" width="48" height="48" viewBox="0 0 48 48"><path d="M4 12L34 30M4 30L34 12" stroke="#555" stroke-width="2.6" stroke-linecap="round"/><circle cx="39" cy="12" r="5" fill="none" stroke="#5a3030" stroke-width="1.8"/><circle cx="39" cy="31" r="5" fill="none" stroke="#5a3030" stroke-width="1.8"/></svg>
<svg style="left:1107.0px;top:92.0px;" width="48" height="48" viewBox="0 0 48 48"><path d="M16 4H32L40 12V34H16Z" fill="#4c4c4c" stroke="#404040" stroke-width="1"/><path d="M6 14H22L30 22V46H6Z" fill="#555" stroke="#404040" stroke-width="1"/><path d="M10 26H26M10 31H26M10 36H26M10 41H26" stroke="#3c3c3c" stroke-width="1.8"/></svg>
<svg style="left:1172.0px;top:92.0px;" width="48" height="48" viewBox="0 0 48 48"><rect x="5" y="6" width="38" height="40" rx="2" fill="#4a4a4a" stroke="#404040" stroke-width="1"/><rect x="16" y="2" width="16" height="9" rx="2" fill="#5a5a5a"/><rect x="10" y="12" width="28" height="30" fill="#565656"/><path d="M14 19H34M14 24H34M14 29H34M14 34H34" stroke="#3c3c3c" stroke-width="1.8"/></svg>
<svg style="left:1241.0px;top:92.0px;" width="48" height="48" viewBox="0 0 48 48"><path d="M4 18L20 4V12C34 12 42 20 40 32C38 40 32 44 24 46C30 40 32 34 30 30C28 26 24 25 20 25V33Z" fill="#4e4e4e" stroke="#444" stroke-width="1" stroke-linejoin="round"/></svg>
<svg style="left:1306.0px;top:92.0px;" width="48" height="48" viewBox="0 0 48 48"><path d="M44 18L28 4V12C14 12 6 20 8 32C10 40 16 44 24 46C18 40 16 34 18 30C20 26 24 25 28 25V33Z" fill="#4e4e4e" stroke="#444" stroke-width="1" stroke-linejoin="round"/></svg>
<svg style="left:1380px;top:99px;" width="10" height="34" viewBox="0 0 10 34"><rect x="0" y="0" width="4" height="4" fill="#686868"/><rect x="6" y="0" width="4" height="4" fill="#686868"/><rect x="0" y="6" width="4" height="4" fill="#686868"/><rect x="6" y="6" width="4" height="4" fill="#686868"/><rect x="0" y="12" width="4" height="4" fill="#686868"/><rect x="6" y="12" width="4" height="4" fill="#686868"/><rect x="0" y="18" width="4" height="4" fill="#686868"/><rect x="6" y="18" width="4" height="4" fill="#686868"/><rect x="0" y="24" width="4" height="4" fill="#686868"/><rect x="6" y="24" width="4" height="4" fill="#686868"/><rect x="0" y="30" width="4" height="4" fill="#686868"/><rect x="6" y="30" width="4" height="4" fill="#686868"/></svg>
<svg style="left:1403.0px;top:92.0px;" width="48" height="48" viewBox="0 0 48 48"><path d="M1 20.0L9 9H39a3 3 0 0 1 3 3V28a3 3 0 0 1 -3 3H9Z" fill="#f5e05a" stroke="#c8a800" stroke-width="1.6" stroke-linejoin="round"/><text x="24.5" y="25.6" text-anchor="middle" font-family="Liberation Sans, sans-serif" font-size="17" font-weight="700" fill="#222">abc</text></svg>
<svg style="left:1470.0px;top:92.0px;" width="48" height="48" viewBox="0 0 48 48"><circle cx="17" cy="16" r="13.5" fill="#2f9a3c" stroke="#555" stroke-width="1"/><path d="M17 16V2.5A13.5 13.5 0 0 0 5.3 9.2Z" fill="#ffd43b"/><path d="M17 16L5.3 9.2A13.5 13.5 0 0 1 17 2.5Z" fill="#ffd43b"/><path d="M17 16L28.7 9.2A13.5 13.5 0 0 0 5.3 9.2Z" fill="#ffd43b" stroke="#a88400" stroke-width="0.8"/><path d="M17 16L28.7 9.2A13.5 13.5 0 0 1 17 29.5Z" fill="#c01818" stroke="#701010" stroke-width="0.8"/><rect x="14" y="30" width="8" height="15" fill="#ffb000" stroke="#c88000" stroke-width="1"/><rect x="24" y="22" width="7" height="23" fill="#2f9a3c" stroke="#1e6e28" stroke-width="1"/><rect x="33" y="33" width="8" height="12" fill="#c01818" stroke="#701010" stroke-width="1"/></svg>
<div style="left:1532px;top:97px;width:1.5px;height:38px;background:#292929;"></div>
<div style="left:1533.5px;top:97px;width:1px;height:38px;background:#3a3a3a;"></div>
<svg style="left:1550.0px;top:92.0px;" width="48" height="48" viewBox="0 0 48 48"><path d="M1 20.0L9 9H38a3 3 0 0 1 3 3V28a3 3 0 0 1 -3 3H9Z" fill="#dfe9f5" stroke="#3f78c8" stroke-width="1.6" stroke-linejoin="round"/><text x="24.0" y="25.9" text-anchor="middle" font-family="Liberation Sans, sans-serif" font-size="18" font-weight="700" fill="#222">ab</text><rect x="33" y="19" width="6" height="16" rx="3" fill="#e8e8e8" stroke="#555" stroke-width="1.2"/><circle cx="38" cy="39" r="8.5" fill="#c03038" stroke="#8a2028" stroke-width="1"/></svg>
<svg style="left:1614.0px;top:92.0px;" width="48" height="48" viewBox="0 0 48 48"><path d="M2 20.0L10 9H41a3 3 0 0 1 3 3V28a3 3 0 0 1 -3 3H10Z" fill="#fff" stroke="#e01010" stroke-width="1.6" stroke-linejoin="round"/><text x="26.0" y="25.9" text-anchor="middle" font-family="Liberation Sans, sans-serif" font-size="18" font-weight="700" fill="#e01010">abc</text></svg>
<div style="left:1679px;top:97px;width:1.5px;height:38px;background:#292929;"></div>
<div style="left:1680.5px;top:97px;width:1px;height:38px;background:#3a3a3a;"></div>
<svg style="left:1696.0px;top:92.0px;" width="48" height="48" viewBox="0 0 48 48"><path d="M1 19.5L9 9H36a3 3 0 0 1 3 3V27a3 3 0 0 1 -3 3H9Z" fill="#56564c" stroke="#4c4c42" stroke-width="1.6" stroke-linejoin="round"/><text x="23.0" y="25.1" text-anchor="middle" font-family="Liberation Sans, sans-serif" font-size="17" font-weight="700" fill="#2e2e2e">ab</text><rect x="31" y="19" width="5" height="14" rx="2.5" fill="#6a6a6a"/><circle cx="36" cy="39" r="8" fill="#4a3a3c"/></svg>
<svg style="left:1761.0px;top:92.0px;" width="48" height="48" viewBox="0 0 48 48"><path d="M1 19.5L9 9H38a3 3 0 0 1 3 3V27a3 3 0 0 1 -3 3H9Z" fill="#56564c" stroke="#4c4c42" stroke-width="1.6" stroke-linejoin="round"/><text x="24.0" y="25.1" text-anchor="middle" font-family="Liberation Sans, sans-serif" font-size="17" font-weight="700" fill="#2e2e2e">abc</text><ellipse cx="31" cy="40" rx="10" ry="6" fill="#3c3c3c" stroke="#4a4a4a" stroke-width="1"/><circle cx="31" cy="40" r="3.6" fill="#5a5a5a"/><circle cx="31" cy="40" r="1.6" fill="#222"/></svg>
<svg style="left:1828.0px;top:92.0px;" width="48" height="48" viewBox="0 0 48 48"><path d="M1 19.5L9 9H38a3 3 0 0 1 3 3V27a3 3 0 0 1 -3 3H9Z" fill="#56564c" stroke="#4c4c42" stroke-width="1.6" stroke-linejoin="round"/><text x="24.0" y="25.1" text-anchor="middle" font-family="Liberation Sans, sans-serif" font-size="17" font-weight="700" fill="#2e2e2e">abc</text><rect x="24" y="26" width="20" height="18" rx="3" fill="#4c4c4c"/><path d="M27 35H36V30L42 35L36 40V36H27Z" fill="#6a6a6a"/></svg>
<svg style="left:1894.0px;top:92.0px;" width="48" height="48" viewBox="0 0 48 48"><path d="M1 19.5L9 9H38a3 3 0 0 1 3 3V27a3 3 0 0 1 -3 3H9Z" fill="#56564c" stroke="#4c4c42" stroke-width="1.6" stroke-linejoin="round"/><text x="24.0" y="25.1" text-anchor="middle" font-family="Liberation Sans, sans-serif" font-size="17" font-weight="700" fill="#2e2e2e">abc</text><rect x="24" y="26" width="20" height="18" rx="3" fill="#4c4c4c"/><path d="M40 35A6 6 0 1 1 34 29" fill="none" stroke="#6a6a6a" stroke-width="2.6"/><path d="M38 38L41 32L44 38Z" fill="#6a6a6a"/></svg>
<svg style="left:1959.0px;top:92.0px;" width="48" height="48" viewBox="0 0 48 48"><path d="M1 19.5L9 9H38a3 3 0 0 1 3 3V27a3 3 0 0 1 -3 3H9Z" fill="#56564c" stroke="#4c4c42" stroke-width="1.6" stroke-linejoin="round"/><text x="24.0" y="25.1" text-anchor="middle" font-family="Liberation Sans, sans-serif" font-size="17" font-weight="700" fill="#2e2e2e">abc</text><rect x="24" y="26" width="20" height="18" rx="3" fill="#4c4c4c"/><path d="M28 42L31 35L39 28L41 31L34 39Z" fill="#6a6a6a"/></svg>
<svg style="left:2034px;top:99px;" width="10" height="34" viewBox="0 0 10 34"><rect x="0" y="0" width="4" height="4" fill="#686868"/><rect x="6" y="0" width="4" height="4" fill="#686868"/><rect x="0" y="6" width="4" height="4" fill="#686868"/><rect x="6" y="6" width="4" height="4" fill="#686868"/><rect x="0" y="12" width="4" height="4" fill="#686868"/><rect x="6" y="12" width="4" height="4" fill="#686868"/><rect x="0" y="18" width="4" height="4" fill="#686868"/><rect x="6" y="18" width="4" height="4" fill="#686868"/><rect x="0" y="24" width="4" height="4" fill="#686868"/><rect x="6" y="24" width="4" height="4" fill="#686868"/><rect x="0" y="30" width="4" height="4" fill="#686868"/><rect x="6" y="30" width="4" height="4" fill="#686868"/></svg>
<svg style="left:2059.0px;top:92.0px;" width="48" height="48" viewBox="0 0 48 48"><circle cx="24" cy="20" r="19" fill="#9fc0e6" stroke="#5b87bd" stroke-width="1.2"/><path d="M12.6 10.5l6.6 -4.8l4.8 3.8l-1.9 6.6l-5.7 2.9l1.9 9.5l-4.8 -5.7Z" fill="#2d5488"/><path d="M24.9 9.5l7.6 -1.9l5.7 8.6l-3.8 1.9l-1.0 10.5l-5.7 3.8l-1.9 -11.4l-2.9 -3.8Z" fill="#2d5488"/><path d="M6 14Q24 6 42 14M5 24Q24 18 43 24M24 1V39M14 3Q8 20 14 37M34 3Q40 20 34 37" fill="none" stroke="#fff" stroke-width="1.1" opacity="0.85"/><path d="M14 30L10 40M34 30L38 40M18 30H30V40H18Z" fill="#111" stroke="#111" stroke-width="4" stroke-linejoin="round"/><circle cx="12" cy="41" r="6.5" fill="#111"/><circle cx="36" cy="41" r="6.5" fill="#111"/><circle cx="12" cy="42" r="3.4" fill="#333"/><circle cx="36" cy="42" r="3.4" fill="#333"/></svg>
<svg style="left:2133px;top:99px;" width="10" height="34" viewBox="0 0 10 34"><rect x="0" y="0" width="4" height="4" fill="#686868"/><rect x="6" y="0" width="4" height="4" fill="#686868"/><rect x="0" y="6" width="4" height="4" fill="#686868"/><rect x="6" y="6" width="4" height="4" fill="#686868"/><rect x="0" y="12" width="4" height="4" fill="#686868"/><rect x="6" y="12" width="4" height="4" fill="#686868"/><rect x="0" y="18" width="4" height="4" fill="#686868"/><rect x="6" y="18" width="4" height="4" fill="#686868"/><rect x="0" y="24" width="4" height="4" fill="#686868"/><rect x="6" y="24" width="4" height="4" fill="#686868"/><rect x="0" y="30" width="4" height="4" fill="#686868"/><rect x="6" y="30" width="4" height="4" fill="#686868"/></svg>
<svg style="left:2156.0px;top:92.0px;" width="48" height="48" viewBox="0 0 48 48"><path d="M23 3C15 3 14 6 14 10V15H24V17H9C4 17 2 21 2 26C2 31 4 35 9 35H13V29C13 25 16 22 20 22H29C32 22 34 20 34 17V10C34 6 31 3 23 3Z" fill="#3f7cb4"/><circle cx="19" cy="9" r="2.2" fill="#fff"/><path d="M25 45C33 45 34 42 34 38V33H24V31H39C44 31 46 27 46 22C46 17 44 13 39 13H35V19C35 23 32 26 28 26H19C16 26 14 28 14 31V38C14 42 17 45 25 45Z" fill="#ffd43b"/><circle cx="29" cy="39" r="2.2" fill="#fff"/><path d="M34 37L44 41L34 45" fill="none" stroke="#555" stroke-width="2.2"/></svg>
<svg style="left:2223.0px;top:92.0px;" width="48" height="48" viewBox="0 0 48 48"><circle cx="24" cy="24" r="23" fill="#4db8a8"/><text x="24" y="31" text-anchor="middle" font-family="Liberation Sans, sans-serif" font-size="22" font-weight="700" fill="#2f3a3a" letter-spacing="-0.5">ods</text></svg>
<svg style="left:2296px;top:99px;" width="10" height="34" viewBox="0 0 10 34"><rect x="0" y="0" width="4" height="4" fill="#686868"/><rect x="6" y="0" width="4" height="4" fill="#686868"/><rect x="0" y="6" width="4" height="4" fill="#686868"/><rect x="6" y="6" width="4" height="4" fill="#686868"/><rect x="0" y="12" width="4" height="4" fill="#686868"/><rect x="6" y="12" width="4" height="4" fill="#686868"/><rect x="0" y="18" width="4" height="4" fill="#686868"/><rect x="6" y="18" width="4" height="4" fill="#686868"/><rect x="0" y="24" width="4" height="4" fill="#686868"/><rect x="6" y="24" width="4" height="4" fill="#686868"/><rect x="0" y="30" width="4" height="4" fill="#686868"/><rect x="6" y="30" width="4" height="4" fill="#686868"/></svg>
<svg style="left:2321.0px;top:92.0px;" width="48" height="48" viewBox="0 0 48 48"><rect x="3" y="3" width="40" height="42" fill="#2c405c" stroke="#1c2434" stroke-width="2"/><rect x="13" y="4" width="29" height="40" fill="#6d9bd1"/><path d="M12 3V45" stroke="#1c2434" stroke-width="2"/><text x="27" y="34" text-anchor="middle" font-family="Liberation Sans, sans-serif" font-size="27" fill="#fff">?</text></svg>
<svg style="left:2394px;top:99px;" width="10" height="34" viewBox="0 0 10 34"><rect x="0" y="0" width="4" height="4" fill="#686868"/><rect x="6" y="0" width="4" height="4" fill="#686868"/><rect x="0" y="6" width="4" height="4" fill="#686868"/><rect x="6" y="6" width="4" height="4" fill="#686868"/><rect x="0" y="12" width="4" height="4" fill="#686868"/><rect x="6" y="12" width="4" height="4" fill="#686868"/><rect x="0" y="18" width="4" height="4" fill="#686868"/><rect x="6" y="18" width="4" height="4" fill="#686868"/><rect x="0" y="24" width="4" height="4" fill="#686868"/><rect x="6" y="24" width="4" height="4" fill="#686868"/><rect x="0" y="30" width="4" height="4" fill="#686868"/><rect x="6" y="30" width="4" height="4" fill="#686868"/></svg>
<svg style="left:38px;top:166px;" width="34" height="10" viewBox="0 0 34 10"><rect x="0" y="0" width="3.4" height="4" fill="#686868"/><rect x="5" y="0" width="3.4" height="4" fill="#686868"/><rect x="10" y="0" width="3.4" height="4" fill="#686868"/><rect x="15" y="0" width="3.4" height="4" fill="#686868"/><rect x="20" y="0" width="3.4" height="4" fill="#686868"/><rect x="25" y="0" width="3.4" height="4" fill="#686868"/><rect x="30" y="0" width="3.4" height="4" fill="#686868"/><rect x="0" y="6" width="3.4" height="4" fill="#686868"/><rect x="5" y="6" width="3.4" height="4" fill="#686868"/><rect x="10" y="6" width="3.4" height="4" fill="#686868"/><rect x="15" y="6" width="3.4" height="4" fill="#686868"/><rect x="20" y="6" width="3.4" height="4" fill="#686868"/><rect x="25" y="6" width="3.4" height="4" fill="#686868"/><rect x="30" y="6" width="3.4" height="4" fill="#686868"/></svg>
<svg style="left:16.0px;top:188.0px;" width="48" height="48" viewBox="0 0 48 48"><path d="M5 6L18 36L32 6H44" fill="none" stroke="#23426a" stroke-width="2.2" stroke-linejoin="round"/><circle cx="5" cy="6" r="3" fill="#fff" stroke="#23426a" stroke-width="1.2"/><circle cx="18" cy="36" r="3" fill="#fff" stroke="#23426a" stroke-width="1.2"/><circle cx="32" cy="6" r="3" fill="#fff" stroke="#23426a" stroke-width="1.2"/><circle cx="44" cy="6" r="3" fill="#fff" stroke="#23426a" stroke-width="1.2"/><rect x="30" y="30" width="18" height="18" rx="4" fill="#5a9a5a" stroke="#447a44" stroke-width="1"/><path d="M39.0 33.6V44.4M33.6 39.0H44.4" stroke="#fff" stroke-width="3.6" stroke-linecap="round"/></svg>
<svg style="left:16.0px;top:252.5px;" width="48" height="48" viewBox="0 0 48 48"><rect x="0" y="0" width="13" height="13" fill="#23426a"/><rect x="13" y="0" width="13" height="13" fill="#6d9bd1"/><rect x="26" y="0" width="13" height="13" fill="#23426a"/><rect x="0" y="13" width="13" height="13" fill="#6d9bd1"/><rect x="13" y="13" width="13" height="13" fill="#23426a"/><rect x="26" y="13" width="13" height="13" fill="#6d9bd1"/><rect x="0" y="26" width="13" height="13" fill="#23426a"/><rect x="13" y="26" width="13" height="13" fill="#6d9bd1"/><rect x="26" y="26" width="13" height="13" fill="#23426a"/><rect x="30" y="30" width="18" height="18" rx="4" fill="#5a9a5a" stroke="#447a44" stroke-width="1"/><path d="M39.0 33.6V44.4M33.6 39.0H44.4" stroke="#fff" stroke-width="3.6" stroke-linecap="round"/></svg>
<svg style="left:16.0px;top:319.5px;" width="48" height="48" viewBox="0 0 48 48"><rect x="3" y="3" width="42" height="42" fill="#6d9bd1" stroke="#23426a" stroke-width="2"/><path d="M3 26H45M25 3V45M3 36H25M14 26V45" stroke="#23426a" stroke-width="2"/><path d="M3 3L25 26M25 3L3 26M25 26L45 3" stroke="#23426a" stroke-width="1.6"/><path d="M27 5H43L27 24Z" fill="#dce8f5" opacity="0.55"/><path d="M5 5H23L14 14Z" fill="#dce8f5" opacity="0.45"/><rect x="30" y="30" width="18" height="18" rx="4" fill="#5a9a5a" stroke="#447a44" stroke-width="1"/><path d="M39.0 33.6V44.4M33.6 39.0H44.4" stroke="#fff" stroke-width="3.6" stroke-linecap="round"/></svg>
<svg style="left:16.0px;top:382.5px;" width="48" height="48" viewBox="0 0 48 48"><path d="M14 12C14 4 30 2 32 14C34 26 24 36 10 40C20 34 24 28 24 22C18 24 14 18 14 12Z" fill="#6d9bd1" stroke="#23426a" stroke-width="1.6" stroke-linejoin="round"/><rect x="30" y="30" width="18" height="18" rx="4" fill="#5a9a5a" stroke="#447a44" stroke-width="1"/><path d="M39.0 33.6V44.4M33.6 39.0H44.4" stroke="#fff" stroke-width="3.6" stroke-linecap="round"/></svg>
<svg style="left:16.0px;top:446.5px;" width="48" height="48" viewBox="0 0 48 48"><path d="M3 46C8 30 18 12 44 2C46 14 40 28 14 38C10 40 6 44 3 46Z" fill="#6d9bd1" stroke="#23426a" stroke-width="1.2" stroke-linejoin="round"/><path d="M12.0 36.0L22.0 34.0" stroke="#dce8f5" stroke-width="1"/><path d="M15.0 32.8L24.6 30.4" stroke="#dce8f5" stroke-width="1"/><path d="M18.0 29.6L27.2 26.8" stroke="#dce8f5" stroke-width="1"/><path d="M21.0 26.4L29.8 23.2" stroke="#dce8f5" stroke-width="1"/><path d="M24.0 23.2L32.4 19.6" stroke="#dce8f5" stroke-width="1"/><path d="M27.0 20.0L35.0 16.0" stroke="#dce8f5" stroke-width="1"/><path d="M30.0 16.8L37.6 12.4" stroke="#dce8f5" stroke-width="1"/><path d="M33.0 13.6L40.2 8.8" stroke="#dce8f5" stroke-width="1"/><path d="M36.0 10.4L42.8 5.2" stroke="#dce8f5" stroke-width="1"/><path d="M3 46C10 32 24 14 44 2" fill="none" stroke="#23426a" stroke-width="1.4"/><rect x="30" y="30" width="18" height="18" rx="4" fill="#5a9a5a" stroke="#447a44" stroke-width="1"/><path d="M39.0 33.6V44.4M33.6 39.0H44.4" stroke="#fff" stroke-width="3.6" stroke-linecap="round"/></svg>
<svg style="left:16.0px;top:510.5px;" width="48" height="48" viewBox="0 0 48 48"><rect x="2" y="4" width="42" height="41" rx="3" fill="#bccde4" stroke="#6d9bd1" stroke-width="1.6"/><path d="M3 24L30 5H3Z" fill="#f0f4fa" opacity="0.55"/><path d="M4 5L15 37L30 5H43" fill="none" stroke="#23426a" stroke-width="2.2" stroke-linejoin="round"/><circle cx="4" cy="5" r="3.2" fill="#fff" stroke="#23426a" stroke-width="1.4"/><circle cx="15" cy="37" r="3.2" fill="#fff" stroke="#23426a" stroke-width="1.4"/><circle cx="30" cy="5" r="3.2" fill="#fff" stroke="#23426a" stroke-width="1.4"/><circle cx="43" cy="5" r="3.2" fill="#fff" stroke="#23426a" stroke-width="1.4"/><rect x="30" y="30" width="18" height="18" rx="4" fill="#5a9a5a" stroke="#447a44" stroke-width="1"/><path d="M39.0 33.6V44.4M33.6 39.0H44.4" stroke="#fff" stroke-width="3.6" stroke-linecap="round"/></svg>
<svg style="left:16.0px;top:573.5px;" width="48" height="48" viewBox="0 0 48 48"><path d="M8 6C14 0 30 0 36 6C42 10 42 20 36 26C34 30 34 34 30 34C28 38 22 38 22 32L21 26C16 28 10 26 8 20C4 16 4 10 8 6Z" fill="#5b87bd" stroke="#23426a" stroke-width="1.8" stroke-linejoin="round"/><path d="M20 8C18 14 19 22 21 26M30 8C32 14 30 22 34 26" fill="none" stroke="#23426a" stroke-width="1.4"/><circle cx="16" cy="13" r="1.6" fill="#fff"/><circle cx="31" cy="13" r="1.6" fill="#fff"/><path d="M24 30V44" stroke="#5b87bd" stroke-width="6" stroke-linecap="round"/><path d="M24 30V44" stroke="#23426a" stroke-width="1" /><rect x="30" y="30" width="18" height="18" rx="4" fill="#5a9a5a" stroke="#447a44" stroke-width="1"/><path d="M39.0 33.6V44.4M33.6 39.0H44.4" stroke="#fff" stroke-width="3.6" stroke-linecap="round"/></svg>
<svg style="left:76.5px;top:594.25px;" width="15" height="8.5" viewBox="0 0 15 8.5"><path d="M0 0H15L7.5 8.5Z" fill="#b0b0b0"/></svg>
<svg style="left:16.0px;top:636.5px;" width="48" height="48" viewBox="0 0 48 48"><ellipse cx="24" cy="22" rx="22" ry="20" fill="#9fc0e6" stroke="#5b87bd" stroke-width="1.4"/><path d="M12.6 12.5l6.6 -4.8l4.8 3.8l-1.9 6.6l-5.7 2.9l1.9 9.5l-4.8 -5.7Z" fill="#2d5488"/><path d="M24.9 11.5l7.6 -1.9l5.7 8.6l-3.8 1.9l-1.0 10.5l-5.7 3.8l-1.9 -11.4l-2.9 -3.8Z" fill="#2d5488"/><path d="M3 16Q24 8 45 16M2 26Q24 20 46 26M24 2V42M12 5Q4 22 12 39M36 5Q44 22 36 39" fill="none" stroke="#fff" stroke-width="1.2" opacity="0.9"/><rect x="30" y="30" width="18" height="18" rx="4" fill="#5a9a5a" stroke="#447a44" stroke-width="1"/><path d="M39.0 33.6V44.4M33.6 39.0H44.4" stroke="#fff" stroke-width="3.6" stroke-linecap="round"/></svg>
<svg style="left:16.0px;top:701.5px;" width="48" height="48" viewBox="0 0 48 48"><circle cx="24" cy="22" r="20" fill="#23426a"/><path d="M5 16H43V28H5Z" fill="#6d9bd1"/><path d="M9 8H39M4 22H44M9 36H39" stroke="#dce8f5" stroke-width="0"/><path d="M6 14H42M4 22H44M6 30H42" stroke="#fff" stroke-width="2.2"/><ellipse cx="24" cy="22" rx="9" ry="20" fill="none" stroke="#fff" stroke-width="2"/><circle cx="24" cy="22" r="20" fill="none" stroke="#fff" stroke-width="1.6"/><rect x="30" y="30" width="18" height="18" rx="4" fill="#5a9a5a" stroke="#447a44" stroke-width="1"/><path d="M39.0 33.6V44.4M33.6 39.0H44.4" stroke="#fff" stroke-width="3.6" stroke-linecap="round"/></svg>
<svg style="left:16.0px;top:764.5px;" width="48" height="48" viewBox="0 0 48 48"><circle cx="24" cy="22" r="20" fill="none" stroke="#6d9bd1" stroke-width="2"/><ellipse cx="24" cy="22" rx="9" ry="20" fill="none" stroke="#6d9bd1" stroke-width="1.8"/><path d="M6 14Q24 19 42 14M6 30Q24 25 42 30M4 22H44" fill="none" stroke="#6d9bd1" stroke-width="1.8"/><circle cx="15" cy="12" r="1.8" fill="#dce8f5" stroke="#23426a" stroke-width="0.8"/><circle cx="24" cy="15" r="1.8" fill="#dce8f5" stroke="#23426a" stroke-width="0.8"/><circle cx="33" cy="12" r="1.8" fill="#dce8f5" stroke="#23426a" stroke-width="0.8"/><circle cx="20" cy="32" r="1.8" fill="#dce8f5" stroke="#23426a" stroke-width="0.8"/><circle cx="24" cy="40" r="1.8" fill="#dce8f5" stroke="#23426a" stroke-width="0.8"/><rect x="30" y="30" width="18" height="18" rx="4" fill="#5a9a5a" stroke="#447a44" stroke-width="1"/><path d="M39.0 33.6V44.4M33.6 39.0H44.4" stroke="#fff" stroke-width="3.6" stroke-linecap="round"/></svg>
<svg style="left:16.0px;top:830.5px;" width="48" height="48" viewBox="0 0 48 48"><path d="M1 16L24 6L47 16V36L24 47L1 36Z" fill="#e0b400" stroke="#111" stroke-width="1.4" stroke-linejoin="round"/><path d="M1 16L24 6L47 16L24 27Z" fill="#8a6c00"/><circle cx="24" cy="16" r="15.5" fill="#9fc0e6" stroke="#5b87bd" stroke-width="1.2"/><path d="M14.7 8.2l5.4 -3.9l3.9 3.1l-1.6 5.4l-4.6 2.3l1.6 7.8l-3.9 -4.6Z" fill="#2d5488"/><path d="M24.8 7.5l6.2 -1.6l4.6 7.0l-3.1 1.6l-0.8 8.5l-4.6 3.1l-1.6 -9.3l-2.3 -3.1Z" fill="#2d5488"/><path d="M1 16L24 27V47L1 36Z" fill="#e0b400" stroke="#111" stroke-width="1.4" stroke-linejoin="round"/><path d="M24 27L47 16V36L24 47Z" fill="#fff27a" stroke="#111" stroke-width="1.4" stroke-linejoin="round"/><rect x="30" y="30" width="18" height="18" rx="4" fill="#d9b200" stroke="#b89400" stroke-width="1"/><path d="M39.0 33.1L39.0 44.9" stroke="#fff" stroke-width="2.7" stroke-linecap="round"/><path d="M44.1 36.0L33.9 42.0" stroke="#fff" stroke-width="2.7" stroke-linecap="round"/><path d="M44.1 42.0L33.9 36.0" stroke="#fff" stroke-width="2.7" stroke-linecap="round"/><circle cx="39.0" cy="39.0" r="1.6" fill="#d9b200"/></svg>
<svg style="left:76.5px;top:850.25px;" width="15" height="8.5" viewBox="0 0 15 8.5"><path d="M0 0H15L7.5 8.5Z" fill="#b0b0b0"/></svg>
<svg style="left:119.0px;top:208.0px;" width="32" height="32" viewBox="0 0 38 38"><path d="M2 22L10 6L28 12L22 30Z" fill="#ffd43b"/><path d="M3 20L8 10L26 16L22 27Z" fill="#3f78c8"/><path d="M1 24L5 17L24 24L20 34Z" fill="#e02020"/><path d="M24 18L37 3" stroke="#c8882a" stroke-width="4.4" stroke-linecap="round"/><path d="M14 20L24 13L31 23L21 32Z" fill="#e8c890" stroke="#a07838" stroke-width="1.2" stroke-linejoin="round"/><path d="M17 22L24 30M20 19L27 27M23 17L29 25" stroke="#a07838" stroke-width="1"/></svg>
<svg style="left:170.5px;top:208.0px;" width="32" height="32" viewBox="0 0 38 38"><path d="M2 16V36H20" fill="none" stroke="#888" stroke-width="1.6"/><path d="M7 10V31H26" fill="none" stroke="#aaa" stroke-width="1.6"/><rect x="11" y="6" width="20" height="20" fill="#d8d8d8" stroke="#888" stroke-width="1.4"/><path d="M17 2V17A3.5 3.5 0 0 0 24 17V8" fill="none" stroke="#3f6aa0" stroke-width="2"/><rect x="23" y="23" width="14" height="14" rx="4" fill="#5a9a5a" stroke="#447a44" stroke-width="1"/><path d="M30.0 25.8V34.2M25.8 30.0H34.2" stroke="#fff" stroke-width="2.8" stroke-linecap="round"/></svg>
<svg style="left:220.0px;top:208.0px;" width="32" height="32" viewBox="0 0 38 38"><path d="M2 20C10 8 28 8 36 20C28 30 10 30 2 20Z" fill="#f4f4f4" stroke="#888" stroke-width="1.4"/><circle cx="19" cy="19" r="7.5" fill="#5b87bd" stroke="#2d5488" stroke-width="1"/><circle cx="19" cy="19" r="3.2" fill="#111"/><circle cx="17" cy="16.5" r="1.6" fill="#fff"/><path d="M3 11C12 3 28 3 36 12" fill="none" stroke="#999" stroke-width="1.6"/></svg>
<svg style="left:244.5px;top:234.0px;" width="11" height="6" viewBox="0 0 11 6"><path d="M0 0H11L5.5 6Z" fill="#a8a8a8"/></svg>
<svg style="left:271.0px;top:208.0px;" width="32" height="32" viewBox="0 0 38 38"><path d="M5 8H33L22 21V36L16 32V21Z" fill="#6d9bd1" stroke="#3f6aa0" stroke-width="1.4" stroke-linejoin="round"/><rect x="4" y="3" width="30" height="5" fill="#ffe14d" stroke="#d4aa00" stroke-width="1"/></svg>
<svg style="left:294.5px;top:234.0px;" width="11" height="6" viewBox="0 0 11 6"><path d="M0 0H11L5.5 6Z" fill="#a8a8a8"/></svg>
<svg style="left:321.0px;top:208.0px;" width="32" height="32" viewBox="0 0 38 38"><text x="1" y="24" font-family="Liberation Serif, serif" font-size="34" fill="#7a3a8a">ε</text><path d="M19 20H36V24L31 30V37H24V30L19 24Z" fill="#e0e0e0" stroke="#888" stroke-width="1.2" stroke-linejoin="round"/><path d="M24 30V37H31V30Z" fill="#b8b8b8"/></svg>
<svg style="left:364.5px;top:217.75px;" width="15" height="8.5" viewBox="0 0 15 8.5"><path d="M0 0H15L7.5 8.5Z" fill="#b0b0b0"/></svg>
<svg style="left:395.0px;top:208.0px;" width="32" height="32" viewBox="0 0 38 38"><path d="M5 5V33M5 7H16M5 19H12M5 31H12M3 5H30" fill="none" stroke="#999" stroke-width="1.8"/><rect x="11" y="14" width="9" height="9" fill="#ffb000" stroke="#e08000" stroke-width="1"/><rect x="11" y="26" width="9" height="9" fill="#ffb000" stroke="#e08000" stroke-width="1"/><rect x="14" y="17" width="3" height="3" fill="#fff"/><rect x="14" y="29" width="3" height="3" fill="#fff"/><path d="M20 2H28V20H34L24 34L14 20H20Z" fill="#5b87bd" stroke="#3f6aa0" stroke-width="1" stroke-linejoin="round"/></svg>
<svg style="left:444.0px;top:208.0px;" width="32" height="32" viewBox="0 0 38 38"><path d="M5 5V33M5 7H16M5 19H12M5 31H12M3 5H30" fill="none" stroke="#999" stroke-width="1.8"/><rect x="11" y="14" width="9" height="9" fill="#ffb000" stroke="#e08000" stroke-width="1"/><rect x="11" y="26" width="9" height="9" fill="#ffb000" stroke="#e08000" stroke-width="1"/><rect x="14" y="17" width="3" height="3" fill="#fff"/><rect x="14" y="29" width="3" height="3" fill="#fff"/><path d="M20 34H28V16H34L24 2L14 16H20Z" fill="#5b87bd" stroke="#3f6aa0" stroke-width="1" stroke-linejoin="round"/></svg>
<svg style="left:493.0px;top:208.0px;" width="32" height="32" viewBox="0 0 38 38"><rect x="4" y="3" width="24" height="24" fill="#e8e8e8" stroke="#b0b0b0" stroke-width="1.6"/><rect x="21" y="23" width="14" height="11" rx="3" fill="#e8424a"/><path d="M24 28.5H32" stroke="#fff" stroke-width="2.6"/></svg>
<svg style="left:1503px;top:1752px" width="36" height="36" viewBox="0 0 36 36"><g transform="rotate(-30 18 18)"><rect x="10" y="5" width="16" height="26" rx="8" fill="#f0f0f0" stroke="#111" stroke-width="2.2"/><path d="M18 5V15M10 15H26" stroke="#111" stroke-width="1.8"/><circle cx="18" cy="24" r="3.4" fill="#fff" stroke="#111" stroke-width="1.6"/></g><path d="M27 5L31 3M29 10L33 9" stroke="#888" stroke-width="1.4"/></svg>
<svg style="left:1832px;top:1752px" width="32" height="38" viewBox="0 0 32 38"><path d="M8 18V11A8 8 0 0 1 24 11V18" fill="none" stroke="#6e6e6e" stroke-width="4"/><rect x="3" y="17" width="26" height="19" rx="3" fill="#6e6e6e"/></svg>
<svg style="left:2630px;top:1753px" width="34" height="34" viewBox="0 0 34 34"><circle cx="17" cy="17" r="14" fill="#5a5a5a" stroke="#8a8a8a" stroke-width="1.6"/><path d="M3 17H31M17 3V31M6 9Q17 14 28 9M6 25Q17 20 28 25" fill="none" stroke="#b0b0b0" stroke-width="1.4"/><ellipse cx="17" cy="17" rx="6.5" ry="14" fill="none" stroke="#b0b0b0" stroke-width="1.4"/><path d="M2 4L8 8M32 4L26 8M2 30L8 26M32 30L26 26" stroke="#8a8a8a" stroke-width="1.6"/></svg>
<svg style="left:2831px;top:1752px" width="38" height="36" viewBox="0 0 38 36"><path d="M8 2H30A7 7 0 0 1 37 9V19A7 7 0 0 1 30 26H27C27 30 29 33 32 35C26 34 21 31 19 26H8A7 7 0 0 1 1 19V9A7 7 0 0 1 8 2Z" fill="#b4b4b4"/><circle cx="11" cy="14" r="2.6" fill="#323232"/><circle cx="19" cy="14" r="2.6" fill="#323232"/><circle cx="27" cy="14" r="2.6" fill="#323232"/></svg>
<div style="left:955px;top:289px;width:1647px;height:1333px;background:#323232;border-radius:22px;box-shadow:0 0 0 1px #5c5c5c, 0 0 0 2.3px rgba(0,0,0,0.85), 0 38px 78px 0 rgba(0,0,0,0.58), 0 0 20px rgba(0,0,0,0.35);"></div>
<div style="left:955px;top:289px;width:1647px;height:55px;background:#37343b;border-radius:22px 22px 0 0;"></div>
<div style="left:955px;top:344px;width:1647px;height:2px;background:#111;"></div>
<div style="left:970px;top:304px;width:24px;height:24px;background:#ec6a5e;border-radius:50%;"></div>
<div style="left:1010px;top:304px;width:24px;height:24px;background:#5d5a61;border-radius:50%;"></div>
<div style="left:1050px;top:304px;width:24px;height:24px;background:#61c454;border-radius:50%;"></div>
<div class="t" style="left:1396.5px;top:302.0px;font-size:26px;line-height:26px;color:#b7b3bb;font-weight:700;letter-spacing:0.25px;">Layer Properties — Gender Equality in Europe — Symbology</div>
<div style="left:955px;top:346px;width:99px;height:1276px;background:#404040;border-radius:0 0 0 22px;"></div>
<div style="left:955px;top:346px;width:99px;height:45px;background:#1e1e1e;border-radius:0 0 6px 6px;"></div>
<svg style="left:971px;top:355px;" width="30" height="30" viewBox="0 0 30 30"><circle cx="11" cy="11" r="8" fill="none" stroke="#b4b4b4" stroke-width="2.4"/><path d="M17 17L24 24" stroke="#b4b4b4" stroke-width="3" stroke-linecap="round"/></svg>
<div style="left:955px;top:548px;width:72px;height:72px;background:#2b2b2b;"></div>
<div style="left:1027px;top:404px;width:27px;height:1218px;background:#3a3a3a;"></div>
<div style="left:1027px;top:404px;width:27px;height:26px;background:#3c3c3c;box-shadow:inset 0 0 0 1.5px #555;"></div>
<svg style="left:1033.5px;top:413.0px;" width="14" height="8" viewBox="0 0 14 8"><path d="M0 8H14L7.0 0Z" fill="#b4b4b4"/></svg>
<div style="left:1028px;top:434px;width:25px;height:881px;background:linear-gradient(90deg,#3a3a3a,#464646);box-shadow:inset 0 0 0 1.5px #505050;"></div>
<div style="left:1027px;top:1596px;width:27px;height:26px;background:#3c3c3c;box-shadow:inset 0 0 0 1.5px #555;"></div>
<svg style="left:1033.5px;top:1605.0px;" width="14" height="8" viewBox="0 0 14 8"><path d="M0 0H14L7.0 8Z" fill="#b4b4b4"/></svg>
<svg style="left:1057px;top:970px;" width="4" height="36" viewBox="0 0 4 36"><rect x="0" y="0" width="3" height="4" fill="#686868"/><rect x="0" y="6" width="3" height="4" fill="#686868"/><rect x="0" y="12" width="3" height="4" fill="#686868"/><rect x="0" y="18" width="3" height="4" fill="#686868"/><rect x="0" y="24" width="3" height="4" fill="#686868"/><rect x="0" y="30" width="3" height="4" fill="#686868"/></svg>
<div style="left:1063px;top:351px;width:1533px;height:45px;background:linear-gradient(#4a4a4a,#414141);border:2px solid #5a5a5a;border-radius:7px;box-sizing:border-box;"></div>
<svg style="left:1077px;top:358px;" width="30" height="32" viewBox="0 0 30 32"><rect x="1" y="2" width="21" height="7" fill="#ffdc00" stroke="#f0a000" stroke-width="1.6"/><rect x="5" y="12" width="21" height="7" fill="#ff5a00" stroke="#d03800" stroke-width="1.6"/><rect x="1" y="22" width="21" height="7" fill="#c80000" stroke="#780000" stroke-width="1.6"/></svg>
<div class="t" style="left:1112.5px;top:361.5px;font-size:26px;line-height:26px;color:#000;letter-spacing:0.45px;">Graduated</div>
<svg style="left:2568.0px;top:369.0px;" width="14" height="8" viewBox="0 0 14 8"><path d="M0 0H14L7.0 8Z" fill="#151515"/></svg>
<div class="t" style="left:1063px;top:422.0px;font-size:26px;line-height:26px;color:#dfdfdf;letter-spacing:0.45px;">Value</div>
<div style="left:1252px;top:410px;width:1285px;height:48px;background:#1e1e1e;border-radius:7px;"></div>
<div style="left:2496px;top:411px;width:41px;height:46px;background:#3f3f3f;border-radius:0 7px 7px 0;box-shadow:inset 0 0 0 1.5px #505050;"></div>
<svg style="left:2509.0px;top:431.0px;" width="14" height="8" viewBox="0 0 14 8"><path d="M0 0H14L7.0 8Z" fill="#151515"/></svg>
<div class="t" style="left:1259px;top:426.6px;font-size:17px;line-height:17px;color:#6a6a6a;font-weight:700;letter-spacing:0.6px;">1.2</div>
<div class="t" style="left:1300px;top:422.0px;font-size:26px;line-height:26px;color:#dfdfdf;letter-spacing:0.5px;">general_index</div>
<div style="left:2551px;top:412px;width:45px;height:44px;background:linear-gradient(#474747,#3b3b3b);border:2px solid #585858;border-radius:7px;box-sizing:border-box;"></div>
<div class="t" style="left:2551px;top:420.6px;font-size:30px;line-height:30px;color:#6a3a80;width:45px;text-align:center;font-family:"Liberation Serif","DejaVu Serif",serif;">ε</div>
<div class="t" style="left:1063px;top:479.7px;font-size:26px;line-height:26px;color:#dfdfdf;letter-spacing:0.3px;">Symbol</div>
<div style="left:1253px;top:471px;width:1319px;height:42px;background:#464646;border:2px solid #5c5c5c;border-radius:7px;box-sizing:border-box;"></div>
<div style="left:1262px;top:482px;width:1302px;height:20px;background:#000;"></div>
<div style="left:2576px;top:472px;width:21px;height:41px;background:#464646;border:1.5px solid #5c5c5c;border-radius:5px;box-sizing:border-box;"></div>
<svg style="left:2580.0px;top:489.0px;" width="13" height="8" viewBox="0 0 13 8"><path d="M0 0H13L6.5 8Z" fill="#c0c0c0"/></svg>
<div class="t" style="left:1063px;top:538.7px;font-size:26px;line-height:26px;color:#dfdfdf;letter-spacing:0.65px;">Legend format</div>
<div style="left:1252px;top:527px;width:1014px;height:46px;background:#1e1e1e;border-radius:7px;"></div>
<div class="t" style="left:1259px;top:537.0px;font-size:26px;line-height:26px;color:#dfdfdf;letter-spacing:0.55px;">%1 - %2</div>
<div style="left:2279px;top:529px;width:200px;height:44px;background:#1e1e1e;border-radius:7px;"></div>
<div style="left:2451px;top:530px;width:28px;height:42px;background:#3e3e3e;border-left:1px solid #505050;border-radius:0 6px 6px 0;box-sizing:border-box;"></div>
<svg style="left:2458.0px;top:538.18px;" width="14" height="8" viewBox="0 0 14 8"><path d="M0 8H14L7.0 0Z" fill="#b0b0b0"/></svg>
<svg style="left:2458.0px;top:556.24px;" width="14" height="8" viewBox="0 0 14 8"><path d="M0 0H14L7.0 8Z" fill="#b0b0b0"/></svg>
<div style="left:2283px;top:531px;width:112px;height:40px;overflow:hidden;"><div class="t" style="left:-15px;top:5.5px;font-size:26px;line-height:26px;color:#dfdfdf;letter-spacing:1.1px">Precision 2</div></div>
<svg style="left:2402px;top:541px;" width="28" height="20" viewBox="0 0 28 20"><path d="M0 10L8 1H24a3 3 0 0 1 3 3V16a3 3 0 0 1-3 3H8Z" fill="#b4b4b4"/><path d="M11.5 5.5L20.5 14.5M20.5 5.5L11.5 14.5" stroke="#1e1e1e" stroke-width="2.4"/></svg>
<div style="left:2492px;top:537px;width:27px;height:27px;background:#1e1e1e;box-shadow:inset 0 0 0 1.5px #2b2b2b;border-radius:2px;"><svg width="27" height="27" viewBox="0 0 28 28" style="left:0;top:0"><path d="M6.5 14.5L11.5 22L21.5 6.5" fill="none" stroke="#c8c8c8" stroke-width="3.2" stroke-linecap="round" stroke-linejoin="round"/></svg></div>
<div class="t" style="left:2531px;top:537.6px;font-size:26px;line-height:26px;color:#dfdfdf;letter-spacing:0.5px;">Trim</div>
<div class="t" style="left:1063px;top:603.4px;font-size:26px;line-height:26px;color:#dfdfdf;letter-spacing:0.55px;">Color ramp</div>
<div style="left:1253px;top:590px;width:1319px;height:53px;background:#464646;border:2px solid #5c5c5c;border-radius:7px;box-sizing:border-box;"></div>
<div style="left:1262px;top:600px;width:1302px;height:32px;background:linear-gradient(90deg,#ff0000,#1eff0a);"></div>
<div style="left:2576px;top:591px;width:21px;height:51px;background:#464646;border:1.5px solid #5c5c5c;border-radius:5px;box-sizing:border-box;"></div>
<svg style="left:2580.0px;top:613.0px;" width="13" height="8" viewBox="0 0 13 8"><path d="M0 0H13L6.5 8Z" fill="#c0c0c0"/></svg>
<div style="left:1063px;top:706.5px;width:1533px;height:2px;background:#262626;"></div>
<div style="left:1208px;top:662px;width:170px;height:46px;background:#343434;border:2px solid #505050;border-bottom:none;border-radius:6px 6px 0 0;box-sizing:border-box;"></div>
<div style="left:1063px;top:658px;width:143px;height:52px;background:#404040;border:2px solid #565656;border-bottom:none;border-radius:6px 6px 0 0;box-sizing:border-box;"></div>
<div class="t" style="left:1087.5px;top:672.0px;font-size:26px;line-height:26px;color:#dfdfdf;letter-spacing:0.35px;">Classes</div>
<div class="t" style="left:1230.5px;top:673.0px;font-size:26px;line-height:26px;color:#dfdfdf;letter-spacing:0.45px;">Histogram</div>
<div style="left:1063px;top:732px;width:1505px;height:532px;background:#1e1e1e;"></div>
<div style="left:1063px;top:732px;width:1505px;height:32.5px;background:#3e3e3e;box-shadow:inset 0 1.5px 0 #4c4c4c, inset 0 -1.5px 0 #333;"></div>
<div style="left:1191px;top:732px;width:2px;height:32px;background:#2c2c2c;"></div>
<div style="left:1193px;top:732px;width:1px;height:32px;background:#505050;"></div>
<div style="left:1446px;top:732px;width:2px;height:32px;background:#2c2c2c;"></div>
<div style="left:1448px;top:732px;width:1px;height:32px;background:#505050;"></div>
<div class="t" style="left:1068px;top:738.0px;font-size:23px;line-height:23px;color:#0c0c0c;letter-spacing:0.1px;">Symbol</div>
<div class="t" style="left:1200px;top:738.0px;font-size:23px;line-height:23px;color:#0c0c0c;letter-spacing:0.1px;">Values</div>
<div class="t" style="left:1454px;top:738.0px;font-size:23px;line-height:23px;color:#0c0c0c;letter-spacing:0.1px;">Legend</div>
<svg style="left:1173.0px;top:742.0px;" width="14" height="8" viewBox="0 0 14 8"><path d="M0 0H14L7.0 8Z" fill="#c8c8c8"/></svg>
<div style="left:1070px;top:769px;width:27px;height:27px;background:#1e1e1e;box-shadow:inset 0 0 0 1.5px #2d2d2d;border-radius:2px;"><svg width="27" height="27" viewBox="0 0 28 28" style="left:0;top:0"><path d="M6.5 14.5L11.5 22L21.5 6.5" fill="none" stroke="#c0c0c0" stroke-width="3.2" stroke-linecap="round" stroke-linejoin="round"/></svg></div>
<div style="left:1110px;top:768.5px;width:32px;height:31px;background:rgb(255,0,0);box-shadow:inset 0 0 0 2px rgba(0,0,0,0.22);"></div>
<div class="t" style="left:1203px;top:768.2px;font-size:26px;line-height:26px;color:#e4e4e4;letter-spacing:1.55px;">35,3000 - 36,0000</div>
<div class="t" style="left:1457px;top:768.2px;font-size:26px;line-height:26px;color:#e4e4e4;letter-spacing:1.55px;">35,3 - 36</div>
<div style="left:1070px;top:805px;width:27px;height:27px;background:#1e1e1e;box-shadow:inset 0 0 0 1.5px #2d2d2d;border-radius:2px;"><svg width="27" height="27" viewBox="0 0 28 28" style="left:0;top:0"><path d="M6.5 14.5L11.5 22L21.5 6.5" fill="none" stroke="#c0c0c0" stroke-width="3.2" stroke-linecap="round" stroke-linejoin="round"/></svg></div>
<div style="left:1110px;top:804.5px;width:32px;height:31px;background:rgb(244,13,0);box-shadow:inset 0 0 0 2px rgba(0,0,0,0.22);"></div>
<div class="t" style="left:1203px;top:804.2px;font-size:26px;line-height:26px;color:#e4e4e4;letter-spacing:1.55px;">36,0000 - 38,0000</div>
<div class="t" style="left:1457px;top:804.2px;font-size:26px;line-height:26px;color:#e4e4e4;letter-spacing:1.55px;">36 - 38</div>
<div style="left:1070px;top:841px;width:27px;height:27px;background:#1e1e1e;box-shadow:inset 0 0 0 1.5px #2d2d2d;border-radius:2px;"><svg width="27" height="27" viewBox="0 0 28 28" style="left:0;top:0"><path d="M6.5 14.5L11.5 22L21.5 6.5" fill="none" stroke="#c0c0c0" stroke-width="3.2" stroke-linecap="round" stroke-linejoin="round"/></svg></div>
<div style="left:1110px;top:840.5px;width:32px;height:31px;background:rgb(232,26,0);box-shadow:inset 0 0 0 2px rgba(0,0,0,0.22);"></div>
<div class="t" style="left:1203px;top:840.2px;font-size:26px;line-height:26px;color:#e4e4e4;letter-spacing:1.55px;">38,0000 - 40,0000</div>
<div class="t" style="left:1457px;top:840.2px;font-size:26px;line-height:26px;color:#e4e4e4;letter-spacing:1.55px;">38 - 40</div>
<div style="left:1070px;top:877px;width:27px;height:27px;background:#1e1e1e;box-shadow:inset 0 0 0 1.5px #2d2d2d;border-radius:2px;"><svg width="27" height="27" viewBox="0 0 28 28" style="left:0;top:0"><path d="M6.5 14.5L11.5 22L21.5 6.5" fill="none" stroke="#c0c0c0" stroke-width="3.2" stroke-linecap="round" stroke-linejoin="round"/></svg></div>
<div style="left:1110px;top:876.5px;width:32px;height:31px;background:rgb(221,39,0);box-shadow:inset 0 0 0 2px rgba(0,0,0,0.22);"></div>
<div class="t" style="left:1203px;top:876.2px;font-size:26px;line-height:26px;color:#e4e4e4;letter-spacing:1.55px;">40,0000 - 42,0000</div>
<div class="t" style="left:1457px;top:876.2px;font-size:26px;line-height:26px;color:#e4e4e4;letter-spacing:1.55px;">40 - 42</div>
<div style="left:1070px;top:913px;width:27px;height:27px;background:#1e1e1e;box-shadow:inset 0 0 0 1.5px #2d2d2d;border-radius:2px;"><svg width="27" height="27" viewBox="0 0 28 28" style="left:0;top:0"><path d="M6.5 14.5L11.5 22L21.5 6.5" fill="none" stroke="#c0c0c0" stroke-width="3.2" stroke-linecap="round" stroke-linejoin="round"/></svg></div>
<div style="left:1110px;top:912.5px;width:32px;height:31px;background:rgb(209,52,0);box-shadow:inset 0 0 0 2px rgba(0,0,0,0.22);"></div>
<div class="t" style="left:1203px;top:912.2px;font-size:26px;line-height:26px;color:#e4e4e4;letter-spacing:1.55px;">42,0000 - 44,0000</div>
<div class="t" style="left:1457px;top:912.2px;font-size:26px;line-height:26px;color:#e4e4e4;letter-spacing:1.55px;">42 - 44</div>
<div style="left:1070px;top:949px;width:27px;height:27px;background:#1e1e1e;box-shadow:inset 0 0 0 1.5px #2d2d2d;border-radius:2px;"><svg width="27" height="27" viewBox="0 0 28 28" style="left:0;top:0"><path d="M6.5 14.5L11.5 22L21.5 6.5" fill="none" stroke="#c0c0c0" stroke-width="3.2" stroke-linecap="round" stroke-linejoin="round"/></svg></div>
<div style="left:1110px;top:948.5px;width:32px;height:31px;background:rgb(198,65,0);box-shadow:inset 0 0 0 2px rgba(0,0,0,0.22);"></div>
<div class="t" style="left:1203px;top:948.2px;font-size:26px;line-height:26px;color:#e4e4e4;letter-spacing:1.55px;">44,0000 - 46,0000</div>
<div class="t" style="left:1457px;top:948.2px;font-size:26px;line-height:26px;color:#e4e4e4;letter-spacing:1.55px;">44 - 46</div>
<div style="left:1070px;top:985px;width:27px;height:27px;background:#1e1e1e;box-shadow:inset 0 0 0 1.5px #2d2d2d;border-radius:2px;"><svg width="27" height="27" viewBox="0 0 28 28" style="left:0;top:0"><path d="M6.5 14.5L11.5 22L21.5 6.5" fill="none" stroke="#c0c0c0" stroke-width="3.2" stroke-linecap="round" stroke-linejoin="round"/></svg></div>
<div style="left:1110px;top:984.5px;width:32px;height:31px;background:rgb(187,79,0);box-shadow:inset 0 0 0 2px rgba(0,0,0,0.22);"></div>
<div class="t" style="left:1203px;top:984.2px;font-size:26px;line-height:26px;color:#e4e4e4;letter-spacing:1.55px;">46,0000 - 48,0000</div>
<div class="t" style="left:1457px;top:984.2px;font-size:26px;line-height:26px;color:#e4e4e4;letter-spacing:1.55px;">46 - 48</div>
<div style="left:1070px;top:1021px;width:27px;height:27px;background:#1e1e1e;box-shadow:inset 0 0 0 1.5px #2d2d2d;border-radius:2px;"><svg width="27" height="27" viewBox="0 0 28 28" style="left:0;top:0"><path d="M6.5 14.5L11.5 22L21.5 6.5" fill="none" stroke="#c0c0c0" stroke-width="3.2" stroke-linecap="round" stroke-linejoin="round"/></svg></div>
<div style="left:1110px;top:1020.5px;width:32px;height:31px;background:rgb(175,92,0);box-shadow:inset 0 0 0 2px rgba(0,0,0,0.22);"></div>
<div class="t" style="left:1203px;top:1020.2px;font-size:26px;line-height:26px;color:#e4e4e4;letter-spacing:1.55px;">48,0000 - 50,0000</div>
<div class="t" style="left:1457px;top:1020.2px;font-size:26px;line-height:26px;color:#e4e4e4;letter-spacing:1.55px;">48 - 50</div>
<div style="left:1070px;top:1057px;width:27px;height:27px;background:#1e1e1e;box-shadow:inset 0 0 0 1.5px #2d2d2d;border-radius:2px;"><svg width="27" height="27" viewBox="0 0 28 28" style="left:0;top:0"><path d="M6.5 14.5L11.5 22L21.5 6.5" fill="none" stroke="#c0c0c0" stroke-width="3.2" stroke-linecap="round" stroke-linejoin="round"/></svg></div>
<div style="left:1110px;top:1056.5px;width:32px;height:31px;background:rgb(164,105,0);box-shadow:inset 0 0 0 2px rgba(0,0,0,0.22);"></div>
<div class="t" style="left:1203px;top:1056.2px;font-size:26px;line-height:26px;color:#e4e4e4;letter-spacing:1.55px;">50,0000 - 52,0000</div>
<div class="t" style="left:1457px;top:1056.2px;font-size:26px;line-height:26px;color:#e4e4e4;letter-spacing:1.55px;">50 - 52</div>
<div style="left:1070px;top:1093px;width:27px;height:27px;background:#1e1e1e;box-shadow:inset 0 0 0 1.5px #2d2d2d;border-radius:2px;"><svg width="27" height="27" viewBox="0 0 28 28" style="left:0;top:0"><path d="M6.5 14.5L11.5 22L21.5 6.5" fill="none" stroke="#c0c0c0" stroke-width="3.2" stroke-linecap="round" stroke-linejoin="round"/></svg></div>
<div style="left:1110px;top:1092.5px;width:32px;height:31px;background:rgb(152,118,0);box-shadow:inset 0 0 0 2px rgba(0,0,0,0.22);"></div>
<div class="t" style="left:1203px;top:1092.2px;font-size:26px;line-height:26px;color:#e4e4e4;letter-spacing:1.55px;">52,0000 - 54,0000</div>
<div class="t" style="left:1457px;top:1092.2px;font-size:26px;line-height:26px;color:#e4e4e4;letter-spacing:1.55px;">52 - 54</div>
<div style="left:1070px;top:1129px;width:27px;height:27px;background:#1e1e1e;box-shadow:inset 0 0 0 1.5px #2d2d2d;border-radius:2px;"><svg width="27" height="27" viewBox="0 0 28 28" style="left:0;top:0"><path d="M6.5 14.5L11.5 22L21.5 6.5" fill="none" stroke="#c0c0c0" stroke-width="3.2" stroke-linecap="round" stroke-linejoin="round"/></svg></div>
<div style="left:1110px;top:1128.5px;width:32px;height:31px;background:rgb(141,131,0);box-shadow:inset 0 0 0 2px rgba(0,0,0,0.22);"></div>
<div class="t" style="left:1203px;top:1128.2px;font-size:26px;line-height:26px;color:#e4e4e4;letter-spacing:1.55px;">54,0000 - 56,0000</div>
<div class="t" style="left:1457px;top:1128.2px;font-size:26px;line-height:26px;color:#e4e4e4;letter-spacing:1.55px;">54 - 56</div>
<div style="left:1070px;top:1165px;width:27px;height:27px;background:#1e1e1e;box-shadow:inset 0 0 0 1.5px #2d2d2d;border-radius:2px;"><svg width="27" height="27" viewBox="0 0 28 28" style="left:0;top:0"><path d="M6.5 14.5L11.5 22L21.5 6.5" fill="none" stroke="#c0c0c0" stroke-width="3.2" stroke-linecap="round" stroke-linejoin="round"/></svg></div>
<div style="left:1110px;top:1164.5px;width:32px;height:31px;background:rgb(130,144,0);box-shadow:inset 0 0 0 2px rgba(0,0,0,0.22);"></div>
<div class="t" style="left:1203px;top:1164.2px;font-size:26px;line-height:26px;color:#e4e4e4;letter-spacing:1.55px;">56,0000 - 58,0000</div>
<div class="t" style="left:1457px;top:1164.2px;font-size:26px;line-height:26px;color:#e4e4e4;letter-spacing:1.55px;">56 - 58</div>
<div style="left:1070px;top:1201px;width:27px;height:27px;background:#1e1e1e;box-shadow:inset 0 0 0 1.5px #2d2d2d;border-radius:2px;"><svg width="27" height="27" viewBox="0 0 28 28" style="left:0;top:0"><path d="M6.5 14.5L11.5 22L21.5 6.5" fill="none" stroke="#c0c0c0" stroke-width="3.2" stroke-linecap="round" stroke-linejoin="round"/></svg></div>
<div style="left:1110px;top:1200.5px;width:32px;height:31px;background:rgb(118,157,0);box-shadow:inset 0 0 0 2px rgba(0,0,0,0.22);"></div>
<div class="t" style="left:1203px;top:1200.2px;font-size:26px;line-height:26px;color:#e4e4e4;letter-spacing:1.55px;">58,0000 - 60,0000</div>
<div class="t" style="left:1457px;top:1200.2px;font-size:26px;line-height:26px;color:#e4e4e4;letter-spacing:1.55px;">58 - 60</div>
<div style="left:1070px;top:1237px;width:27px;height:27px;background:#1e1e1e;box-shadow:inset 0 0 0 1.5px #2d2d2d;border-radius:2px;"><svg width="27" height="27" viewBox="0 0 28 28" style="left:0;top:0"><path d="M6.5 14.5L11.5 22L21.5 6.5" fill="none" stroke="#c0c0c0" stroke-width="3.2" stroke-linecap="round" stroke-linejoin="round"/></svg></div>
<div style="left:1110px;top:1236.5px;width:32px;height:27.5px;background:rgb(107,170,0);box-shadow:inset 0 0 0 2px rgba(0,0,0,0.22);"></div>
<div style="left:1200px;top:1236px;width:700px;height:28px;overflow:hidden;"><div class="t" style="left:3px;top:0.2px;font-size:26px;line-height:26px;color:#e4e4e4;letter-spacing:1.55px">60,0000 - 62,0000</div><div class="t" style="left:257px;top:0.2px;font-size:26px;line-height:26px;color:#e4e4e4;letter-spacing:1.55px">60 - 62</div></div>
<div style="left:1063px;top:1264px;width:1505px;height:6px;background:#323232;"></div>
<div style="left:2569px;top:732px;width:27px;height:532px;background:#383838;"></div>
<div style="left:2569px;top:731.5px;width:27px;height:26px;background:#3c3c3c;box-shadow:inset 0 0 0 1.5px #555;"></div>
<svg style="left:2575.5px;top:740.5px;" width="14" height="8" viewBox="0 0 14 8"><path d="M0 8H14L7.0 0Z" fill="#c0c0c0"/></svg>
<div style="left:2570px;top:760.5px;width:25px;height:293.5px;background:linear-gradient(90deg,#3a3a3a,#474747);box-shadow:inset 0 0 0 1.5px #525252;"></div>
<div style="left:2569px;top:1238px;width:27px;height:26px;background:#3c3c3c;box-shadow:inset 0 0 0 1.5px #555;"></div>
<svg style="left:2575.5px;top:1247.0px;" width="14" height="8" viewBox="0 0 14 8"><path d="M0 0H14L7.0 8Z" fill="#c0c0c0"/></svg>
<div class="t" style="left:1063px;top:1290.8px;font-size:26px;line-height:26px;color:#dfdfdf;letter-spacing:0.45px;">Mode</div>
<div style="left:1145px;top:1280px;width:374px;height:45px;background:linear-gradient(#4a4a4a,#414141);border:2px solid #5a5a5a;border-radius:7px;box-sizing:border-box;"></div>
<svg style="left:1156px;top:1286px;" width="32" height="32" viewBox="0 0 32 32"><rect x="0" y="0" width="32" height="32" rx="4" fill="#a0a0a0"/><path d="M2 4L30 29H2Z" fill="#c8b850"/><path d="M2 3V30M7 3V30M25 3V30" stroke="#5f8cc8" stroke-width="1.6"/><path d="M2 4L30 29" stroke="#e8d000" stroke-width="1.6"/><rect x="5" y="10" width="4" height="4" fill="#000"/><rect x="5" y="17" width="4" height="4" fill="#000"/><rect x="5" y="24" width="4" height="4" fill="#000"/><rect x="15" y="17" width="4" height="4" fill="#000"/><rect x="17" y="24" width="4" height="4" fill="#000"/><rect x="26" y="24" width="4" height="4" fill="#000"/></svg>
<div class="t" style="left:1194px;top:1290.0px;font-size:26px;line-height:26px;color:#000;letter-spacing:0.55px;">Pretty Breaks</div>
<svg style="left:1490.0px;top:1298.0px;" width="14" height="8" viewBox="0 0 14 8"><path d="M0 0H14L7.0 8Z" fill="#151515"/></svg>
<div class="t" style="left:2348px;top:1290.7px;font-size:26px;line-height:26px;color:#dfdfdf;letter-spacing:0.35px;">Classes</div>
<div style="left:2456px;top:1281px;width:141px;height:44px;background:#1e1e1e;border-radius:7px;"></div>
<div style="left:2569px;top:1282px;width:28px;height:42px;background:#3e3e3e;border-left:1px solid #505050;border-radius:0 6px 6px 0;box-sizing:border-box;"></div>
<svg style="left:2576.0px;top:1290.18px;" width="14" height="8" viewBox="0 0 14 8"><path d="M0 8H14L7.0 0Z" fill="#b0b0b0"/></svg>
<svg style="left:2576.0px;top:1308.24px;" width="14" height="8" viewBox="0 0 14 8"><path d="M0 0H14L7.0 8Z" fill="#b0b0b0"/></svg>
<div class="t" style="left:2466px;top:1290.7px;font-size:26px;line-height:26px;color:#dfdfdf;letter-spacing:1.5px;">20</div>
<svg style="left:1071px;top:1346px;" width="18" height="26" viewBox="0 0 18 26"><path d="M2 2.5L15 13L2 23.5Z" fill="none" stroke="#141414" stroke-width="2.2" stroke-linejoin="round"/></svg>
<div style="left:1102px;top:1343px;width:28px;height:27px;background:#1e1e1e;"></div>
<div class="t" style="left:1146px;top:1345.0px;font-size:26px;line-height:26px;color:#e6e6e6;font-weight:700;letter-spacing:0.62px;">Symmetric Classification</div>
<div style="left:1063px;top:1390px;width:158px;height:45px;background:linear-gradient(#474747,#3b3b3b);border:2px solid #585858;border-radius:7px;box-sizing:border-box;"></div>
<div class="t" style="left:1063px;top:1400.0px;font-size:26px;line-height:26px;color:#000;letter-spacing:0.5px;width:158px;text-align:center;">Classify</div>
<div style="left:1235px;top:1390px;width:54px;height:45px;background:linear-gradient(#474747,#3b3b3b);border:2px solid #585858;border-radius:7px;box-sizing:border-box;"></div>
<svg style="left:1248px;top:1398px;" width="28" height="28" viewBox="0 0 28 28"><path d="M10 1.5H18V10H26.5V18H18V26.5H10V18H1.5V10H10Z" fill="#fff" stroke="#5a9a5a" stroke-width="3" stroke-linejoin="round"/></svg>
<div style="left:1303px;top:1390px;width:54px;height:45px;background:linear-gradient(#474747,#3b3b3b);border:2px solid #585858;border-radius:7px;box-sizing:border-box;"></div>
<svg style="left:1316px;top:1406px;" width="28" height="12" viewBox="0 0 28 12"><rect x="1.5" y="1.5" width="25" height="9" fill="#fff" stroke="#e8424a" stroke-width="3"/></svg>
<div style="left:1371px;top:1390px;width:158px;height:45px;background:linear-gradient(#474747,#3b3b3b);border:2px solid #585858;border-radius:7px;box-sizing:border-box;"></div>
<div class="t" style="left:1371px;top:1400.0px;font-size:26px;line-height:26px;color:#000;letter-spacing:0.5px;width:158px;text-align:center;">Delete All</div>
<div style="left:2439px;top:1390px;width:158px;height:45px;background:linear-gradient(#474747,#3b3b3b);border:2px solid #585858;border-radius:7px;box-sizing:border-box;"></div>
<div class="t" style="left:2439px;top:1400.0px;font-size:26px;line-height:26px;color:#000;letter-spacing:0.35px;width:134px;text-align:center;">Advanced</div>
<svg style="left:2576.5px;top:1409.0px;" width="12" height="7" viewBox="0 0 12 7"><path d="M0 0H12L6.0 7Z" fill="#b4b4b4"/></svg>
<div style="left:1063px;top:1457px;width:27px;height:27px;background:#1e1e1e;box-shadow:inset 0 0 0 1.5px #2b2b2b;border-radius:2px;"><svg width="27" height="27" viewBox="0 0 28 28" style="left:0;top:0"><path d="M6.5 14.5L11.5 22L21.5 6.5" fill="none" stroke="#c8c8c8" stroke-width="3.2" stroke-linecap="round" stroke-linejoin="round"/></svg></div>
<div class="t" style="left:1101px;top:1458.0px;font-size:26px;line-height:26px;color:#dfdfdf;letter-spacing:0.55px;">Link class boundaries</div>
<svg style="left:1071px;top:1527px;" width="18" height="26" viewBox="0 0 18 26"><path d="M2 2.5L15 13L2 23.5Z" fill="none" stroke="#141414" stroke-width="2.2" stroke-linejoin="round"/></svg>
<div class="t" style="left:1107px;top:1528.0px;font-size:26px;line-height:26px;color:#e6e6e6;font-weight:700;letter-spacing:0.15px;">Layer Rendering</div>
<div style="left:1063px;top:1572px;width:158px;height:45px;background:linear-gradient(#474747,#3b3b3b);border:2px solid #585858;border-radius:7px;box-sizing:border-box;"></div>
<div class="t" style="left:1063px;top:1582.0px;font-size:26px;line-height:26px;color:#000;letter-spacing:0.5px;width:158px;text-align:center;">Help</div>
<div style="left:1235px;top:1572px;width:158px;height:45px;background:linear-gradient(#474747,#3b3b3b);border:2px solid #585858;border-radius:7px;box-sizing:border-box;"></div>
<div class="t" style="left:1235px;top:1582.0px;font-size:26px;line-height:26px;color:#000;letter-spacing:0.5px;width:134px;text-align:center;">Style</div>
<svg style="left:1372.5px;top:1591.0px;" width="12" height="7" viewBox="0 0 12 7"><path d="M0 0H12L6.0 7Z" fill="#b4b4b4"/></svg>
<div style="left:1407px;top:1572px;width:158px;height:45px;background:linear-gradient(#474747,#3b3b3b);border:2px solid #585858;border-radius:7px;box-sizing:border-box;"></div>
<div class="t" style="left:1407px;top:1582.0px;font-size:26px;line-height:26px;color:#000;letter-spacing:0.5px;width:158px;text-align:center;">Apply</div>
<div style="left:2267px;top:1572px;width:158px;height:45px;background:linear-gradient(#474747,#3b3b3b);border:2px solid #585858;border-radius:7px;box-sizing:border-box;"></div>
<div class="t" style="left:2267px;top:1582.0px;font-size:26px;line-height:26px;color:#000;letter-spacing:0.5px;width:158px;text-align:center;">Cancel</div>
<div style="left:2438px;top:1571px;width:160px;height:47px;background:linear-gradient(#454a58,#3a3f4c);border:2.5px solid #4d96e6;border-radius:8px;box-sizing:border-box;"></div>
<div class="t" style="left:2438px;top:1582.0px;font-size:26px;line-height:26px;color:#000;letter-spacing:0.5px;width:160px;text-align:center;">OK</div>
<svg style="left:963.0px;top:414.0px;" width="52" height="52" viewBox="0 0 48 48"><circle cx="24" cy="24" r="22.5" fill="#6d9bd1" stroke="#dfe9f5" stroke-width="1.6"/><path d="M6 18A19 19 0 0 1 30 5" fill="none" stroke="#fff" stroke-opacity="0.35" stroke-width="3"/><text x="24" y="38" text-anchor="middle" font-family="Liberation Serif, serif" font-style="italic" font-weight="700" font-size="40" fill="#fff">i</text></svg>
<svg style="left:963.0px;top:487.0px;" width="52" height="52" viewBox="0 0 48 48"><path d="M25.8 9.3L32.2 9.3L32.3 13.9L36.0 15.4L39.3 12.2L43.8 16.7L40.6 20.0L42.1 23.7L46.7 23.8L46.7 30.2L42.1 30.3L40.6 34.0L43.8 37.3L39.3 41.8L36.0 38.6L32.3 40.1L32.2 44.7L25.8 44.7L25.7 40.1L22.0 38.6L18.7 41.8L14.2 37.3L17.4 34.0L15.9 30.3L11.3 30.2L11.3 23.8L15.9 23.7L17.4 20.0L14.2 16.7L18.7 12.2L22.0 15.4L25.7 13.9Z" fill="#e4e4e4" stroke="#888" stroke-width="1.2" stroke-linejoin="round"/><circle cx="29" cy="27" r="9" fill="#6d9bd1" stroke="#3f6aa0" stroke-width="1"/><g transform="translate(9 10) rotate(-45) scale(1.12)"><rect x="-4.6" y="12" width="9.2" height="27" rx="4.4" fill="#f0dc82" stroke="#333" stroke-width="1.5"/><circle cx="0" cy="35" r="1.5" fill="#444"/><path d="M-3 6H3V14H-3Z" fill="#e8e8e8" stroke="#333" stroke-width="1.3"/><path d="M-3.5 -7.75V0.5H3.5V-7.75A8.5 8.5 0 1 1 -3.5 -7.75Z" fill="#f2f2f2" stroke="#333" stroke-width="1.5" stroke-linejoin="round"/></g></svg>
<svg style="left:963.0px;top:558.5px;" width="52" height="52" viewBox="0 0 48 48"><g transform="scale(1.26)"><path d="M2 22L10 6L28 12L22 30Z" fill="#a89c48"/><path d="M3 20L8 10L26 16L22 27Z" fill="#4a72a8"/><path d="M1 24L5 17L24 24L20 34Z" fill="#a84448"/><path d="M24 18L37 3" stroke="#a07a48" stroke-width="4.4" stroke-linecap="round"/><path d="M14 20L24 13L31 23L21 32Z" fill="#b8a484" stroke="#7a6848" stroke-width="1.2" stroke-linejoin="round"/><path d="M17 22L24 30M20 19L27 27M23 17L29 25" stroke="#7a6848" stroke-width="1"/></g></svg>
<svg style="left:963.0px;top:629.6px;" width="52" height="52" viewBox="0 0 48 48"><path d="M1 23.5L9 11H44a3 3 0 0 1 3 3V33a3 3 0 0 1 -3 3H9Z" fill="#f5e05a" stroke="#c8a800" stroke-width="1.6" stroke-linejoin="round"/><text x="27.0" y="29.8" text-anchor="middle" font-family="Liberation Sans, sans-serif" font-size="19" font-weight="700" fill="#222">abc</text></svg>
<svg style="left:963.0px;top:700.0px;" width="52" height="52" viewBox="0 0 48 48"><rect x="1" y="10" width="46" height="26" rx="13" fill="#eef0fa"/><text x="24" y="31" text-anchor="middle" font-family="Liberation Sans, sans-serif" font-size="24" font-weight="700" fill="#222" stroke="#eef0fa" stroke-width="5" paint-order="stroke" letter-spacing="1">abc</text></svg>
<svg style="left:963.0px;top:774.0px;" width="52" height="52" viewBox="0 0 48 48"><path d="M24 2L45 13L24 25L3 13Z" fill="#ff8a8a" stroke="#c01818" stroke-width="2" stroke-linejoin="round"/><path d="M3 13L24 25V46L3 34Z" fill="#7fe03a" stroke="#3f8a10" stroke-width="2" stroke-linejoin="round"/><path d="M45 13L24 25V46L45 34Z" fill="#ffe84d" stroke="#c8a000" stroke-width="2" stroke-linejoin="round"/></svg>
<svg style="left:963.0px;top:846.6px;" width="52" height="52" viewBox="0 0 48 48"><circle cx="17" cy="16" r="14" fill="#109a4a" stroke="#555" stroke-width="1"/><path d="M17 16L29.1 9A14 14 0 0 0 4.9 9Z" fill="#ffd43b" stroke="#a88400" stroke-width="0.8"/><path d="M17 16L29.1 9A14 14 0 0 1 17 30Z" fill="#c01818" stroke="#701010" stroke-width="0.8"/><rect x="15" y="30" width="9" height="15" fill="#ffb000" stroke="#c88000" stroke-width="1"/><rect x="26" y="20" width="7" height="25" fill="#109a4a" stroke="#0a6a30" stroke-width="1"/><rect x="35" y="33" width="8" height="12" fill="#c01818" stroke="#701010" stroke-width="1"/></svg>
<svg style="left:963.0px;top:917.6px;" width="52" height="52" viewBox="0 0 48 48"><rect x="2" y="5" width="44" height="40" fill="#dfe9f5" stroke="#6d9bd1" stroke-width="1.6"/><rect x="2" y="5" width="44" height="8" fill="#6d9bd1"/><path d="M20 17H42" stroke="#4a78b0" stroke-width="2.4"/><path d="M20 24H42" stroke="#4a78b0" stroke-width="2.4"/><path d="M20 31H42" stroke="#4a78b0" stroke-width="2.4"/><path d="M20 38H42" stroke="#4a78b0" stroke-width="2.4"/><rect x="11" y="2" width="12" height="46" fill="#fffaa0" stroke="#f0e000" stroke-width="2"/><rect x="15" y="8" width="4" height="4" fill="#fff"/></svg>
<svg style="left:963.0px;top:989.7px;" width="52" height="52" viewBox="0 0 48 48"><rect x="2" y="3" width="44" height="42" fill="#dfe6f0" stroke="#6d9bd1" stroke-width="1.8"/><rect x="8" y="14" width="9" height="4" fill="#23426a"/><rect x="8" y="31" width="9" height="4" fill="#23426a"/><rect x="21" y="10" width="20" height="11" rx="2" fill="#fff" stroke="#6d9bd1" stroke-width="1.4"/><rect x="21" y="27" width="20" height="11" rx="2" fill="#fff" stroke="#6d9bd1" stroke-width="1.4"/></svg>
<svg style="left:963.0px;top:1062.0px;" width="52" height="52" viewBox="0 0 48 48"><path d="M46 3V45L12 24Z" fill="#4a78b0"/><path d="M46 3V24H12Z" fill="#6d9bd1"/><circle cx="6" cy="24" r="5" fill="#6d9bd1" stroke="#4a78b0" stroke-width="1"/></svg>
<svg style="left:963.0px;top:1134.0px;" width="52" height="52" viewBox="0 0 48 48"><path d="M16 2H38L46 10V44H16Z" fill="#fff" stroke="#b0b0b0" stroke-width="1.4"/><path d="M38 2V10H46Z" fill="#e0e0e0" stroke="#b0b0b0" stroke-width="1.2"/><path d="M2 20V41C2 48 30 48 30 41V20Z" fill="#8a8a8a" stroke="#555" stroke-width="1"/><path d="M2 27C2 33 30 33 30 27M2 34C2 40 30 40 30 34" fill="none" stroke="#d8d8d8" stroke-width="1.4"/><ellipse cx="16" cy="20" rx="14" ry="5.5" fill="#c8c8c8" stroke="#555" stroke-width="1"/></svg>
<svg style="left:963.0px;top:1205.0px;" width="52" height="52" viewBox="0 0 48 48"><path d="M25.0 3.2L31.0 3.2L31.1 7.8L34.7 9.2L37.8 5.7L42.3 9.5L39.5 13.2L41.4 16.5L46.0 15.8L47.0 21.7L42.5 22.6L41.8 26.4L45.7 28.8L42.8 34.0L38.7 31.8L35.8 34.2L37.2 38.6L31.6 40.7L29.9 36.4L26.1 36.4L24.4 40.7L18.8 38.6L20.2 34.2L17.3 31.8L13.2 34.0L10.3 28.8L14.2 26.4L13.5 22.6L9.0 21.7L10.0 15.8L14.6 16.5L16.5 13.2L13.7 9.5L18.2 5.7L21.3 9.2L24.9 7.8Z" fill="#e8e8e8" stroke="#999" stroke-width="1.2" stroke-linejoin="round"/><circle cx="28" cy="22" r="10" fill="#6d9bd1" stroke="#3f6aa0" stroke-width="1.2"/><path d="M24.5 16.5L34 22L24.5 27.5Z" fill="#fff"/><path d="M6.7 32.6L9.3 32.6L9.4 34.5L10.9 35.2L12.3 33.8L14.2 35.7L12.8 37.1L13.5 38.6L15.4 38.7L15.4 41.3L13.5 41.4L12.8 42.9L14.2 44.3L12.3 46.2L10.9 44.8L9.4 45.5L9.3 47.4L6.7 47.4L6.6 45.5L5.1 44.8L3.7 46.2L1.8 44.3L3.2 42.9L2.5 41.4L0.6 41.3L0.6 38.7L2.5 38.6L3.2 37.1L1.8 35.7L3.7 33.8L5.1 35.2L6.6 34.5Z" fill="#e8e8e8" stroke="#999" stroke-width="1.2" stroke-linejoin="round"/><circle cx="8" cy="40" r="3.6" fill="#6d9bd1" stroke="#3f6aa0" stroke-width="0.8"/></svg>
<svg style="left:963.0px;top:1276.0px;" width="52" height="52" viewBox="0 0 48 48"><path d="M9 3H39A7 7 0 0 1 46 10V24A7 7 0 0 1 39 31H24C22 38 17 43 10 46C14 41 15 36 15 31H9A7 7 0 0 1 2 24V10A7 7 0 0 1 9 3Z" fill="#ede28c" stroke="#c8b040" stroke-width="2" stroke-linejoin="round"/><path d="M7 14A6 6 0 0 1 13 8H32" fill="none" stroke="#fff" stroke-opacity="0.8" stroke-width="2.6" stroke-linecap="round"/></svg>
<svg style="left:963.0px;top:1349.0px;" width="52" height="52" viewBox="0 0 48 48"><path d="M27 22L43 4" stroke="#d08a20" stroke-width="6" stroke-linecap="round"/><path d="M4 30L22 14L34 28L16 45Z" fill="#eebc70" stroke="#b07820" stroke-width="1.6" stroke-linejoin="round"/><path d="M8 33L20 46M12 29L24 42M16 25L28 38M20 21L31 34" stroke="#b07820" stroke-width="1.2"/></svg>
<svg style="left:963.0px;top:1422.0px;" width="52" height="52" viewBox="0 0 48 48"><circle cx="24" cy="24" r="22" fill="#f0f0f0" stroke="#c8c8c8" stroke-width="1.4"/><circle cx="24.0" cy="6.0" r="1.4" fill="#4a78b0"/><circle cx="33.0" cy="8.4" r="1.4" fill="#4a78b0"/><circle cx="39.6" cy="15.0" r="1.4" fill="#4a78b0"/><circle cx="42.0" cy="24.0" r="1.4" fill="#4a78b0"/><circle cx="39.6" cy="33.0" r="1.4" fill="#4a78b0"/><circle cx="33.0" cy="39.6" r="1.4" fill="#4a78b0"/><circle cx="24.0" cy="42.0" r="1.4" fill="#4a78b0"/><circle cx="15.0" cy="39.6" r="1.4" fill="#4a78b0"/><circle cx="8.4" cy="33.0" r="1.4" fill="#4a78b0"/><circle cx="6.0" cy="24.0" r="1.4" fill="#4a78b0"/><circle cx="8.4" cy="15.0" r="1.4" fill="#4a78b0"/><circle cx="15.0" cy="8.4" r="1.4" fill="#4a78b0"/><path d="M24 9V25L33 32" fill="none" stroke="#7a7a7a" stroke-width="2.8" stroke-linecap="round"/></svg>
<svg style="left:963.0px;top:1494.7px;" width="52" height="52" viewBox="0 0 48 48"><text x="23" y="42" text-anchor="middle" font-family="Liberation Serif, DejaVu Serif, serif" font-size="74" fill="#5e2d73">ε</text></svg>
<svg style="left:963.0px;top:1565.8px;" width="52" height="52" viewBox="0 0 48 48"><path d="M6 1H31L40 10V47H6Z" fill="#fff" stroke="#c0c0c0" stroke-width="1.2"/><path d="M31 1V10H40Z" fill="#e0e0e0" stroke="#b0b0b0" stroke-width="1"/><path d="M11 18H33" stroke="#999" stroke-width="1.6"/><path d="M11 23H31" stroke="#999" stroke-width="1.6"/><path d="M11 28H29" stroke="#999" stroke-width="1.6"/><path d="M11 33H33" stroke="#999" stroke-width="1.6"/><path d="M11 38H33" stroke="#999" stroke-width="1.6"/><path d="M11 43H33" stroke="#999" stroke-width="1.6"/><path d="M30 36L44 10L48 12L35 38L29 42Z" fill="#e8641e" stroke="#a84410" stroke-width="1"/><path d="M30 36L35 38L29 42Z" fill="#f4d8b0"/><path d="M44 10L48 12L49 9L46 7Z" fill="#e8e8e8"/></svg>
</body></html>
